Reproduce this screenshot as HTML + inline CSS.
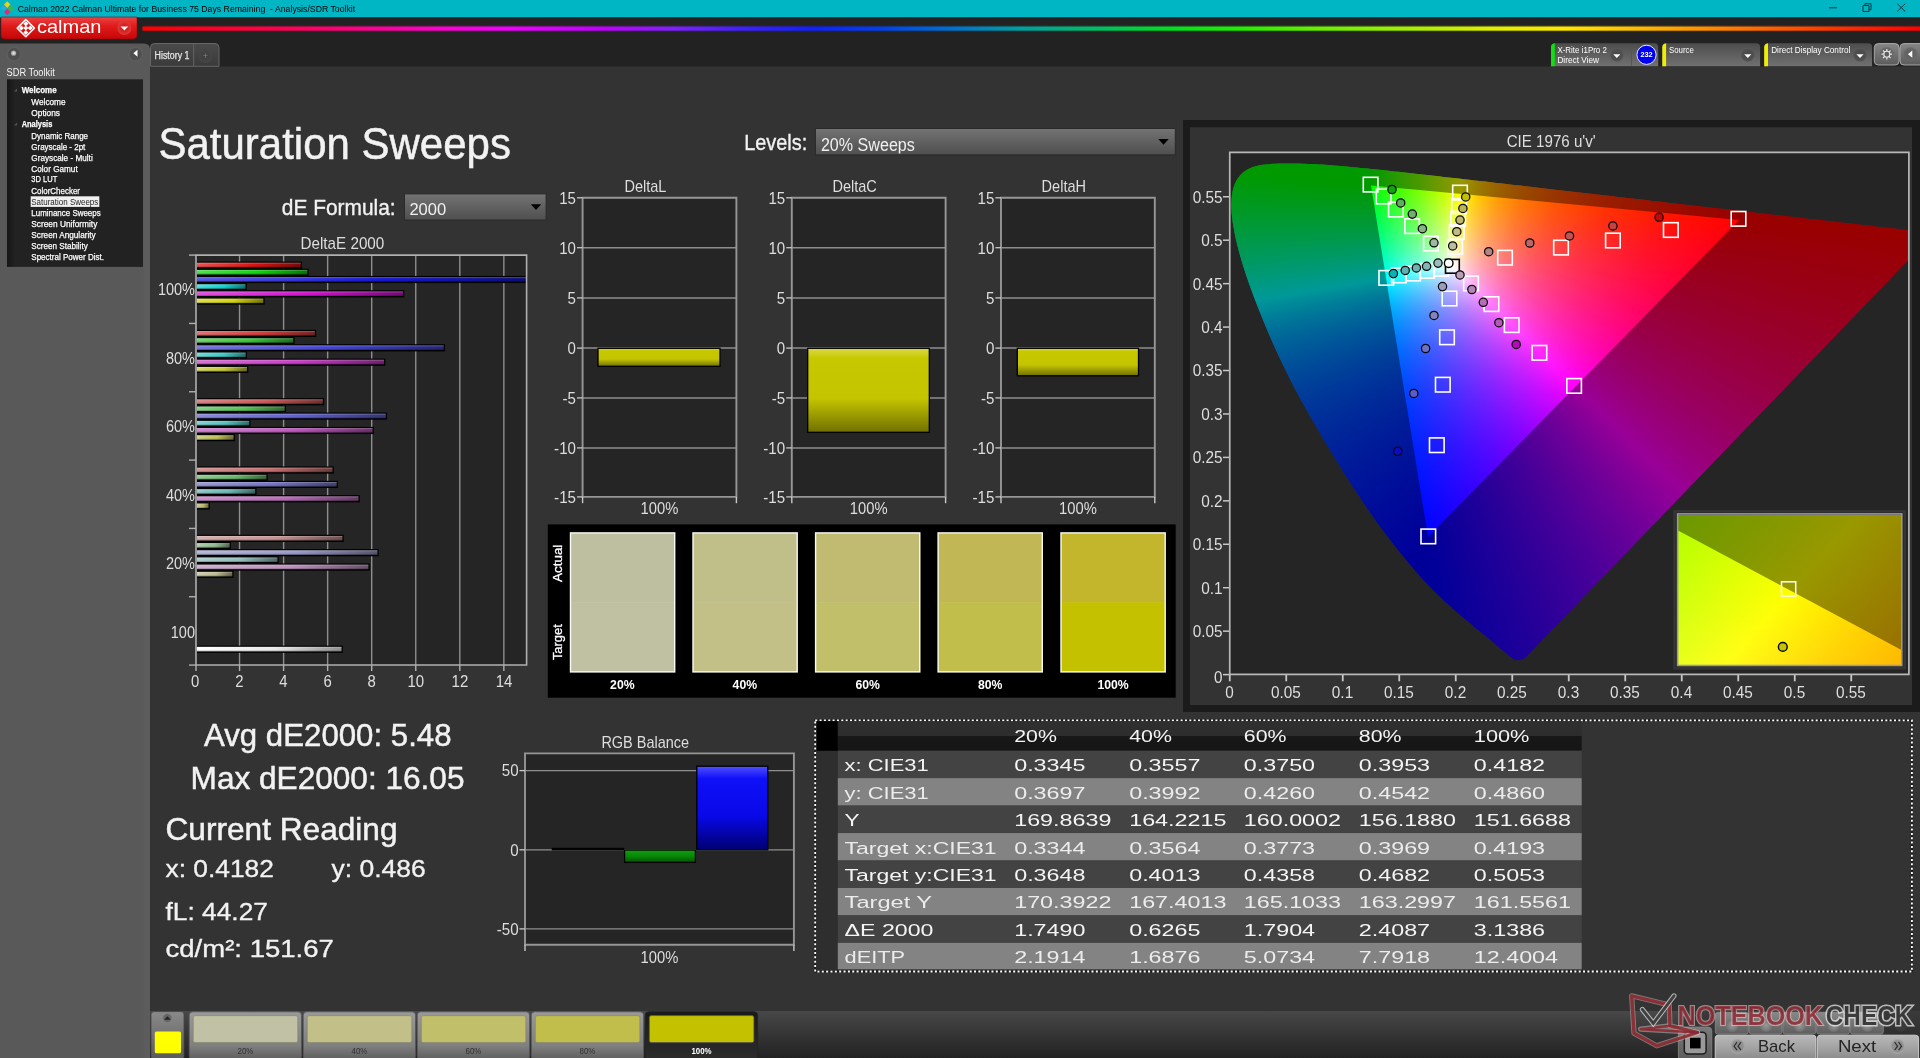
<!DOCTYPE html>
<html><head><meta charset="utf-8"><title>Calman - Saturation Sweeps</title>
<style>
html,body{margin:0;padding:0;background:#333;overflow:hidden}
body{width:1920px;height:1058px;position:relative;font-family:"Liberation Sans",sans-serif}
svg{position:absolute;left:0;top:0;will-change:transform}
svg text{font-family:"Liberation Sans",sans-serif;white-space:pre}
.cie{position:absolute;overflow:hidden}
.cie i{display:block;height:1px}
</style></head><body>
<svg width="1920" height="1058" viewBox="0 0 1920 1058"><defs><linearGradient id="g1" x1="0" y1="0" x2="0" y2="1"><stop offset="0" stop-color="#ea4444"/><stop offset="0.4" stop-color="#e01c1c"/><stop offset="1" stop-color="#c60606"/></linearGradient><radialGradient id="g2" cx="0.5" cy="0.5" r="0.5"><stop offset="0" stop-color="#c41010"/><stop offset="1" stop-color="#e23838"/></radialGradient><linearGradient id="g3" x1="0" y1="0" x2="1" y2="0"><stop offset="0" stop-color="#ff0000"/><stop offset="0.064" stop-color="#ff0040"/><stop offset="0.116" stop-color="#ff0080"/><stop offset="0.168" stop-color="#ff00d0"/><stop offset="0.207" stop-color="#f000ff"/><stop offset="0.259" stop-color="#c000ff"/><stop offset="0.298" stop-color="#8020ff"/><stop offset="0.337" stop-color="#4020ff"/><stop offset="0.376" stop-color="#1020ff"/><stop offset="0.415" stop-color="#0040f0"/><stop offset="0.454" stop-color="#0070d0"/><stop offset="0.494" stop-color="#00a0a0"/><stop offset="0.538" stop-color="#00c060"/><stop offset="0.577" stop-color="#00e020"/><stop offset="0.616" stop-color="#20f000"/><stop offset="0.655" stop-color="#60f000"/><stop offset="0.707" stop-color="#a0f000"/><stop offset="0.759" stop-color="#e0f000"/><stop offset="0.798" stop-color="#ffe800"/><stop offset="0.837" stop-color="#ffc000"/><stop offset="0.876" stop-color="#ff9000"/><stop offset="0.915" stop-color="#ff6000"/><stop offset="0.954" stop-color="#ff3000"/><stop offset="0.999" stop-color="#ff0000"/></linearGradient><radialGradient id="g4" cx="0.5" cy="0.5" r="0.5"><stop offset="0" stop-color="#4a4a4a"/><stop offset="0.8" stop-color="#505050"/><stop offset="1" stop-color="#646464"/></radialGradient><radialGradient id="g5" cx="0.5" cy="0.5" r="0.5"><stop offset="0" stop-color="#eee"/><stop offset="1" stop-color="#999"/></radialGradient><radialGradient id="g6" cx="0.5" cy="0.5" r="0.5"><stop offset="0" stop-color="#4a4a4a"/><stop offset="0.8" stop-color="#505050"/><stop offset="1" stop-color="#646464"/></radialGradient><linearGradient id="g7" x1="0" y1="0" x2="1" y2="0"><stop offset="0" stop-color="#161616"/><stop offset="0.06" stop-color="#222"/><stop offset="1" stop-color="#222"/></linearGradient><linearGradient id="g8" x1="0" y1="0" x2="0" y2="1"><stop offset="0" stop-color="#4a4a4a"/><stop offset="1" stop-color="#3a3a3a"/></linearGradient><radialGradient id="g9" cx="0.5" cy="0.5" r="0.5"><stop offset="0" stop-color="#3c3c3c"/><stop offset="1" stop-color="#464646"/></radialGradient><linearGradient id="g10" x1="0" y1="0" x2="0" y2="1"><stop offset="0" stop-color="#4d4d4d"/><stop offset="1" stop-color="#707070"/></linearGradient><radialGradient id="g11" cx="0.5" cy="0.5" r="0.5"><stop offset="0" stop-color="#484848"/><stop offset="0.8" stop-color="#505050"/><stop offset="1" stop-color="#5c5c5c"/></radialGradient><linearGradient id="g12" x1="0" y1="0" x2="0" y2="1"><stop offset="0" stop-color="#4d4d4d"/><stop offset="1" stop-color="#707070"/></linearGradient><radialGradient id="g13" cx="0.5" cy="0.5" r="0.5"><stop offset="0" stop-color="#484848"/><stop offset="0.8" stop-color="#505050"/><stop offset="1" stop-color="#5c5c5c"/></radialGradient><linearGradient id="g14" x1="0" y1="0" x2="0" y2="1"><stop offset="0" stop-color="#4d4d4d"/><stop offset="1" stop-color="#707070"/></linearGradient><radialGradient id="g15" cx="0.5" cy="0.5" r="0.5"><stop offset="0" stop-color="#484848"/><stop offset="0.8" stop-color="#505050"/><stop offset="1" stop-color="#5c5c5c"/></radialGradient><linearGradient id="g16" x1="0" y1="0" x2="0" y2="1"><stop offset="0" stop-color="#858585"/><stop offset="1" stop-color="#5c5c5c"/></linearGradient><radialGradient id="g17" cx="0.5" cy="0.5" r="0.5"><stop offset="0" stop-color="#5a5a5a"/><stop offset="1" stop-color="#6a6a6a"/></radialGradient><radialGradient id="g18" cx="0.5" cy="0.5" r="0.5"><stop offset="0" stop-color="#5a5a5a"/><stop offset="1" stop-color="#6a6a6a"/></radialGradient><linearGradient id="g19" x1="0" y1="0" x2="0" y2="1"><stop offset="0" stop-color="#737373"/><stop offset="1" stop-color="#4f4f4f"/></linearGradient><linearGradient id="g20" x1="0" y1="0" x2="0" y2="1"><stop offset="0" stop-color="#737373"/><stop offset="1" stop-color="#4f4f4f"/></linearGradient><linearGradient id="g21" x1="0" y1="0" x2="1" y2="0"><stop offset="0" stop-color="#e95353"/><stop offset="0.55" stop-color="#e01010"/><stop offset="1" stop-color="#7b0909"/></linearGradient><linearGradient id="g22" x1="0" y1="0" x2="0" y2="1"><stop offset="0" stop-color="#fff" stop-opacity="0.3"/><stop offset="0.35" stop-color="#fff" stop-opacity="0"/><stop offset="0.65" stop-color="#000" stop-opacity="0"/><stop offset="1" stop-color="#000" stop-opacity="0.3"/></linearGradient><linearGradient id="g23" x1="0" y1="0" x2="1" y2="0"><stop offset="0" stop-color="#53e053"/><stop offset="0.55" stop-color="#10d410"/><stop offset="1" stop-color="#097509"/></linearGradient><linearGradient id="g24" x1="0" y1="0" x2="0" y2="1"><stop offset="0" stop-color="#fff" stop-opacity="0.3"/><stop offset="0.35" stop-color="#fff" stop-opacity="0"/><stop offset="0.65" stop-color="#000" stop-opacity="0"/><stop offset="1" stop-color="#000" stop-opacity="0.3"/></linearGradient><linearGradient id="g25" x1="0" y1="0" x2="1" y2="0"><stop offset="0" stop-color="#5959e9"/><stop offset="0.55" stop-color="#1818e0"/><stop offset="1" stop-color="#0d0d7b"/></linearGradient><linearGradient id="g26" x1="0" y1="0" x2="0" y2="1"><stop offset="0" stop-color="#fff" stop-opacity="0.3"/><stop offset="0.35" stop-color="#fff" stop-opacity="0"/><stop offset="0.65" stop-color="#000" stop-opacity="0"/><stop offset="1" stop-color="#000" stop-opacity="0.3"/></linearGradient><linearGradient id="g27" x1="0" y1="0" x2="1" y2="0"><stop offset="0" stop-color="#53e0e0"/><stop offset="0.55" stop-color="#10d4d4"/><stop offset="1" stop-color="#097575"/></linearGradient><linearGradient id="g28" x1="0" y1="0" x2="0" y2="1"><stop offset="0" stop-color="#fff" stop-opacity="0.3"/><stop offset="0.35" stop-color="#fff" stop-opacity="0"/><stop offset="0.65" stop-color="#000" stop-opacity="0"/><stop offset="1" stop-color="#000" stop-opacity="0.3"/></linearGradient><linearGradient id="g29" x1="0" y1="0" x2="1" y2="0"><stop offset="0" stop-color="#e053e0"/><stop offset="0.55" stop-color="#d410d4"/><stop offset="1" stop-color="#750975"/></linearGradient><linearGradient id="g30" x1="0" y1="0" x2="0" y2="1"><stop offset="0" stop-color="#fff" stop-opacity="0.3"/><stop offset="0.35" stop-color="#fff" stop-opacity="0"/><stop offset="0.65" stop-color="#000" stop-opacity="0"/><stop offset="1" stop-color="#000" stop-opacity="0.3"/></linearGradient><linearGradient id="g31" x1="0" y1="0" x2="1" y2="0"><stop offset="0" stop-color="#e0e053"/><stop offset="0.55" stop-color="#d4d410"/><stop offset="1" stop-color="#757509"/></linearGradient><linearGradient id="g32" x1="0" y1="0" x2="0" y2="1"><stop offset="0" stop-color="#fff" stop-opacity="0.3"/><stop offset="0.35" stop-color="#fff" stop-opacity="0"/><stop offset="0.65" stop-color="#000" stop-opacity="0"/><stop offset="1" stop-color="#000" stop-opacity="0.3"/></linearGradient><linearGradient id="g33" x1="0" y1="0" x2="1" y2="0"><stop offset="0" stop-color="#e07373"/><stop offset="0.55" stop-color="#d43c3c"/><stop offset="1" stop-color="#752121"/></linearGradient><linearGradient id="g34" x1="0" y1="0" x2="0" y2="1"><stop offset="0" stop-color="#fff" stop-opacity="0.3"/><stop offset="0.35" stop-color="#fff" stop-opacity="0"/><stop offset="0.65" stop-color="#000" stop-opacity="0"/><stop offset="1" stop-color="#000" stop-opacity="0.3"/></linearGradient><linearGradient id="g35" x1="0" y1="0" x2="1" y2="0"><stop offset="0" stop-color="#73d773"/><stop offset="0.55" stop-color="#3cc83c"/><stop offset="1" stop-color="#216e21"/></linearGradient><linearGradient id="g36" x1="0" y1="0" x2="0" y2="1"><stop offset="0" stop-color="#fff" stop-opacity="0.3"/><stop offset="0.35" stop-color="#fff" stop-opacity="0"/><stop offset="0.65" stop-color="#000" stop-opacity="0"/><stop offset="1" stop-color="#000" stop-opacity="0.3"/></linearGradient><linearGradient id="g37" x1="0" y1="0" x2="1" y2="0"><stop offset="0" stop-color="#7878e0"/><stop offset="0.55" stop-color="#4444d4"/><stop offset="1" stop-color="#252575"/></linearGradient><linearGradient id="g38" x1="0" y1="0" x2="0" y2="1"><stop offset="0" stop-color="#fff" stop-opacity="0.3"/><stop offset="0.35" stop-color="#fff" stop-opacity="0"/><stop offset="0.65" stop-color="#000" stop-opacity="0"/><stop offset="1" stop-color="#000" stop-opacity="0.3"/></linearGradient><linearGradient id="g39" x1="0" y1="0" x2="1" y2="0"><stop offset="0" stop-color="#73d7d7"/><stop offset="0.55" stop-color="#3cc8c8"/><stop offset="1" stop-color="#216e6e"/></linearGradient><linearGradient id="g40" x1="0" y1="0" x2="0" y2="1"><stop offset="0" stop-color="#fff" stop-opacity="0.3"/><stop offset="0.35" stop-color="#fff" stop-opacity="0"/><stop offset="0.65" stop-color="#000" stop-opacity="0"/><stop offset="1" stop-color="#000" stop-opacity="0.3"/></linearGradient><linearGradient id="g41" x1="0" y1="0" x2="1" y2="0"><stop offset="0" stop-color="#d773d7"/><stop offset="0.55" stop-color="#c83cc8"/><stop offset="1" stop-color="#6e216e"/></linearGradient><linearGradient id="g42" x1="0" y1="0" x2="0" y2="1"><stop offset="0" stop-color="#fff" stop-opacity="0.3"/><stop offset="0.35" stop-color="#fff" stop-opacity="0"/><stop offset="0.65" stop-color="#000" stop-opacity="0"/><stop offset="1" stop-color="#000" stop-opacity="0.3"/></linearGradient><linearGradient id="g43" x1="0" y1="0" x2="1" y2="0"><stop offset="0" stop-color="#d7d773"/><stop offset="0.55" stop-color="#c8c83c"/><stop offset="1" stop-color="#6e6e21"/></linearGradient><linearGradient id="g44" x1="0" y1="0" x2="0" y2="1"><stop offset="0" stop-color="#fff" stop-opacity="0.3"/><stop offset="0.35" stop-color="#fff" stop-opacity="0"/><stop offset="0.65" stop-color="#000" stop-opacity="0"/><stop offset="1" stop-color="#000" stop-opacity="0.3"/></linearGradient><linearGradient id="g45" x1="0" y1="0" x2="1" y2="0"><stop offset="0" stop-color="#da8787"/><stop offset="0.55" stop-color="#cc5858"/><stop offset="1" stop-color="#703030"/></linearGradient><linearGradient id="g46" x1="0" y1="0" x2="0" y2="1"><stop offset="0" stop-color="#fff" stop-opacity="0.3"/><stop offset="0.35" stop-color="#fff" stop-opacity="0"/><stop offset="0.65" stop-color="#000" stop-opacity="0"/><stop offset="1" stop-color="#000" stop-opacity="0.3"/></linearGradient><linearGradient id="g47" x1="0" y1="0" x2="1" y2="0"><stop offset="0" stop-color="#87d287"/><stop offset="0.55" stop-color="#58c058"/><stop offset="1" stop-color="#306a30"/></linearGradient><linearGradient id="g48" x1="0" y1="0" x2="0" y2="1"><stop offset="0" stop-color="#fff" stop-opacity="0.3"/><stop offset="0.35" stop-color="#fff" stop-opacity="0"/><stop offset="0.65" stop-color="#000" stop-opacity="0"/><stop offset="1" stop-color="#000" stop-opacity="0.3"/></linearGradient><linearGradient id="g49" x1="0" y1="0" x2="1" y2="0"><stop offset="0" stop-color="#8d8dda"/><stop offset="0.55" stop-color="#6060cc"/><stop offset="1" stop-color="#353570"/></linearGradient><linearGradient id="g50" x1="0" y1="0" x2="0" y2="1"><stop offset="0" stop-color="#fff" stop-opacity="0.3"/><stop offset="0.35" stop-color="#fff" stop-opacity="0"/><stop offset="0.65" stop-color="#000" stop-opacity="0"/><stop offset="1" stop-color="#000" stop-opacity="0.3"/></linearGradient><linearGradient id="g51" x1="0" y1="0" x2="1" y2="0"><stop offset="0" stop-color="#87d2d2"/><stop offset="0.55" stop-color="#58c0c0"/><stop offset="1" stop-color="#306a6a"/></linearGradient><linearGradient id="g52" x1="0" y1="0" x2="0" y2="1"><stop offset="0" stop-color="#fff" stop-opacity="0.3"/><stop offset="0.35" stop-color="#fff" stop-opacity="0"/><stop offset="0.65" stop-color="#000" stop-opacity="0"/><stop offset="1" stop-color="#000" stop-opacity="0.3"/></linearGradient><linearGradient id="g53" x1="0" y1="0" x2="1" y2="0"><stop offset="0" stop-color="#d287d2"/><stop offset="0.55" stop-color="#c058c0"/><stop offset="1" stop-color="#6a306a"/></linearGradient><linearGradient id="g54" x1="0" y1="0" x2="0" y2="1"><stop offset="0" stop-color="#fff" stop-opacity="0.3"/><stop offset="0.35" stop-color="#fff" stop-opacity="0"/><stop offset="0.65" stop-color="#000" stop-opacity="0"/><stop offset="1" stop-color="#000" stop-opacity="0.3"/></linearGradient><linearGradient id="g55" x1="0" y1="0" x2="1" y2="0"><stop offset="0" stop-color="#d2d287"/><stop offset="0.55" stop-color="#c0c058"/><stop offset="1" stop-color="#6a6a30"/></linearGradient><linearGradient id="g56" x1="0" y1="0" x2="0" y2="1"><stop offset="0" stop-color="#fff" stop-opacity="0.3"/><stop offset="0.35" stop-color="#fff" stop-opacity="0"/><stop offset="0.65" stop-color="#000" stop-opacity="0"/><stop offset="1" stop-color="#000" stop-opacity="0.3"/></linearGradient><linearGradient id="g57" x1="0" y1="0" x2="1" y2="0"><stop offset="0" stop-color="#d59595"/><stop offset="0.55" stop-color="#c46c6c"/><stop offset="1" stop-color="#6c3b3b"/></linearGradient><linearGradient id="g58" x1="0" y1="0" x2="0" y2="1"><stop offset="0" stop-color="#fff" stop-opacity="0.3"/><stop offset="0.35" stop-color="#fff" stop-opacity="0"/><stop offset="0.65" stop-color="#000" stop-opacity="0"/><stop offset="1" stop-color="#000" stop-opacity="0.3"/></linearGradient><linearGradient id="g59" x1="0" y1="0" x2="1" y2="0"><stop offset="0" stop-color="#95cc95"/><stop offset="0.55" stop-color="#6cb86c"/><stop offset="1" stop-color="#3b653b"/></linearGradient><linearGradient id="g60" x1="0" y1="0" x2="0" y2="1"><stop offset="0" stop-color="#fff" stop-opacity="0.3"/><stop offset="0.35" stop-color="#fff" stop-opacity="0"/><stop offset="0.65" stop-color="#000" stop-opacity="0"/><stop offset="1" stop-color="#000" stop-opacity="0.3"/></linearGradient><linearGradient id="g61" x1="0" y1="0" x2="1" y2="0"><stop offset="0" stop-color="#9b9bd5"/><stop offset="0.55" stop-color="#7474c4"/><stop offset="1" stop-color="#40406c"/></linearGradient><linearGradient id="g62" x1="0" y1="0" x2="0" y2="1"><stop offset="0" stop-color="#fff" stop-opacity="0.3"/><stop offset="0.35" stop-color="#fff" stop-opacity="0"/><stop offset="0.65" stop-color="#000" stop-opacity="0"/><stop offset="1" stop-color="#000" stop-opacity="0.3"/></linearGradient><linearGradient id="g63" x1="0" y1="0" x2="1" y2="0"><stop offset="0" stop-color="#95cccc"/><stop offset="0.55" stop-color="#6cb8b8"/><stop offset="1" stop-color="#3b6565"/></linearGradient><linearGradient id="g64" x1="0" y1="0" x2="0" y2="1"><stop offset="0" stop-color="#fff" stop-opacity="0.3"/><stop offset="0.35" stop-color="#fff" stop-opacity="0"/><stop offset="0.65" stop-color="#000" stop-opacity="0"/><stop offset="1" stop-color="#000" stop-opacity="0.3"/></linearGradient><linearGradient id="g65" x1="0" y1="0" x2="1" y2="0"><stop offset="0" stop-color="#cc95cc"/><stop offset="0.55" stop-color="#b86cb8"/><stop offset="1" stop-color="#653b65"/></linearGradient><linearGradient id="g66" x1="0" y1="0" x2="0" y2="1"><stop offset="0" stop-color="#fff" stop-opacity="0.3"/><stop offset="0.35" stop-color="#fff" stop-opacity="0"/><stop offset="0.65" stop-color="#000" stop-opacity="0"/><stop offset="1" stop-color="#000" stop-opacity="0.3"/></linearGradient><linearGradient id="g67" x1="0" y1="0" x2="1" y2="0"><stop offset="0" stop-color="#cccc95"/><stop offset="0.55" stop-color="#b8b86c"/><stop offset="1" stop-color="#65653b"/></linearGradient><linearGradient id="g68" x1="0" y1="0" x2="0" y2="1"><stop offset="0" stop-color="#fff" stop-opacity="0.3"/><stop offset="0.35" stop-color="#fff" stop-opacity="0"/><stop offset="0.65" stop-color="#000" stop-opacity="0"/><stop offset="1" stop-color="#000" stop-opacity="0.3"/></linearGradient><linearGradient id="g69" x1="0" y1="0" x2="1" y2="0"><stop offset="0" stop-color="#d7b1b1"/><stop offset="0.55" stop-color="#c89292"/><stop offset="1" stop-color="#6e5050"/></linearGradient><linearGradient id="g70" x1="0" y1="0" x2="0" y2="1"><stop offset="0" stop-color="#fff" stop-opacity="0.3"/><stop offset="0.35" stop-color="#fff" stop-opacity="0"/><stop offset="0.65" stop-color="#000" stop-opacity="0"/><stop offset="1" stop-color="#000" stop-opacity="0.3"/></linearGradient><linearGradient id="g71" x1="0" y1="0" x2="1" y2="0"><stop offset="0" stop-color="#b1cfb1"/><stop offset="0.55" stop-color="#92bc92"/><stop offset="1" stop-color="#506750"/></linearGradient><linearGradient id="g72" x1="0" y1="0" x2="0" y2="1"><stop offset="0" stop-color="#fff" stop-opacity="0.3"/><stop offset="0.35" stop-color="#fff" stop-opacity="0"/><stop offset="0.65" stop-color="#000" stop-opacity="0"/><stop offset="1" stop-color="#000" stop-opacity="0.3"/></linearGradient><linearGradient id="g73" x1="0" y1="0" x2="1" y2="0"><stop offset="0" stop-color="#b6b6d7"/><stop offset="0.55" stop-color="#9a9ac8"/><stop offset="1" stop-color="#55556e"/></linearGradient><linearGradient id="g74" x1="0" y1="0" x2="0" y2="1"><stop offset="0" stop-color="#fff" stop-opacity="0.3"/><stop offset="0.35" stop-color="#fff" stop-opacity="0"/><stop offset="0.65" stop-color="#000" stop-opacity="0"/><stop offset="1" stop-color="#000" stop-opacity="0.3"/></linearGradient><linearGradient id="g75" x1="0" y1="0" x2="1" y2="0"><stop offset="0" stop-color="#b1cfcf"/><stop offset="0.55" stop-color="#92bcbc"/><stop offset="1" stop-color="#506767"/></linearGradient><linearGradient id="g76" x1="0" y1="0" x2="0" y2="1"><stop offset="0" stop-color="#fff" stop-opacity="0.3"/><stop offset="0.35" stop-color="#fff" stop-opacity="0"/><stop offset="0.65" stop-color="#000" stop-opacity="0"/><stop offset="1" stop-color="#000" stop-opacity="0.3"/></linearGradient><linearGradient id="g77" x1="0" y1="0" x2="1" y2="0"><stop offset="0" stop-color="#cfb1cf"/><stop offset="0.55" stop-color="#bc92bc"/><stop offset="1" stop-color="#675067"/></linearGradient><linearGradient id="g78" x1="0" y1="0" x2="0" y2="1"><stop offset="0" stop-color="#fff" stop-opacity="0.3"/><stop offset="0.35" stop-color="#fff" stop-opacity="0"/><stop offset="0.65" stop-color="#000" stop-opacity="0"/><stop offset="1" stop-color="#000" stop-opacity="0.3"/></linearGradient><linearGradient id="g79" x1="0" y1="0" x2="1" y2="0"><stop offset="0" stop-color="#cfcfb1"/><stop offset="0.55" stop-color="#bcbc92"/><stop offset="1" stop-color="#676750"/></linearGradient><linearGradient id="g80" x1="0" y1="0" x2="0" y2="1"><stop offset="0" stop-color="#fff" stop-opacity="0.3"/><stop offset="0.35" stop-color="#fff" stop-opacity="0"/><stop offset="0.65" stop-color="#000" stop-opacity="0"/><stop offset="1" stop-color="#000" stop-opacity="0.3"/></linearGradient><linearGradient id="g81" x1="0" y1="0" x2="1" y2="0"><stop offset="0" stop-color="#ffffff"/><stop offset="0.55" stop-color="#e8e8e8"/><stop offset="1" stop-color="#909090"/></linearGradient><linearGradient id="g82" x1="0" y1="0" x2="0" y2="1"><stop offset="0" stop-color="#fff" stop-opacity="0.3"/><stop offset="0.35" stop-color="#fff" stop-opacity="0"/><stop offset="0.65" stop-color="#000" stop-opacity="0"/><stop offset="1" stop-color="#000" stop-opacity="0.3"/></linearGradient><linearGradient id="g83" x1="0" y1="0" x2="0" y2="1"><stop offset="0" stop-color="#d8d84a"/><stop offset="0.12" stop-color="#c8c800"/><stop offset="0.6" stop-color="#c4c400"/><stop offset="1" stop-color="#707000"/></linearGradient><linearGradient id="g84" x1="0" y1="0" x2="0" y2="1"><stop offset="0" stop-color="#d8d84a"/><stop offset="0.12" stop-color="#c8c800"/><stop offset="0.6" stop-color="#c4c400"/><stop offset="1" stop-color="#707000"/></linearGradient><linearGradient id="g85" x1="0" y1="0" x2="0" y2="1"><stop offset="0" stop-color="#d8d84a"/><stop offset="0.12" stop-color="#c8c800"/><stop offset="0.6" stop-color="#c4c400"/><stop offset="1" stop-color="#707000"/></linearGradient><linearGradient id="g86" x1="0" y1="0" x2="0" y2="1"><stop offset="0" stop-color="#10a010"/><stop offset="0.5" stop-color="#088808"/><stop offset="1" stop-color="#045004"/></linearGradient><linearGradient id="g87" x1="0" y1="0" x2="0" y2="1"><stop offset="0" stop-color="#5050ff"/><stop offset="0.15" stop-color="#1010f8"/><stop offset="0.6" stop-color="#0808e8"/><stop offset="1" stop-color="#000070"/></linearGradient><linearGradient id="g88" x1="0" y1="0" x2="0" y2="1"><stop offset="0" stop-color="#2f2f2f"/><stop offset="0.5" stop-color="#2d2d2d"/><stop offset="0.5" stop-color="#181818"/><stop offset="1" stop-color="#151515"/></linearGradient><linearGradient id="g89" x1="0" y1="0" x2="0" y2="1"><stop offset="0" stop-color="#484848"/><stop offset="0.3" stop-color="#3c3c3c"/><stop offset="1" stop-color="#222"/></linearGradient><linearGradient id="g90" x1="0" y1="0" x2="0" y2="1"><stop offset="0" stop-color="#8a8a8a"/><stop offset="1" stop-color="#5a5a5a"/></linearGradient><linearGradient id="g91" x1="0" y1="0" x2="0" y2="1"><stop offset="0" stop-color="#9a9a9a"/><stop offset="0.7" stop-color="#808080"/><stop offset="1" stop-color="#5c5c5c"/></linearGradient><linearGradient id="g92" x1="0" y1="0" x2="0" y2="1"><stop offset="0" stop-color="#9a9a9a"/><stop offset="0.7" stop-color="#808080"/><stop offset="1" stop-color="#5c5c5c"/></linearGradient><linearGradient id="g93" x1="0" y1="0" x2="0" y2="1"><stop offset="0" stop-color="#9a9a9a"/><stop offset="0.7" stop-color="#808080"/><stop offset="1" stop-color="#5c5c5c"/></linearGradient><linearGradient id="g94" x1="0" y1="0" x2="0" y2="1"><stop offset="0" stop-color="#9a9a9a"/><stop offset="0.7" stop-color="#808080"/><stop offset="1" stop-color="#5c5c5c"/></linearGradient><linearGradient id="g95" x1="0" y1="0" x2="0" y2="1"><stop offset="0" stop-color="#1a1a1a"/><stop offset="1" stop-color="#2c2c2c"/></linearGradient><linearGradient id="g96" x1="0" y1="0" x2="0" y2="1"><stop offset="0" stop-color="#b8b8b8"/><stop offset="0.5" stop-color="#a2a2a2"/><stop offset="1" stop-color="#858585"/></linearGradient><linearGradient id="g97" x1="0" y1="0" x2="0" y2="1"><stop offset="0" stop-color="#3a3a3a"/><stop offset="1" stop-color="#262626"/></linearGradient><linearGradient id="g98" x1="0" y1="0" x2="0" y2="1"><stop offset="0" stop-color="#888"/><stop offset="0.5" stop-color="#747474"/><stop offset="1" stop-color="#5e5e5e"/></linearGradient><radialGradient id="g99" cx="0.5" cy="0.5" r="0.5"><stop offset="0" stop-color="#9a9a9a"/><stop offset="1" stop-color="#707070"/></radialGradient><radialGradient id="g100" cx="0.5" cy="0.5" r="0.5"><stop offset="0" stop-color="#9a9a9a"/><stop offset="1" stop-color="#707070"/></radialGradient><radialGradient id="g101" cx="0.5" cy="0.5" r="0.5"><stop offset="0" stop-color="#9a9a9a"/><stop offset="1" stop-color="#707070"/></radialGradient><radialGradient id="g102" cx="0.5" cy="0.5" r="0.5"><stop offset="0" stop-color="#9a9a9a"/><stop offset="1" stop-color="#707070"/></radialGradient><radialGradient id="g103" cx="0.5" cy="0.5" r="0.5"><stop offset="0" stop-color="#9a9a9a"/><stop offset="1" stop-color="#707070"/></radialGradient><linearGradient id="g104" x1="0" y1="0" x2="0" y2="1"><stop offset="0" stop-color="#7a7a7a"/><stop offset="1" stop-color="#5a5a5a"/></linearGradient><radialGradient id="g105" cx="0.5" cy="0.5" r="0.5"><stop offset="0" stop-color="#8a8a8a"/><stop offset="0.7" stop-color="#909090"/><stop offset="1" stop-color="#a8a8a8"/></radialGradient></defs>
<rect x="0" y="0" width="1920" height="1058" fill="#333"/>
<rect x="0" y="17" width="1920" height="49.5" fill="#222"/>
<rect x="0" y="0" width="1920" height="17.2" fill="#00b5c4"/>
<path d="M7.2 1.3l3.2 3.3l-3.2 3.3l-3.2-3.3z" fill="#e8d21d"/>
<path d="M3.6 5l3.2 3.3l-3.2 3.3l-3.2-3.3z" fill="#2aa9e0"/>
<path d="M10.9 5l3.2 3.3l-3.2 3.3l-3.2-3.3z" fill="#3db54a"/>
<path d="M7.2 8.7l3.2 3.3l-3.2 3.3l-3.2-3.3z" fill="#e5267d"/>
<text x="17.7" y="12.1" font-size="9.9" fill="#000" textLength="337.5" lengthAdjust="spacingAndGlyphs">Calman 2022 Calman Ultimate for Business 75 Days Remaining  - Analysis/SDR Toolkit</text>
<line x1="1829" y1="7.8" x2="1837" y2="7.8" stroke="#10363a" stroke-width="1"/>
<path d="M1863 5.5h6v6h-6zM1865 5.5v-1.8h6v6h-2" fill="none" stroke="#10363a" stroke-width="1"/>
<path d="M1897.2 3.7l8 7.8M1905.2 3.7l-8 7.8" fill="none" stroke="#10363a" stroke-width="1"/>
<path d="M1 17H137V35q0 4-4 4H5q-4 0-4-4z" fill="url(#g1)" stroke="#8c0a14" stroke-width="0.6"/>
<path d="M25.8 19.5l8.6 8.6l-8.6 8.6l-8.6-8.6z" fill="none" stroke="#fff" stroke-width="1.5" stroke-linejoin="round"/>
<path d="M25.8 21.2l2.5 2.5l-2.5 2.5l-2.5-2.5z" fill="#fff"/>
<path d="M21.4 25.6l2.5 2.5l-2.5 2.5l-2.5-2.5z" fill="#fff"/>
<path d="M30.2 25.6l2.5 2.5l-2.5 2.5l-2.5-2.5z" fill="#fff"/>
<path d="M25.8 30l2.5 2.5l-2.5 2.5l-2.5-2.5z" fill="#fff"/>
<path d="M25.8 25.6l2.5 2.5l-2.5 2.5l-2.5-2.5z" fill="#fff"/>
<text x="37.0" y="32.5" font-size="18.5" fill="#fff" textLength="64.4" lengthAdjust="spacingAndGlyphs">calman</text>
<circle cx="124.4" cy="28" r="7" fill="url(#g2)"/>
<path d="M120.6 26.4h7.6l-3.8 4.2z" fill="#fff"/>
<rect x="142.3" y="25.8" width="1780" height="5.4" fill="url(#g3)" rx="1.5" opacity="0.4"/>
<rect x="142.5" y="26.7" width="1780" height="3.7" fill="url(#g3)" rx="1"/>
<path d="M0 43.5H144q6 0 6 6V1058H0z" fill="#595959"/>
<rect x="143.5" y="80" width="6.5" height="978" fill="#5c5c5c"/>
<circle cx="14" cy="54.2" r="7.2" fill="url(#g4)"/>
<circle cx="13.6" cy="53.2" r="2.6" fill="url(#g5)"/>
<circle cx="135.6" cy="54.2" r="7.2" fill="url(#g6)"/>
<path d="M137.5 49.8v7l-4.2-3.5z" fill="#fff"/>
<text x="6.6" y="75.9" font-size="10.3" fill="#f4f4f4" textLength="48.2" lengthAdjust="spacingAndGlyphs">SDR Toolkit</text>
<rect x="7" y="79.3" width="136" height="187.6" fill="url(#g7)"/>
<text x="21.7" y="92.8" font-size="9.0" fill="#fff" textLength="35.0" lengthAdjust="spacingAndGlyphs" font-weight="bold" stroke="#fff" stroke-width="0.25">Welcome</text>
<path d="M14 91.5l3-3v3z" fill="#555"/>
<text x="31.3" y="104.5" font-size="9.0" fill="#fff" textLength="34.3" lengthAdjust="spacingAndGlyphs" stroke="#fff" stroke-width="0.25">Welcome</text>
<text x="31.3" y="115.5" font-size="9.0" fill="#fff" textLength="28.7" lengthAdjust="spacingAndGlyphs" stroke="#fff" stroke-width="0.25">Options</text>
<text x="21.7" y="126.8" font-size="9.0" fill="#fff" textLength="30.6" lengthAdjust="spacingAndGlyphs" font-weight="bold" stroke="#fff" stroke-width="0.25">Analysis</text>
<path d="M14 125.5l3-3v3z" fill="#555"/>
<text x="31.3" y="138.8" font-size="9.0" fill="#fff" textLength="56.7" lengthAdjust="spacingAndGlyphs" stroke="#fff" stroke-width="0.25">Dynamic Range</text>
<text x="31.3" y="149.5" font-size="9.0" fill="#fff" textLength="54.0" lengthAdjust="spacingAndGlyphs" stroke="#fff" stroke-width="0.25">Grayscale - 2pt</text>
<text x="31.3" y="160.5" font-size="9.0" fill="#fff" textLength="61.4" lengthAdjust="spacingAndGlyphs" stroke="#fff" stroke-width="0.25">Grayscale - Multi</text>
<text x="31.3" y="171.8" font-size="9.0" fill="#fff" textLength="46.4" lengthAdjust="spacingAndGlyphs" stroke="#fff" stroke-width="0.25">Color Gamut</text>
<text x="31.3" y="182.1" font-size="9.0" fill="#fff" textLength="26.0" lengthAdjust="spacingAndGlyphs" stroke="#fff" stroke-width="0.25">3D LUT</text>
<text x="31.3" y="193.5" font-size="9.0" fill="#fff" textLength="48.7" lengthAdjust="spacingAndGlyphs" stroke="#fff" stroke-width="0.25">ColorChecker</text>
<rect x="30.7" y="196.3" width="68.6" height="10.6" fill="#f0f0f0"/>
<text x="31.3" y="204.5" font-size="9.0" fill="#222" textLength="67.0" lengthAdjust="spacingAndGlyphs">Saturation Sweeps</text>
<text x="31.3" y="215.5" font-size="9.0" fill="#fff" textLength="69.4" lengthAdjust="spacingAndGlyphs" stroke="#fff" stroke-width="0.25">Luminance Sweeps</text>
<text x="31.3" y="226.5" font-size="9.0" fill="#fff" textLength="66.0" lengthAdjust="spacingAndGlyphs" stroke="#fff" stroke-width="0.25">Screen Uniformity</text>
<text x="31.3" y="237.8" font-size="9.0" fill="#fff" textLength="64.4" lengthAdjust="spacingAndGlyphs" stroke="#fff" stroke-width="0.25">Screen Angularity</text>
<text x="31.3" y="248.5" font-size="9.0" fill="#fff" textLength="56.4" lengthAdjust="spacingAndGlyphs" stroke="#fff" stroke-width="0.25">Screen Stability</text>
<text x="31.3" y="259.8" font-size="9.0" fill="#fff" textLength="72.7" lengthAdjust="spacingAndGlyphs" stroke="#fff" stroke-width="0.25">Spectral Power Dist.</text>
<path d="M150.5 66.3V47.5q0-4 4-4H215q4 0 4 4V66.3z" fill="url(#g8)" stroke="#666" stroke-width="1"/>
<line x1="193.6" y1="44" x2="193.6" y2="66" stroke="#5e5e5e" stroke-width="1.2"/>
<text x="154.6" y="58.9" font-size="10.0" fill="#e6e6e6" textLength="34.8" lengthAdjust="spacingAndGlyphs" stroke="#e6e6e6" stroke-width="0.25">History 1</text>
<circle cx="205.4" cy="56.1" r="7" fill="url(#g9)"/>
<text x="205.4" y="59.0" font-size="9.0" fill="#888" text-anchor="middle">+</text>
<path d="M1551 66.2V47.3q0-4 4-4H1654.2q4 0 4 4V66.2z" fill="url(#g10)"/>
<path d="M1551 66.2V47.3q0-3.5 3.8-4V66.2z" fill="#10e010"/>
<text x="1557.4" y="53.2" font-size="9.6" fill="#fff" textLength="49.5" lengthAdjust="spacingAndGlyphs">X-Rite i1Pro 2</text>
<text x="1557.4" y="63.4" font-size="9.6" fill="#fff" textLength="41.6" lengthAdjust="spacingAndGlyphs">Direct View</text>
<circle cx="1616.8" cy="54.8" r="7" fill="url(#g11)"/>
<path d="M1613.2 54.2h7.2l-3.6 3.8z" fill="#fff"/>
<line x1="1631.4" y1="46" x2="1631.4" y2="66" stroke="#555" stroke-width="1"/>
<circle cx="1646.5" cy="54.8" r="9.6" fill="#0000f0" stroke="#e8e8ff" stroke-width="1"/>
<text x="1640.4" y="57.4" font-size="7.3" fill="#fff" textLength="12.2" lengthAdjust="spacingAndGlyphs" font-weight="bold">232</text>
<path d="M1662.3 66.2V47.3q0-4 4-4H1756.1q4 0 4 4V66.2z" fill="url(#g12)"/>
<path d="M1662.3 66.2V47.3q0-3.5 3.8-4V66.2z" fill="#f0ee00"/>
<text x="1669.0" y="53.2" font-size="9.6" fill="#fff" textLength="24.9" lengthAdjust="spacingAndGlyphs">Source</text>
<circle cx="1747.8" cy="54.8" r="7" fill="url(#g13)"/>
<path d="M1744.2 54.2h7.2l-3.6 3.8z" fill="#fff"/>
<path d="M1764.2 66.2V47.3q0-4 4-4H1868.1q4 0 4 4V66.2z" fill="url(#g14)"/>
<path d="M1764.2 66.2V47.3q0-3.5 3.8-4V66.2z" fill="#f0ee00"/>
<text x="1771.2" y="53.2" font-size="9.6" fill="#fff" textLength="79.1" lengthAdjust="spacingAndGlyphs">Direct Display Control</text>
<circle cx="1860" cy="54.8" r="7" fill="url(#g15)"/>
<path d="M1856.4 54.2h7.2l-3.6 3.8z" fill="#fff"/>
<rect x="1874.3" y="43.6" width="24.8" height="21.4" fill="url(#g16)" rx="4" stroke="#b0b0b0" stroke-width="0.9"/>
<rect x="1900" y="43.6" width="26" height="21.4" fill="url(#g16)" rx="4" stroke="#b0b0b0" stroke-width="0.9"/>
<circle cx="1886.7" cy="54.3" r="7" fill="url(#g17)"/>
<circle cx="1910.5" cy="54.3" r="7" fill="url(#g18)"/>
<path d="M1889.80 54.20L1892.10 54.20M1888.92 56.32L1890.55 57.95M1886.80 57.20L1886.80 59.50M1884.68 56.32L1883.05 57.95M1883.80 54.20L1881.50 54.20M1884.68 52.08L1883.05 50.45M1886.80 51.20L1886.80 48.90M1888.92 52.08L1890.55 50.45" fill="none" stroke="#e4e4e4" stroke-width="1.25"/>
<circle cx="1886.8" cy="54.2" r="3" fill="none" stroke="#e4e4e4" stroke-width="1.15"/>
<path d="M1912.3 50.6v7.2l-4.4-3.6z" fill="#fff"/>
<text x="158.5" y="158.7" font-size="43.6" fill="#f2f2f2" textLength="352.4" lengthAdjust="spacingAndGlyphs" stroke="#f2f2f2" stroke-width="0.50">Saturation Sweeps</text>
<text x="281.8" y="215.3" font-size="22.7" fill="#f2f2f2" textLength="113.8" lengthAdjust="spacingAndGlyphs" stroke="#f2f2f2" stroke-width="0.35">dE Formula:</text>
<rect x="404.5" y="193.9" width="141.6" height="26.1" fill="url(#g19)" stroke="#2a2a2a" stroke-width="1"/>
<clipPath id="cp404"><rect x="404.5" y="193.9" width="141.6" height="24.6"/></clipPath>
<text x="409.4" y="215.0" font-size="16.6" fill="#f0f0f0" textLength="36.9" lengthAdjust="spacingAndGlyphs" clip-path="url(#cp404)">2000</text>
<path d="M530.8 204.35h10.4l-5.2 5.6z" fill="#000"/>
<text x="300.5" y="248.8" font-size="16.1" fill="#dedede" textLength="83.8" lengthAdjust="spacingAndGlyphs">DeltaE 2000</text>
<text x="744.2" y="150.2" font-size="22.5" fill="#f2f2f2" textLength="63.1" lengthAdjust="spacingAndGlyphs" stroke="#f2f2f2" stroke-width="0.35">Levels:</text>
<rect x="815.4" y="128.5" width="359.9" height="26.4" fill="url(#g20)" stroke="#2a2a2a" stroke-width="1"/>
<clipPath id="cp815"><rect x="815.4" y="128.5" width="359.9" height="24.9"/></clipPath>
<text x="820.9" y="151.0" font-size="17.5" fill="#f0f0f0" textLength="94.0" lengthAdjust="spacingAndGlyphs" clip-path="url(#cp815)">20% Sweeps</text>
<path d="M1158.3 139.1h10.4l-5.2 5.6z" fill="#000"/>
<rect x="196" y="255.1" width="330.6" height="409.9" fill="#252525"/>
<line x1="239.55" y1="255.1" x2="239.55" y2="665" stroke="#8e8e8e" stroke-width="1.4"/>
<line x1="283.6" y1="255.1" x2="283.6" y2="665" stroke="#8e8e8e" stroke-width="1.4"/>
<line x1="327.65" y1="255.1" x2="327.65" y2="665" stroke="#8e8e8e" stroke-width="1.4"/>
<line x1="371.7" y1="255.1" x2="371.7" y2="665" stroke="#8e8e8e" stroke-width="1.4"/>
<line x1="415.75" y1="255.1" x2="415.75" y2="665" stroke="#8e8e8e" stroke-width="1.4"/>
<line x1="459.8" y1="255.1" x2="459.8" y2="665" stroke="#8e8e8e" stroke-width="1.4"/>
<line x1="503.85" y1="255.1" x2="503.85" y2="665" stroke="#8e8e8e" stroke-width="1.4"/>
<rect x="196.8" y="261.55" width="105.279" height="7.2" fill="#000"/>
<rect x="196.8" y="262.75" width="103.979" height="4.5" fill="url(#g21)"/>
<rect x="196.8" y="262.75" width="103.979" height="4.5" fill="url(#g22)"/>
<rect x="196.8" y="268.73" width="111.887" height="7.2" fill="#000"/>
<rect x="196.8" y="269.93" width="110.587" height="4.5" fill="url(#g23)"/>
<rect x="196.8" y="269.93" width="110.587" height="4.5" fill="url(#g24)"/>
<rect x="196.8" y="275.91" width="330.5" height="7.2" fill="#000"/>
<rect x="196.8" y="277.11" width="329.2" height="4.5" fill="url(#g25)"/>
<rect x="196.8" y="277.11" width="329.2" height="4.5" fill="url(#g26)"/>
<rect x="196.8" y="283.09" width="49.9967" height="7.2" fill="#000"/>
<rect x="196.8" y="284.29" width="48.6967" height="4.5" fill="url(#g27)"/>
<rect x="196.8" y="284.29" width="48.6967" height="4.5" fill="url(#g28)"/>
<rect x="196.8" y="290.27" width="207.476" height="7.2" fill="#000"/>
<rect x="196.8" y="291.47" width="206.175" height="4.5" fill="url(#g29)"/>
<rect x="196.8" y="291.47" width="206.175" height="4.5" fill="url(#g30)"/>
<rect x="196.8" y="297.45" width="67.837" height="7.2" fill="#000"/>
<rect x="196.8" y="298.65" width="66.537" height="4.5" fill="url(#g31)"/>
<rect x="196.8" y="298.65" width="66.537" height="4.5" fill="url(#g32)"/>
<rect x="196.8" y="329.85" width="119.375" height="7.2" fill="#000"/>
<rect x="196.8" y="331.05" width="118.075" height="4.5" fill="url(#g33)"/>
<rect x="196.8" y="331.05" width="118.075" height="4.5" fill="url(#g34)"/>
<rect x="196.8" y="337.03" width="97.791" height="7.2" fill="#000"/>
<rect x="196.8" y="338.23" width="96.491" height="4.5" fill="url(#g35)"/>
<rect x="196.8" y="338.23" width="96.491" height="4.5" fill="url(#g36)"/>
<rect x="196.8" y="344.21" width="248.222" height="7.2" fill="#000"/>
<rect x="196.8" y="345.41" width="246.922" height="4.5" fill="url(#g37)"/>
<rect x="196.8" y="345.41" width="246.922" height="4.5" fill="url(#g38)"/>
<rect x="196.8" y="351.39" width="50.217" height="7.2" fill="#000"/>
<rect x="196.8" y="352.59" width="48.917" height="4.5" fill="url(#g39)"/>
<rect x="196.8" y="352.59" width="48.917" height="4.5" fill="url(#g40)"/>
<rect x="196.8" y="358.57" width="188.534" height="7.2" fill="#000"/>
<rect x="196.8" y="359.77" width="187.234" height="4.5" fill="url(#g41)"/>
<rect x="196.8" y="359.77" width="187.234" height="4.5" fill="url(#g42)"/>
<rect x="196.8" y="365.75" width="51.5385" height="7.2" fill="#000"/>
<rect x="196.8" y="366.95" width="50.2385" height="4.5" fill="url(#g43)"/>
<rect x="196.8" y="366.95" width="50.2385" height="4.5" fill="url(#g44)"/>
<rect x="196.8" y="398.15" width="127.304" height="7.2" fill="#000"/>
<rect x="196.8" y="399.35" width="126.004" height="4.5" fill="url(#g45)"/>
<rect x="196.8" y="399.35" width="126.004" height="4.5" fill="url(#g46)"/>
<rect x="196.8" y="405.33" width="89.2012" height="7.2" fill="#000"/>
<rect x="196.8" y="406.53" width="87.9012" height="4.5" fill="url(#g47)"/>
<rect x="196.8" y="406.53" width="87.9012" height="4.5" fill="url(#g48)"/>
<rect x="196.8" y="412.51" width="190.296" height="7.2" fill="#000"/>
<rect x="196.8" y="413.71" width="188.996" height="4.5" fill="url(#g49)"/>
<rect x="196.8" y="413.71" width="188.996" height="4.5" fill="url(#g50)"/>
<rect x="196.8" y="419.69" width="53.741" height="7.2" fill="#000"/>
<rect x="196.8" y="420.89" width="52.441" height="4.5" fill="url(#g51)"/>
<rect x="196.8" y="420.89" width="52.441" height="4.5" fill="url(#g52)"/>
<rect x="196.8" y="426.87" width="177.081" height="7.2" fill="#000"/>
<rect x="196.8" y="428.07" width="175.781" height="4.5" fill="url(#g53)"/>
<rect x="196.8" y="428.07" width="175.781" height="4.5" fill="url(#g54)"/>
<rect x="196.8" y="434.05" width="38.1032" height="7.2" fill="#000"/>
<rect x="196.8" y="435.25" width="36.8032" height="4.5" fill="url(#g55)"/>
<rect x="196.8" y="435.25" width="36.8032" height="4.5" fill="url(#g56)"/>
<rect x="196.8" y="466.45" width="136.995" height="7.2" fill="#000"/>
<rect x="196.8" y="467.65" width="135.695" height="4.5" fill="url(#g57)"/>
<rect x="196.8" y="467.65" width="135.695" height="4.5" fill="url(#g58)"/>
<rect x="196.8" y="473.63" width="70.9205" height="7.2" fill="#000"/>
<rect x="196.8" y="474.83" width="69.6205" height="4.5" fill="url(#g59)"/>
<rect x="196.8" y="474.83" width="69.6205" height="4.5" fill="url(#g60)"/>
<rect x="196.8" y="480.81" width="141.18" height="7.2" fill="#000"/>
<rect x="196.8" y="482.01" width="139.88" height="4.5" fill="url(#g61)"/>
<rect x="196.8" y="482.01" width="139.88" height="4.5" fill="url(#g62)"/>
<rect x="196.8" y="487.99" width="59.6877" height="7.2" fill="#000"/>
<rect x="196.8" y="489.19" width="58.3877" height="4.5" fill="url(#g63)"/>
<rect x="196.8" y="489.19" width="58.3877" height="4.5" fill="url(#g64)"/>
<rect x="196.8" y="495.17" width="162.985" height="7.2" fill="#000"/>
<rect x="196.8" y="496.37" width="161.685" height="4.5" fill="url(#g65)"/>
<rect x="196.8" y="496.37" width="161.685" height="4.5" fill="url(#g66)"/>
<rect x="196.8" y="502.35" width="12.9947" height="7.2" fill="#000"/>
<rect x="196.8" y="503.55" width="11.6947" height="4.5" fill="url(#g67)"/>
<rect x="196.8" y="503.55" width="11.6947" height="4.5" fill="url(#g68)"/>
<rect x="196.8" y="534.75" width="146.907" height="7.2" fill="#000"/>
<rect x="196.8" y="535.95" width="145.607" height="4.5" fill="url(#g69)"/>
<rect x="196.8" y="535.95" width="145.607" height="4.5" fill="url(#g70)"/>
<rect x="196.8" y="541.93" width="34.1388" height="7.2" fill="#000"/>
<rect x="196.8" y="543.13" width="32.8388" height="4.5" fill="url(#g71)"/>
<rect x="196.8" y="543.13" width="32.8388" height="4.5" fill="url(#g72)"/>
<rect x="196.8" y="549.11" width="181.926" height="7.2" fill="#000"/>
<rect x="196.8" y="550.31" width="180.626" height="4.5" fill="url(#g73)"/>
<rect x="196.8" y="550.31" width="180.626" height="4.5" fill="url(#g74)"/>
<rect x="196.8" y="556.29" width="81.933" height="7.2" fill="#000"/>
<rect x="196.8" y="557.49" width="80.633" height="4.5" fill="url(#g75)"/>
<rect x="196.8" y="557.49" width="80.633" height="4.5" fill="url(#g76)"/>
<rect x="196.8" y="563.47" width="172.896" height="7.2" fill="#000"/>
<rect x="196.8" y="564.67" width="171.596" height="4.5" fill="url(#g77)"/>
<rect x="196.8" y="564.67" width="171.596" height="4.5" fill="url(#g78)"/>
<rect x="196.8" y="570.65" width="36.7817" height="7.2" fill="#000"/>
<rect x="196.8" y="571.85" width="35.4817" height="4.5" fill="url(#g79)"/>
<rect x="196.8" y="571.85" width="35.4817" height="4.5" fill="url(#g80)"/>
<rect x="196.8" y="645.65" width="146.026" height="7.2" fill="#000"/>
<rect x="196.8" y="646.85" width="144.726" height="4.5" fill="url(#g81)"/>
<rect x="196.8" y="646.85" width="144.726" height="4.5" fill="url(#g82)"/>
<path d="M196 255.1H526.6V665H196Z" fill="none" stroke="#b0b0b0" stroke-width="1.6"/>
<line x1="189" y1="255.1" x2="196" y2="255.1" stroke="#b0b0b0" stroke-width="1.4"/>
<line x1="189" y1="323.43" x2="196" y2="323.43" stroke="#b0b0b0" stroke-width="1.4"/>
<line x1="189" y1="391.76" x2="196" y2="391.76" stroke="#b0b0b0" stroke-width="1.4"/>
<line x1="189" y1="460.09" x2="196" y2="460.09" stroke="#b0b0b0" stroke-width="1.4"/>
<line x1="189" y1="528.42" x2="196" y2="528.42" stroke="#b0b0b0" stroke-width="1.4"/>
<line x1="189" y1="596.75" x2="196" y2="596.75" stroke="#b0b0b0" stroke-width="1.4"/>
<line x1="189" y1="665.08" x2="196" y2="665.08" stroke="#b0b0b0" stroke-width="1.4"/>
<line x1="196" y1="665" x2="196" y2="671" stroke="#b0b0b0" stroke-width="1.4"/>
<text x="191.1" y="687.2" font-size="15.6" fill="#dedede" textLength="8.3" lengthAdjust="spacingAndGlyphs">0</text>
<line x1="239.55" y1="665" x2="239.55" y2="671" stroke="#b0b0b0" stroke-width="1.4"/>
<text x="235.2" y="687.2" font-size="15.6" fill="#dedede" textLength="8.3" lengthAdjust="spacingAndGlyphs">2</text>
<line x1="283.6" y1="665" x2="283.6" y2="671" stroke="#b0b0b0" stroke-width="1.4"/>
<text x="279.3" y="687.2" font-size="15.6" fill="#dedede" textLength="8.3" lengthAdjust="spacingAndGlyphs">4</text>
<line x1="327.65" y1="665" x2="327.65" y2="671" stroke="#b0b0b0" stroke-width="1.4"/>
<text x="323.4" y="687.2" font-size="15.6" fill="#dedede" textLength="8.3" lengthAdjust="spacingAndGlyphs">6</text>
<line x1="371.7" y1="665" x2="371.7" y2="671" stroke="#b0b0b0" stroke-width="1.4"/>
<text x="367.5" y="687.2" font-size="15.6" fill="#dedede" textLength="8.3" lengthAdjust="spacingAndGlyphs">8</text>
<line x1="415.75" y1="665" x2="415.75" y2="671" stroke="#b0b0b0" stroke-width="1.4"/>
<text x="407.5" y="687.2" font-size="15.6" fill="#dedede" textLength="16.7" lengthAdjust="spacingAndGlyphs">10</text>
<line x1="459.8" y1="665" x2="459.8" y2="671" stroke="#b0b0b0" stroke-width="1.4"/>
<text x="451.6" y="687.2" font-size="15.6" fill="#dedede" textLength="16.7" lengthAdjust="spacingAndGlyphs">12</text>
<line x1="503.85" y1="665" x2="503.85" y2="671" stroke="#b0b0b0" stroke-width="1.4"/>
<text x="495.7" y="687.2" font-size="15.6" fill="#dedede" textLength="16.7" lengthAdjust="spacingAndGlyphs">14</text>
<text x="157.9" y="295.0" font-size="15.6" fill="#dedede" textLength="37.1" lengthAdjust="spacingAndGlyphs">100%</text>
<text x="166.0" y="363.6" font-size="15.6" fill="#dedede" textLength="29.0" lengthAdjust="spacingAndGlyphs">80%</text>
<text x="166.0" y="432.2" font-size="15.6" fill="#dedede" textLength="29.0" lengthAdjust="spacingAndGlyphs">60%</text>
<text x="166.0" y="500.8" font-size="15.6" fill="#dedede" textLength="29.0" lengthAdjust="spacingAndGlyphs">40%</text>
<text x="166.0" y="569.4" font-size="15.6" fill="#dedede" textLength="29.0" lengthAdjust="spacingAndGlyphs">20%</text>
<text x="170.8" y="638.0" font-size="15.6" fill="#dedede" textLength="24.2" lengthAdjust="spacingAndGlyphs">100</text>
<rect x="582.6" y="197.8" width="153.8" height="299.1" fill="#252525"/>
<line x1="582.6" y1="247.7" x2="736.4" y2="247.7" stroke="#8e8e8e" stroke-width="1.5"/>
<line x1="582.6" y1="297.9" x2="736.4" y2="297.9" stroke="#8e8e8e" stroke-width="1.5"/>
<line x1="582.6" y1="348.1" x2="736.4" y2="348.1" stroke="#8e8e8e" stroke-width="1.5"/>
<line x1="582.6" y1="397.9" x2="736.4" y2="397.9" stroke="#8e8e8e" stroke-width="1.5"/>
<line x1="582.6" y1="447.9" x2="736.4" y2="447.9" stroke="#8e8e8e" stroke-width="1.5"/>
<path d="M582.6 197.8H736.4V496.9H582.6Z" fill="none" stroke="#969696" stroke-width="1.9"/>
<line x1="577" y1="197.8" x2="582.6" y2="197.8" stroke="#c8c8c8" stroke-width="1.3"/>
<text x="559.2" y="203.7" font-size="16.8" fill="#dedede" textLength="16.8" lengthAdjust="spacingAndGlyphs">15</text>
<line x1="577" y1="247.7" x2="582.6" y2="247.7" stroke="#c8c8c8" stroke-width="1.3"/>
<text x="559.2" y="253.6" font-size="16.8" fill="#dedede" textLength="16.8" lengthAdjust="spacingAndGlyphs">10</text>
<line x1="577" y1="297.9" x2="582.6" y2="297.9" stroke="#c8c8c8" stroke-width="1.3"/>
<text x="567.6" y="303.8" font-size="16.8" fill="#dedede" textLength="8.4" lengthAdjust="spacingAndGlyphs">5</text>
<line x1="577" y1="348.1" x2="582.6" y2="348.1" stroke="#c8c8c8" stroke-width="1.3"/>
<text x="567.6" y="354.0" font-size="16.8" fill="#dedede" textLength="8.4" lengthAdjust="spacingAndGlyphs">0</text>
<line x1="577" y1="397.9" x2="582.6" y2="397.9" stroke="#c8c8c8" stroke-width="1.3"/>
<text x="562.6" y="403.8" font-size="16.8" fill="#dedede" textLength="13.4" lengthAdjust="spacingAndGlyphs">-5</text>
<line x1="577" y1="447.9" x2="582.6" y2="447.9" stroke="#c8c8c8" stroke-width="1.3"/>
<text x="554.1" y="453.8" font-size="16.8" fill="#dedede" textLength="21.9" lengthAdjust="spacingAndGlyphs">-10</text>
<line x1="577" y1="496.9" x2="582.6" y2="496.9" stroke="#c8c8c8" stroke-width="1.3"/>
<text x="554.1" y="502.8" font-size="16.8" fill="#dedede" textLength="21.9" lengthAdjust="spacingAndGlyphs">-15</text>
<line x1="582.6" y1="496.9" x2="582.6" y2="503.2" stroke="#c8c8c8" stroke-width="1.4"/>
<line x1="736.4" y1="496.9" x2="736.4" y2="503.2" stroke="#c8c8c8" stroke-width="1.4"/>
<text x="624.4" y="191.7" font-size="16.1" fill="#dedede" textLength="42.0" lengthAdjust="spacingAndGlyphs">DeltaL</text>
<text x="640.6" y="514.4" font-size="16.8" fill="#dedede" textLength="37.8" lengthAdjust="spacingAndGlyphs">100%</text>
<rect x="598" y="348.3" width="122" height="18" fill="url(#g83)" stroke="#000" stroke-width="1.3"/>
<rect x="791.8" y="197.8" width="153.8" height="299.1" fill="#252525"/>
<line x1="791.8" y1="247.7" x2="945.6" y2="247.7" stroke="#8e8e8e" stroke-width="1.5"/>
<line x1="791.8" y1="297.9" x2="945.6" y2="297.9" stroke="#8e8e8e" stroke-width="1.5"/>
<line x1="791.8" y1="348.1" x2="945.6" y2="348.1" stroke="#8e8e8e" stroke-width="1.5"/>
<line x1="791.8" y1="397.9" x2="945.6" y2="397.9" stroke="#8e8e8e" stroke-width="1.5"/>
<line x1="791.8" y1="447.9" x2="945.6" y2="447.9" stroke="#8e8e8e" stroke-width="1.5"/>
<path d="M791.8 197.8H945.6V496.9H791.8Z" fill="none" stroke="#969696" stroke-width="1.9"/>
<line x1="786.2" y1="197.8" x2="791.8" y2="197.8" stroke="#c8c8c8" stroke-width="1.3"/>
<text x="768.4" y="203.7" font-size="16.8" fill="#dedede" textLength="16.8" lengthAdjust="spacingAndGlyphs">15</text>
<line x1="786.2" y1="247.7" x2="791.8" y2="247.7" stroke="#c8c8c8" stroke-width="1.3"/>
<text x="768.4" y="253.6" font-size="16.8" fill="#dedede" textLength="16.8" lengthAdjust="spacingAndGlyphs">10</text>
<line x1="786.2" y1="297.9" x2="791.8" y2="297.9" stroke="#c8c8c8" stroke-width="1.3"/>
<text x="776.8" y="303.8" font-size="16.8" fill="#dedede" textLength="8.4" lengthAdjust="spacingAndGlyphs">5</text>
<line x1="786.2" y1="348.1" x2="791.8" y2="348.1" stroke="#c8c8c8" stroke-width="1.3"/>
<text x="776.8" y="354.0" font-size="16.8" fill="#dedede" textLength="8.4" lengthAdjust="spacingAndGlyphs">0</text>
<line x1="786.2" y1="397.9" x2="791.8" y2="397.9" stroke="#c8c8c8" stroke-width="1.3"/>
<text x="771.8" y="403.8" font-size="16.8" fill="#dedede" textLength="13.4" lengthAdjust="spacingAndGlyphs">-5</text>
<line x1="786.2" y1="447.9" x2="791.8" y2="447.9" stroke="#c8c8c8" stroke-width="1.3"/>
<text x="763.3" y="453.8" font-size="16.8" fill="#dedede" textLength="21.9" lengthAdjust="spacingAndGlyphs">-10</text>
<line x1="786.2" y1="496.9" x2="791.8" y2="496.9" stroke="#c8c8c8" stroke-width="1.3"/>
<text x="763.3" y="502.8" font-size="16.8" fill="#dedede" textLength="21.9" lengthAdjust="spacingAndGlyphs">-15</text>
<line x1="791.8" y1="496.9" x2="791.8" y2="503.2" stroke="#c8c8c8" stroke-width="1.4"/>
<line x1="945.6" y1="496.9" x2="945.6" y2="503.2" stroke="#c8c8c8" stroke-width="1.4"/>
<text x="832.4" y="191.7" font-size="16.1" fill="#dedede" textLength="44.4" lengthAdjust="spacingAndGlyphs">DeltaC</text>
<text x="849.8" y="514.4" font-size="16.8" fill="#dedede" textLength="37.8" lengthAdjust="spacingAndGlyphs">100%</text>
<rect x="807.7" y="348.3" width="121.6" height="84" fill="url(#g84)" stroke="#000" stroke-width="1.3"/>
<rect x="1001" y="197.8" width="153.8" height="299.1" fill="#252525"/>
<line x1="1001" y1="247.7" x2="1154.8" y2="247.7" stroke="#8e8e8e" stroke-width="1.5"/>
<line x1="1001" y1="297.9" x2="1154.8" y2="297.9" stroke="#8e8e8e" stroke-width="1.5"/>
<line x1="1001" y1="348.1" x2="1154.8" y2="348.1" stroke="#8e8e8e" stroke-width="1.5"/>
<line x1="1001" y1="397.9" x2="1154.8" y2="397.9" stroke="#8e8e8e" stroke-width="1.5"/>
<line x1="1001" y1="447.9" x2="1154.8" y2="447.9" stroke="#8e8e8e" stroke-width="1.5"/>
<path d="M1001 197.8H1154.8V496.9H1001Z" fill="none" stroke="#969696" stroke-width="1.9"/>
<line x1="995.4" y1="197.8" x2="1001" y2="197.8" stroke="#c8c8c8" stroke-width="1.3"/>
<text x="977.6" y="203.7" font-size="16.8" fill="#dedede" textLength="16.8" lengthAdjust="spacingAndGlyphs">15</text>
<line x1="995.4" y1="247.7" x2="1001" y2="247.7" stroke="#c8c8c8" stroke-width="1.3"/>
<text x="977.6" y="253.6" font-size="16.8" fill="#dedede" textLength="16.8" lengthAdjust="spacingAndGlyphs">10</text>
<line x1="995.4" y1="297.9" x2="1001" y2="297.9" stroke="#c8c8c8" stroke-width="1.3"/>
<text x="986.0" y="303.8" font-size="16.8" fill="#dedede" textLength="8.4" lengthAdjust="spacingAndGlyphs">5</text>
<line x1="995.4" y1="348.1" x2="1001" y2="348.1" stroke="#c8c8c8" stroke-width="1.3"/>
<text x="986.0" y="354.0" font-size="16.8" fill="#dedede" textLength="8.4" lengthAdjust="spacingAndGlyphs">0</text>
<line x1="995.4" y1="397.9" x2="1001" y2="397.9" stroke="#c8c8c8" stroke-width="1.3"/>
<text x="981.0" y="403.8" font-size="16.8" fill="#dedede" textLength="13.4" lengthAdjust="spacingAndGlyphs">-5</text>
<line x1="995.4" y1="447.9" x2="1001" y2="447.9" stroke="#c8c8c8" stroke-width="1.3"/>
<text x="972.5" y="453.8" font-size="16.8" fill="#dedede" textLength="21.9" lengthAdjust="spacingAndGlyphs">-10</text>
<line x1="995.4" y1="496.9" x2="1001" y2="496.9" stroke="#c8c8c8" stroke-width="1.3"/>
<text x="972.5" y="502.8" font-size="16.8" fill="#dedede" textLength="21.9" lengthAdjust="spacingAndGlyphs">-15</text>
<line x1="1001" y1="496.9" x2="1001" y2="503.2" stroke="#c8c8c8" stroke-width="1.4"/>
<line x1="1154.8" y1="496.9" x2="1154.8" y2="503.2" stroke="#c8c8c8" stroke-width="1.4"/>
<text x="1041.6" y="191.7" font-size="16.1" fill="#dedede" textLength="44.4" lengthAdjust="spacingAndGlyphs">DeltaH</text>
<text x="1059.0" y="514.4" font-size="16.8" fill="#dedede" textLength="37.8" lengthAdjust="spacingAndGlyphs">100%</text>
<rect x="1017.3" y="348.3" width="121.2" height="27.5" fill="url(#g85)" stroke="#000" stroke-width="1.3"/>
<rect x="547.8" y="524.4" width="627.9" height="173.3" fill="#000"/>
<rect x="569.8" y="532.2" width="105.6" height="140.4" fill="#fbfbf4"/>
<rect x="571.2" y="533.6" width="102.8" height="69.2" fill="#bdbfa0"/>
<rect x="571.2" y="602.3" width="102.8" height="68.9" fill="#bfc1a2"/>
<rect x="692.3" y="532.2" width="105.6" height="140.4" fill="#fbfbf4"/>
<rect x="693.7" y="533.6" width="102.8" height="69.2" fill="#c0be89"/>
<rect x="693.7" y="602.3" width="102.8" height="68.9" fill="#c2c087"/>
<rect x="814.9" y="532.2" width="105.6" height="140.4" fill="#fbfbf4"/>
<rect x="816.3" y="533.6" width="102.8" height="69.2" fill="#c1bb72"/>
<rect x="816.3" y="602.3" width="102.8" height="68.9" fill="#c2bf6a"/>
<rect x="937.4" y="532.2" width="105.6" height="140.4" fill="#fbfbf4"/>
<rect x="938.8" y="533.6" width="102.8" height="69.2" fill="#c1b855"/>
<rect x="938.8" y="602.3" width="102.8" height="68.9" fill="#c1be4b"/>
<rect x="1060.3" y="532.2" width="105.6" height="140.4" fill="#fbfbf4"/>
<rect x="1061.7" y="533.6" width="102.8" height="69.2" fill="#c3b62c"/>
<rect x="1061.7" y="602.3" width="102.8" height="68.9" fill="#c4c200"/>
<text x="610.1" y="689.3" font-size="13.6" fill="#fff" textLength="24.5" lengthAdjust="spacingAndGlyphs" font-weight="bold">20%</text>
<text x="732.6" y="689.3" font-size="13.6" fill="#fff" textLength="24.5" lengthAdjust="spacingAndGlyphs" font-weight="bold">40%</text>
<text x="855.5" y="689.3" font-size="13.6" fill="#fff" textLength="24.5" lengthAdjust="spacingAndGlyphs" font-weight="bold">60%</text>
<text x="978.0" y="689.3" font-size="13.6" fill="#fff" textLength="24.5" lengthAdjust="spacingAndGlyphs" font-weight="bold">80%</text>
<text x="1097.4" y="689.3" font-size="13.6" fill="#fff" textLength="31.3" lengthAdjust="spacingAndGlyphs" font-weight="bold">100%</text>
<g transform="translate(561.6,563.3) rotate(-90)">
<text x="-18.6" y="0.0" font-size="13.6" fill="#fff" textLength="37.2" lengthAdjust="spacingAndGlyphs" stroke="#fff" stroke-width="0.3">Actual</text>
</g>
<g transform="translate(561.6,642.2) rotate(-90)">
<text x="-17.9" y="0.0" font-size="13.6" fill="#fff" textLength="35.9" lengthAdjust="spacingAndGlyphs" stroke="#fff" stroke-width="0.3">Target</text>
</g>
<text x="204.0" y="746.4" font-size="32.0" fill="#f2f2f2" textLength="247.5" lengthAdjust="spacingAndGlyphs" stroke="#f2f2f2" stroke-width="0.50">Avg dE2000: 5.48</text>
<text x="190.6" y="788.7" font-size="32.0" fill="#f2f2f2" textLength="273.9" lengthAdjust="spacingAndGlyphs" stroke="#f2f2f2" stroke-width="0.50">Max dE2000: 16.05</text>
<text x="165.5" y="840.3" font-size="31.5" fill="#f2f2f2" textLength="232.0" lengthAdjust="spacingAndGlyphs" stroke="#f2f2f2" stroke-width="0.50">Current Reading</text>
<text x="165.5" y="877.0" font-size="24.7" fill="#f2f2f2" textLength="108.3" lengthAdjust="spacingAndGlyphs" stroke="#f2f2f2" stroke-width="0.35">x: 0.4182</text>
<text x="331.5" y="877.0" font-size="24.7" fill="#f2f2f2" textLength="94.2" lengthAdjust="spacingAndGlyphs" stroke="#f2f2f2" stroke-width="0.35">y: 0.486</text>
<text x="165.5" y="920.0" font-size="24.7" fill="#f2f2f2" textLength="102.4" lengthAdjust="spacingAndGlyphs" stroke="#f2f2f2" stroke-width="0.35">fL: 44.27</text>
<text x="165.5" y="956.8" font-size="24.7" fill="#f2f2f2" textLength="168.4" lengthAdjust="spacingAndGlyphs" stroke="#f2f2f2" stroke-width="0.35">cd/m²: 151.67</text>
<rect x="525" y="753.4" width="268.9" height="191.3" fill="#252525"/>
<line x1="525" y1="770.6" x2="793.9" y2="770.6" stroke="#8e8e8e" stroke-width="1.3"/>
<line x1="525" y1="849.8" x2="793.9" y2="849.8" stroke="#8e8e8e" stroke-width="1.3"/>
<line x1="525" y1="928.9" x2="793.9" y2="928.9" stroke="#8e8e8e" stroke-width="1.3"/>
<path d="M525 753.4H793.9V944.7H525Z" fill="none" stroke="#969696" stroke-width="1.9"/>
<line x1="519.4" y1="770.6" x2="525" y2="770.6" stroke="#c8c8c8" stroke-width="1.3"/>
<text x="501.8" y="776.3" font-size="16.8" fill="#dedede" textLength="16.8" lengthAdjust="spacingAndGlyphs">50</text>
<line x1="519.4" y1="849.8" x2="525" y2="849.8" stroke="#c8c8c8" stroke-width="1.3"/>
<text x="510.2" y="855.5" font-size="16.8" fill="#dedede" textLength="8.4" lengthAdjust="spacingAndGlyphs">0</text>
<line x1="519.4" y1="928.9" x2="525" y2="928.9" stroke="#c8c8c8" stroke-width="1.3"/>
<text x="496.7" y="934.6" font-size="16.8" fill="#dedede" textLength="21.9" lengthAdjust="spacingAndGlyphs">-50</text>
<line x1="525" y1="944.7" x2="525" y2="951" stroke="#c8c8c8" stroke-width="1.4"/>
<line x1="793.9" y1="944.7" x2="793.9" y2="951" stroke="#c8c8c8" stroke-width="1.4"/>
<text x="601.4" y="748.1" font-size="16.1" fill="#dedede" textLength="87.6" lengthAdjust="spacingAndGlyphs">RGB Balance</text>
<text x="640.6" y="962.6" font-size="16.8" fill="#dedede" textLength="37.8" lengthAdjust="spacingAndGlyphs">100%</text>
<rect x="552.2" y="848.3" width="71.5" height="1.6" fill="#000" stroke="#000" stroke-width="1"/>
<rect x="624.6" y="850" width="70.8" height="12.4" fill="url(#g86)" stroke="#000" stroke-width="1.3"/>
<rect x="696.8" y="766.2" width="71" height="83.6" fill="url(#g87)" stroke="#000" stroke-width="1.3"/>
<rect x="815.2" y="720.3" width="1096.7" height="251.2" fill="none" stroke="#1c1c1c" stroke-width="2"/>
<rect x="815.2" y="720.3" width="1096.7" height="251.2" fill="none" stroke="#fff" stroke-width="1.8" stroke-dasharray="2 2.35"/>
<rect x="816.7" y="721.2" width="21.2" height="249.2" fill="#2e2e2e"/>
<rect x="816.7" y="721.2" width="21.2" height="29.6" fill="#000"/>
<rect x="837.8" y="721.2" width="743.9" height="29.6" fill="url(#g88)"/>
<text x="1014.2" y="742.3" font-size="16.7" fill="#f4f4f4" textLength="42.7" lengthAdjust="spacingAndGlyphs">20%</text>
<text x="1129.2" y="742.3" font-size="16.7" fill="#f4f4f4" textLength="42.7" lengthAdjust="spacingAndGlyphs">40%</text>
<text x="1243.8" y="742.3" font-size="16.7" fill="#f4f4f4" textLength="42.7" lengthAdjust="spacingAndGlyphs">60%</text>
<text x="1358.8" y="742.3" font-size="16.7" fill="#f4f4f4" textLength="42.7" lengthAdjust="spacingAndGlyphs">80%</text>
<text x="1473.8" y="742.3" font-size="16.7" fill="#f4f4f4" textLength="55.6" lengthAdjust="spacingAndGlyphs">100%</text>
<rect x="837.8" y="750.7" width="743.9" height="27.45" fill="#434343"/>
<text x="844.6" y="771.1" font-size="16.7" fill="#f4f4f4" textLength="84.2" lengthAdjust="spacingAndGlyphs">x: CIE31</text>
<text x="1014.2" y="771.1" font-size="16.7" fill="#f4f4f4" textLength="71.3" lengthAdjust="spacingAndGlyphs">0.3345</text>
<text x="1129.2" y="771.1" font-size="16.7" fill="#f4f4f4" textLength="71.3" lengthAdjust="spacingAndGlyphs">0.3557</text>
<text x="1243.8" y="771.1" font-size="16.7" fill="#f4f4f4" textLength="71.3" lengthAdjust="spacingAndGlyphs">0.3750</text>
<text x="1358.8" y="771.1" font-size="16.7" fill="#f4f4f4" textLength="71.3" lengthAdjust="spacingAndGlyphs">0.3953</text>
<text x="1473.8" y="771.1" font-size="16.7" fill="#f4f4f4" textLength="71.3" lengthAdjust="spacingAndGlyphs">0.4182</text>
<rect x="837.8" y="778.15" width="743.9" height="27.45" fill="#838383"/>
<text x="844.6" y="798.6" font-size="16.7" fill="#ececec" textLength="84.2" lengthAdjust="spacingAndGlyphs">y: CIE31</text>
<text x="1014.2" y="798.6" font-size="16.7" fill="#ececec" textLength="71.3" lengthAdjust="spacingAndGlyphs">0.3697</text>
<text x="1129.2" y="798.6" font-size="16.7" fill="#ececec" textLength="71.3" lengthAdjust="spacingAndGlyphs">0.3992</text>
<text x="1243.8" y="798.6" font-size="16.7" fill="#ececec" textLength="71.3" lengthAdjust="spacingAndGlyphs">0.4260</text>
<text x="1358.8" y="798.6" font-size="16.7" fill="#ececec" textLength="71.3" lengthAdjust="spacingAndGlyphs">0.4542</text>
<text x="1473.8" y="798.6" font-size="16.7" fill="#ececec" textLength="71.3" lengthAdjust="spacingAndGlyphs">0.4860</text>
<rect x="837.8" y="805.6" width="743.9" height="27.45" fill="#434343"/>
<text x="844.6" y="826.0" font-size="16.7" fill="#f4f4f4" textLength="15.1" lengthAdjust="spacingAndGlyphs">Y</text>
<text x="1014.2" y="826.0" font-size="16.7" fill="#f4f4f4" textLength="97.2" lengthAdjust="spacingAndGlyphs">169.8639</text>
<text x="1129.2" y="826.0" font-size="16.7" fill="#f4f4f4" textLength="97.2" lengthAdjust="spacingAndGlyphs">164.2215</text>
<text x="1243.8" y="826.0" font-size="16.7" fill="#f4f4f4" textLength="97.2" lengthAdjust="spacingAndGlyphs">160.0002</text>
<text x="1358.8" y="826.0" font-size="16.7" fill="#f4f4f4" textLength="97.2" lengthAdjust="spacingAndGlyphs">156.1880</text>
<text x="1473.8" y="826.0" font-size="16.7" fill="#f4f4f4" textLength="97.2" lengthAdjust="spacingAndGlyphs">151.6688</text>
<rect x="837.8" y="833.05" width="743.9" height="27.45" fill="#838383"/>
<text x="844.6" y="853.5" font-size="16.7" fill="#ececec" textLength="152.0" lengthAdjust="spacingAndGlyphs">Target x:CIE31</text>
<text x="1014.2" y="853.5" font-size="16.7" fill="#ececec" textLength="71.3" lengthAdjust="spacingAndGlyphs">0.3344</text>
<text x="1129.2" y="853.5" font-size="16.7" fill="#ececec" textLength="71.3" lengthAdjust="spacingAndGlyphs">0.3564</text>
<text x="1243.8" y="853.5" font-size="16.7" fill="#ececec" textLength="71.3" lengthAdjust="spacingAndGlyphs">0.3773</text>
<text x="1358.8" y="853.5" font-size="16.7" fill="#ececec" textLength="71.3" lengthAdjust="spacingAndGlyphs">0.3969</text>
<text x="1473.8" y="853.5" font-size="16.7" fill="#ececec" textLength="71.3" lengthAdjust="spacingAndGlyphs">0.4193</text>
<rect x="837.8" y="860.5" width="743.9" height="27.45" fill="#434343"/>
<text x="844.6" y="880.9" font-size="16.7" fill="#f4f4f4" textLength="152.0" lengthAdjust="spacingAndGlyphs">Target y:CIE31</text>
<text x="1014.2" y="880.9" font-size="16.7" fill="#f4f4f4" textLength="71.3" lengthAdjust="spacingAndGlyphs">0.3648</text>
<text x="1129.2" y="880.9" font-size="16.7" fill="#f4f4f4" textLength="71.3" lengthAdjust="spacingAndGlyphs">0.4013</text>
<text x="1243.8" y="880.9" font-size="16.7" fill="#f4f4f4" textLength="71.3" lengthAdjust="spacingAndGlyphs">0.4358</text>
<text x="1358.8" y="880.9" font-size="16.7" fill="#f4f4f4" textLength="71.3" lengthAdjust="spacingAndGlyphs">0.4682</text>
<text x="1473.8" y="880.9" font-size="16.7" fill="#f4f4f4" textLength="71.3" lengthAdjust="spacingAndGlyphs">0.5053</text>
<rect x="837.8" y="887.95" width="743.9" height="27.45" fill="#838383"/>
<text x="844.6" y="908.4" font-size="16.7" fill="#ececec" textLength="87.5" lengthAdjust="spacingAndGlyphs">Target Y</text>
<text x="1014.2" y="908.4" font-size="16.7" fill="#ececec" textLength="97.2" lengthAdjust="spacingAndGlyphs">170.3922</text>
<text x="1129.2" y="908.4" font-size="16.7" fill="#ececec" textLength="97.2" lengthAdjust="spacingAndGlyphs">167.4013</text>
<text x="1243.8" y="908.4" font-size="16.7" fill="#ececec" textLength="97.2" lengthAdjust="spacingAndGlyphs">165.1033</text>
<text x="1358.8" y="908.4" font-size="16.7" fill="#ececec" textLength="97.2" lengthAdjust="spacingAndGlyphs">163.2997</text>
<text x="1473.8" y="908.4" font-size="16.7" fill="#ececec" textLength="97.2" lengthAdjust="spacingAndGlyphs">161.5561</text>
<rect x="837.8" y="915.4" width="743.9" height="27.45" fill="#434343"/>
<text x="844.6" y="935.8" font-size="16.7" fill="#f4f4f4" textLength="88.8" lengthAdjust="spacingAndGlyphs">ΔE 2000</text>
<text x="1014.2" y="935.8" font-size="16.7" fill="#f4f4f4" textLength="71.3" lengthAdjust="spacingAndGlyphs">1.7490</text>
<text x="1129.2" y="935.8" font-size="16.7" fill="#f4f4f4" textLength="71.3" lengthAdjust="spacingAndGlyphs">0.6265</text>
<text x="1243.8" y="935.8" font-size="16.7" fill="#f4f4f4" textLength="71.3" lengthAdjust="spacingAndGlyphs">1.7904</text>
<text x="1358.8" y="935.8" font-size="16.7" fill="#f4f4f4" textLength="71.3" lengthAdjust="spacingAndGlyphs">2.4087</text>
<text x="1473.8" y="935.8" font-size="16.7" fill="#f4f4f4" textLength="71.3" lengthAdjust="spacingAndGlyphs">3.1386</text>
<rect x="837.8" y="942.85" width="743.9" height="26.4" fill="#838383"/>
<text x="844.6" y="963.2" font-size="16.7" fill="#ececec" textLength="60.4" lengthAdjust="spacingAndGlyphs">dEITP</text>
<text x="1014.2" y="963.2" font-size="16.7" fill="#ececec" textLength="71.3" lengthAdjust="spacingAndGlyphs">2.1914</text>
<text x="1129.2" y="963.2" font-size="16.7" fill="#ececec" textLength="71.3" lengthAdjust="spacingAndGlyphs">1.6876</text>
<text x="1243.8" y="963.2" font-size="16.7" fill="#ececec" textLength="71.3" lengthAdjust="spacingAndGlyphs">5.0734</text>
<text x="1358.8" y="963.2" font-size="16.7" fill="#ececec" textLength="71.3" lengthAdjust="spacingAndGlyphs">7.7918</text>
<text x="1473.8" y="963.2" font-size="16.7" fill="#ececec" textLength="84.2" lengthAdjust="spacingAndGlyphs">12.4004</text>
<rect x="1183" y="120" width="737" height="592" fill="#1b1b1b"/>
<rect x="1190" y="127.3" width="722" height="577.7" fill="#333"/>
<rect x="1229.75" y="152.5" width="678.5" height="522" fill="#252525"/>
<text x="1506.7" y="147.3" font-size="16.7" fill="#dedede" textLength="89.0" lengthAdjust="spacingAndGlyphs">CIE 1976 u'v'</text>
<line x1="1229.75" y1="674.4" x2="1229.75" y2="681.3" stroke="#c8c8c8" stroke-width="1.8"/>
<text x="1225.2" y="697.9" font-size="16.8" fill="#dedede" textLength="8.5" lengthAdjust="spacingAndGlyphs">0</text>
<line x1="1286.25" y1="674.4" x2="1286.25" y2="681.3" stroke="#c8c8c8" stroke-width="1.8"/>
<text x="1271.0" y="697.9" font-size="16.8" fill="#dedede" textLength="29.9" lengthAdjust="spacingAndGlyphs">0.05</text>
<line x1="1342.75" y1="674.4" x2="1342.75" y2="681.3" stroke="#c8c8c8" stroke-width="1.8"/>
<text x="1331.8" y="697.9" font-size="16.8" fill="#dedede" textLength="21.4" lengthAdjust="spacingAndGlyphs">0.1</text>
<line x1="1399.25" y1="674.4" x2="1399.25" y2="681.3" stroke="#c8c8c8" stroke-width="1.8"/>
<text x="1384.0" y="697.9" font-size="16.8" fill="#dedede" textLength="29.9" lengthAdjust="spacingAndGlyphs">0.15</text>
<line x1="1455.75" y1="674.4" x2="1455.75" y2="681.3" stroke="#c8c8c8" stroke-width="1.8"/>
<text x="1444.8" y="697.9" font-size="16.8" fill="#dedede" textLength="21.4" lengthAdjust="spacingAndGlyphs">0.2</text>
<line x1="1512.25" y1="674.4" x2="1512.25" y2="681.3" stroke="#c8c8c8" stroke-width="1.8"/>
<text x="1497.0" y="697.9" font-size="16.8" fill="#dedede" textLength="29.9" lengthAdjust="spacingAndGlyphs">0.25</text>
<line x1="1568.75" y1="674.4" x2="1568.75" y2="681.3" stroke="#c8c8c8" stroke-width="1.8"/>
<text x="1557.8" y="697.9" font-size="16.8" fill="#dedede" textLength="21.4" lengthAdjust="spacingAndGlyphs">0.3</text>
<line x1="1625.25" y1="674.4" x2="1625.25" y2="681.3" stroke="#c8c8c8" stroke-width="1.8"/>
<text x="1610.0" y="697.9" font-size="16.8" fill="#dedede" textLength="29.9" lengthAdjust="spacingAndGlyphs">0.35</text>
<line x1="1681.75" y1="674.4" x2="1681.75" y2="681.3" stroke="#c8c8c8" stroke-width="1.8"/>
<text x="1670.8" y="697.9" font-size="16.8" fill="#dedede" textLength="21.4" lengthAdjust="spacingAndGlyphs">0.4</text>
<line x1="1738.25" y1="674.4" x2="1738.25" y2="681.3" stroke="#c8c8c8" stroke-width="1.8"/>
<text x="1723.0" y="697.9" font-size="16.8" fill="#dedede" textLength="29.9" lengthAdjust="spacingAndGlyphs">0.45</text>
<line x1="1794.75" y1="674.4" x2="1794.75" y2="681.3" stroke="#c8c8c8" stroke-width="1.8"/>
<text x="1783.8" y="697.9" font-size="16.8" fill="#dedede" textLength="21.4" lengthAdjust="spacingAndGlyphs">0.5</text>
<line x1="1851.25" y1="674.4" x2="1851.25" y2="681.3" stroke="#c8c8c8" stroke-width="1.8"/>
<text x="1836.0" y="697.9" font-size="16.8" fill="#dedede" textLength="29.9" lengthAdjust="spacingAndGlyphs">0.55</text>
<line x1="1223" y1="674.6" x2="1229.75" y2="674.6" stroke="#c8c8c8" stroke-width="1.5"/>
<text x="1214.1" y="682.8" font-size="16.8" fill="#dedede" textLength="8.5" lengthAdjust="spacingAndGlyphs">0</text>
<line x1="1223" y1="631.16" x2="1229.75" y2="631.16" stroke="#c8c8c8" stroke-width="1.5"/>
<text x="1192.7" y="637.1" font-size="16.8" fill="#dedede" textLength="29.9" lengthAdjust="spacingAndGlyphs">0.05</text>
<line x1="1223" y1="587.72" x2="1229.75" y2="587.72" stroke="#c8c8c8" stroke-width="1.5"/>
<text x="1201.2" y="593.6" font-size="16.8" fill="#dedede" textLength="21.4" lengthAdjust="spacingAndGlyphs">0.1</text>
<line x1="1223" y1="544.28" x2="1229.75" y2="544.28" stroke="#c8c8c8" stroke-width="1.5"/>
<text x="1192.7" y="550.2" font-size="16.8" fill="#dedede" textLength="29.9" lengthAdjust="spacingAndGlyphs">0.15</text>
<line x1="1223" y1="500.84" x2="1229.75" y2="500.84" stroke="#c8c8c8" stroke-width="1.5"/>
<text x="1201.2" y="506.7" font-size="16.8" fill="#dedede" textLength="21.4" lengthAdjust="spacingAndGlyphs">0.2</text>
<line x1="1223" y1="457.4" x2="1229.75" y2="457.4" stroke="#c8c8c8" stroke-width="1.5"/>
<text x="1192.7" y="463.3" font-size="16.8" fill="#dedede" textLength="29.9" lengthAdjust="spacingAndGlyphs">0.25</text>
<line x1="1223" y1="413.96" x2="1229.75" y2="413.96" stroke="#c8c8c8" stroke-width="1.5"/>
<text x="1201.2" y="419.9" font-size="16.8" fill="#dedede" textLength="21.4" lengthAdjust="spacingAndGlyphs">0.3</text>
<line x1="1223" y1="370.52" x2="1229.75" y2="370.52" stroke="#c8c8c8" stroke-width="1.5"/>
<text x="1192.7" y="376.4" font-size="16.8" fill="#dedede" textLength="29.9" lengthAdjust="spacingAndGlyphs">0.35</text>
<line x1="1223" y1="327.08" x2="1229.75" y2="327.08" stroke="#c8c8c8" stroke-width="1.5"/>
<text x="1201.2" y="333.0" font-size="16.8" fill="#dedede" textLength="21.4" lengthAdjust="spacingAndGlyphs">0.4</text>
<line x1="1223" y1="283.64" x2="1229.75" y2="283.64" stroke="#c8c8c8" stroke-width="1.5"/>
<text x="1192.7" y="289.5" font-size="16.8" fill="#dedede" textLength="29.9" lengthAdjust="spacingAndGlyphs">0.45</text>
<line x1="1223" y1="240.2" x2="1229.75" y2="240.2" stroke="#c8c8c8" stroke-width="1.5"/>
<text x="1201.2" y="246.1" font-size="16.8" fill="#dedede" textLength="21.4" lengthAdjust="spacingAndGlyphs">0.5</text>
<line x1="1223" y1="196.76" x2="1229.75" y2="196.76" stroke="#c8c8c8" stroke-width="1.5"/>
<text x="1192.7" y="202.7" font-size="16.8" fill="#dedede" textLength="29.9" lengthAdjust="spacingAndGlyphs">0.55</text>
<rect x="150" y="1011" width="1770" height="47" fill="url(#g89)"/>
<rect x="151" y="1011.6" width="33" height="48" fill="url(#g90)" rx="3" stroke="#444" stroke-width="0.8"/>
<circle cx="167.4" cy="1018" r="4.2" fill="#666"/>
<path d="M164 1019.8l3.4-3.6l3.4 3.6z" fill="#222"/>
<rect x="154.8" y="1031.6" width="26.2" height="21.6" fill="#ffff00" rx="1.5"/>
<rect x="189.2" y="1011.8" width="112.3" height="48" fill="url(#g91)" rx="3.5" stroke="#555" stroke-width="0.8"/>
<rect x="193.2" y="1015.6" width="104.6" height="27" fill="#c1c2a5" rx="2" stroke="#8a8a70" stroke-width="0.8"/>
<text x="237.5" y="1053.6" font-size="8.3" fill="#303030" textLength="15.8" lengthAdjust="spacingAndGlyphs">20%</text>
<rect x="303.23" y="1011.8" width="112.3" height="48" fill="url(#g92)" rx="3.5" stroke="#555" stroke-width="0.8"/>
<rect x="307.23" y="1015.6" width="104.6" height="27" fill="#c2c088" rx="2" stroke="#8a8a70" stroke-width="0.8"/>
<text x="351.5" y="1053.6" font-size="8.3" fill="#303030" textLength="15.8" lengthAdjust="spacingAndGlyphs">40%</text>
<rect x="417.26" y="1011.8" width="112.3" height="48" fill="url(#g93)" rx="3.5" stroke="#555" stroke-width="0.8"/>
<rect x="421.26" y="1015.6" width="104.6" height="27" fill="#c2bf6b" rx="2" stroke="#8a8a70" stroke-width="0.8"/>
<text x="465.6" y="1053.6" font-size="8.3" fill="#303030" textLength="15.8" lengthAdjust="spacingAndGlyphs">60%</text>
<rect x="531.29" y="1011.8" width="112.3" height="48" fill="url(#g94)" rx="3.5" stroke="#555" stroke-width="0.8"/>
<rect x="535.29" y="1015.6" width="104.6" height="27" fill="#c1be4c" rx="2" stroke="#8a8a70" stroke-width="0.8"/>
<text x="579.6" y="1053.6" font-size="8.3" fill="#303030" textLength="15.8" lengthAdjust="spacingAndGlyphs">80%</text>
<rect x="645.32" y="1011.8" width="112.3" height="48" fill="url(#g95)" rx="3.5" stroke="#222" stroke-width="0.8"/>
<rect x="649.32" y="1015.6" width="104.6" height="27" fill="#c4c200" rx="2" stroke="#555" stroke-width="0.8"/>
<text x="691.4" y="1053.6" font-size="8.3" fill="#fff" textLength="20.2" lengthAdjust="spacingAndGlyphs" font-weight="bold">100%</text>
<rect x="1678" y="1011" width="242" height="47" fill="url(#g97)"/>
<rect x="1715.3" y="1012.3" width="33.1" height="21.8" fill="url(#g98)" rx="2.5" stroke="#9a9a9a" stroke-width="0.6"/>
<circle cx="1732.25" cy="1025.5" r="6.3" fill="url(#g99)"/>
<rect x="1749.2" y="1012.3" width="32.9" height="21.8" fill="url(#g98)" rx="2.5" stroke="#9a9a9a" stroke-width="0.6"/>
<circle cx="1766.05" cy="1025.5" r="6.3" fill="url(#g100)"/>
<rect x="1782.9" y="1012.3" width="33" height="21.8" fill="url(#g98)" rx="2.5" stroke="#9a9a9a" stroke-width="0.6"/>
<circle cx="1799.8" cy="1025.5" r="6.3" fill="url(#g101)"/>
<rect x="1816.7" y="1012.3" width="32.9" height="21.8" fill="url(#g98)" rx="2.5" stroke="#9a9a9a" stroke-width="0.6"/>
<circle cx="1833.55" cy="1025.5" r="6.3" fill="url(#g102)"/>
<rect x="1850.4" y="1012.3" width="33" height="21.8" fill="url(#g98)" rx="2.5" stroke="#9a9a9a" stroke-width="0.6"/>
<circle cx="1867.3" cy="1025.5" r="6.3" fill="url(#g103)"/>
<circle cx="1901" cy="1025.5" r="6" fill="#3a3a3a"/>
<rect x="1678.4" y="1027" width="33.4" height="34" fill="url(#g104)" rx="4" stroke="#888" stroke-width="0.8"/>
<rect x="1684.3" y="1032.3" width="21.8" height="21.8" fill="#999" rx="3.5" stroke="#1c1c1c" stroke-width="1.5"/>
<rect x="1690" y="1037.8" width="10.6" height="10.6" fill="#000"/>
<rect x="1715.2" y="1035.2" width="100.8" height="26" fill="url(#g96)" rx="3" stroke="#d4d4d4" stroke-width="0.9"/>
<rect x="1817.4" y="1035.2" width="101.2" height="26" fill="url(#g96)" rx="3" stroke="#d4d4d4" stroke-width="0.9"/>
<circle cx="1737.6" cy="1046.3" r="7.4" fill="url(#g105)"/>
<circle cx="1897.5" cy="1046.3" r="7.4" fill="url(#g105)"/>
<path d="M1737 1042.2l-3 4l3 4M1741 1042.2l-3 4l3 4" fill="none" stroke="#2a2a2a" stroke-width="1.1"/>
<path d="M1894.6 1042.2l3 4l-3 4M1898.6 1042.2l3 4l-3 4" fill="none" stroke="#2a2a2a" stroke-width="1.1"/>
<text x="1758.0" y="1051.7" font-size="17.0" fill="#242424" textLength="37.0" lengthAdjust="spacingAndGlyphs">Back</text>
<text x="1837.9" y="1051.7" font-size="17.0" fill="#242424" textLength="38.3" lengthAdjust="spacingAndGlyphs">Next</text>
<path d="M1631.7 995.8L1669.2 1005L1670 1025.8L1697.5 1032.5L1656.7 1045.8L1634 1033.3Z" fill="none" stroke="#e0d0d0" stroke-width="5.2" stroke-linejoin="round" stroke-linecap="round" stroke-opacity="0.45"/>
<path d="M1670 1025.8L1640.6 1029.2L1697.5 1032.5" fill="none" stroke="#e0d0d0" stroke-width="5.2" stroke-linejoin="round" stroke-linecap="round" stroke-opacity="0.45"/>
<path d="M1631.7 995.8L1669.2 1005L1670 1025.8L1697.5 1032.5L1656.7 1045.8L1634 1033.3Z" fill="none" stroke="#8a272e" stroke-width="3.4" stroke-linejoin="round" stroke-linecap="round" stroke-opacity="0.88"/>
<path d="M1670 1025.8L1640.6 1029.2L1697.5 1032.5" fill="none" stroke="#8a272e" stroke-width="2.6" stroke-linejoin="round" stroke-linecap="round" stroke-opacity="0.88"/>
<path d="M1642.3 1009.4L1653.3 1023.4L1674 995.8" fill="none" stroke="#e4e4e4" stroke-width="5" stroke-linejoin="miter" stroke-linecap="round" stroke-opacity="0.75"/>
<path d="M1642.3 1009.4L1653.3 1023.4L1674 995.8" fill="none" stroke="#3a3a3a" stroke-width="3" stroke-linejoin="miter" stroke-linecap="round" stroke-opacity="0.95"/>
<text x="1677.5" y="1025.0" font-size="27.9" fill="#8e2b35" textLength="145.5" lengthAdjust="spacingAndGlyphs" font-weight="bold" stroke="#ecd8d8" stroke-width="2.2" stroke-opacity="0.55" fill-opacity="0.86" paint-order="stroke">NOTEBOOK</text>
<text x="1825.8" y="1025.0" font-size="27.9" fill="#2c2c2c" textLength="86.5" lengthAdjust="spacingAndGlyphs" stroke="#f4f4f4" stroke-width="3.2" stroke-opacity="0.7" fill-opacity="0.9" paint-order="stroke" font-weight="bold">CHECK</text>
</svg>
<div class="cie" style="left:1231px;top:154px;width:677px;height:520px;clip-path:polygon(295.7px 502.3px,294.5px 503.5px,293.1px 504.4px,291.7px 505.2px,290.3px 505.7px,288.7px 506.0px,287.1px 506.2px,285.4px 506.1px,283.7px 505.8px,283.1px 505.4px,282.5px 505.0px,281.9px 504.5px,281.2px 504.0px,280.6px 503.5px,279.9px 502.9px,279.1px 502.4px,278.3px 501.7px,277.4px 501.0px,276.5px 500.3px,275.5px 499.5px,274.5px 498.7px,273.5px 497.8px,272.4px 496.9px,271.2px 495.9px,270.0px 494.9px,268.8px 493.9px,267.6px 492.8px,266.3px 491.7px,264.9px 490.6px,263.5px 489.4px,262.1px 488.2px,260.6px 486.9px,259.0px 485.6px,257.3px 484.3px,255.6px 482.8px,253.7px 481.3px,251.8px 479.8px,249.8px 478.1px,247.7px 476.4px,245.6px 474.7px,243.4px 472.9px,241.1px 471.0px,238.8px 469.1px,236.4px 467.1px,234.0px 465.1px,231.4px 462.9px,228.8px 460.6px,226.0px 458.2px,223.1px 455.7px,220.2px 453.1px,217.1px 450.3px,214.0px 447.5px,210.9px 444.5px,207.7px 441.5px,204.4px 438.3px,200.9px 434.9px,197.4px 431.2px,193.6px 427.3px,189.7px 422.9px,185.5px 418.2px,181.1px 413.1px,176.5px 407.6px,171.6px 401.8px,166.7px 395.6px,161.6px 389.0px,156.3px 382.1px,150.9px 374.9px,145.4px 367.4px,139.8px 359.5px,134.1px 351.2px,128.4px 342.6px,122.5px 333.7px,116.5px 324.4px,110.5px 314.9px,104.5px 305.1px,98.4px 295.1px,92.3px 284.9px,86.3px 274.6px,80.3px 264.3px,74.4px 253.8px,68.6px 243.4px,63.0px 232.9px,57.7px 222.5px,52.5px 212.1px,47.7px 201.9px,43.0px 191.7px,38.6px 181.8px,34.5px 172.0px,30.6px 162.5px,26.9px 153.3px,23.5px 144.4px,20.3px 135.8px,17.3px 127.5px,14.6px 119.6px,12.2px 112.0px,10.0px 104.8px,8.1px 98.0px,6.4px 91.5px,4.9px 85.4px,3.7px 79.6px,2.7px 74.1px,1.8px 69.0px,1.2px 64.2px,0.7px 59.7px,0.4px 55.4px,0.3px 51.4px,0.4px 47.7px,0.6px 44.1px,1.0px 40.8px,1.5px 37.6px,2.2px 34.7px,3.0px 31.9px,4.0px 29.4px,5.1px 27.0px,6.4px 24.9px,7.8px 22.9px,9.3px 21.1px,10.9px 19.4px,12.6px 18.0px,14.5px 16.7px,16.4px 15.5px,18.4px 14.5px,20.5px 13.6px,22.6px 12.8px,24.9px 12.2px,27.2px 11.6px,29.5px 11.1px,31.9px 10.8px,34.4px 10.5px,36.9px 10.2px,39.4px 10.0px,42.0px 9.8px,44.7px 9.7px,47.3px 9.6px,50.0px 9.5px,52.6px 9.5px,55.3px 9.5px,58.0px 9.5px,60.7px 9.5px,63.3px 9.5px,66.0px 9.5px,68.7px 9.6px,71.4px 9.7px,74.2px 9.8px,76.9px 9.9px,79.7px 10.0px,82.5px 10.1px,85.4px 10.3px,88.3px 10.5px,91.2px 10.6px,94.2px 10.8px,97.2px 11.1px,100.2px 11.3px,103.3px 11.5px,106.4px 11.8px,109.6px 12.0px,112.8px 12.3px,116.0px 12.6px,119.3px 12.9px,122.7px 13.2px,126.1px 13.5px,129.6px 13.9px,133.1px 14.2px,136.7px 14.6px,140.3px 15.0px,144.0px 15.3px,147.7px 15.7px,151.6px 16.1px,155.5px 16.5px,159.4px 17.0px,163.5px 17.4px,167.6px 17.8px,171.8px 18.3px,176.0px 18.8px,180.3px 19.2px,184.7px 19.7px,189.1px 20.2px,193.7px 20.7px,198.3px 21.3px,203.0px 21.8px,207.8px 22.3px,212.6px 22.9px,217.6px 23.4px,222.6px 24.0px,227.7px 24.6px,232.9px 25.2px,238.1px 25.8px,243.5px 26.4px,248.9px 27.0px,254.4px 27.6px,260.0px 28.3px,265.6px 28.9px,271.4px 29.6px,277.2px 30.3px,283.1px 30.9px,289.1px 31.6px,295.2px 32.3px,301.3px 33.0px,307.6px 33.8px,313.9px 34.5px,320.2px 35.2px,326.7px 36.0px,333.2px 36.7px,339.7px 37.5px,346.4px 38.2px,353.0px 39.0px,359.8px 39.7px,366.5px 40.5px,373.4px 41.3px,380.2px 42.1px,387.1px 42.9px,394.1px 43.7px,401.0px 44.5px,407.8px 45.3px,414.7px 46.1px,421.4px 46.9px,428.1px 47.6px,434.8px 48.4px,441.4px 49.2px,448.1px 49.9px,454.7px 50.7px,461.3px 51.4px,467.9px 52.2px,474.4px 52.9px,480.9px 53.7px,487.3px 54.4px,493.6px 55.1px,499.8px 55.8px,505.9px 56.5px,511.8px 57.2px,517.6px 57.9px,523.3px 58.5px,528.9px 59.2px,534.4px 59.8px,539.8px 60.4px,545.0px 61.0px,550.2px 61.6px,555.2px 62.2px,560.1px 62.8px,564.8px 63.3px,569.5px 63.8px,573.9px 64.4px,578.3px 64.9px,582.5px 65.4px,586.6px 65.8px,590.6px 66.3px,594.5px 66.7px,598.2px 67.1px,601.9px 67.6px,605.4px 68.0px,608.9px 68.4px,612.2px 68.7px,615.4px 69.1px,618.6px 69.5px,621.7px 69.8px,624.7px 70.2px,627.6px 70.5px,630.5px 70.8px,633.3px 71.2px,636.0px 71.5px,638.7px 71.8px,641.3px 72.1px,643.8px 72.4px,646.3px 72.7px,648.7px 73.0px,651.0px 73.2px,653.3px 73.5px,655.5px 73.7px,657.6px 74.0px,659.6px 74.2px,661.6px 74.4px,663.5px 74.6px,665.3px 74.8px,667.0px 75.0px,668.7px 75.2px,670.3px 75.4px,671.8px 75.6px,673.3px 75.8px,674.7px 75.9px,676.0px 76.1px,677.3px 76.2px,678.5px 76.4px,679.7px 76.5px,680.9px 76.6px,682.0px 76.8px,683.0px 76.9px,684.0px 77.0px,685.0px 77.1px,685.9px 77.2px,686.8px 77.3px,687.6px 77.4px,688.3px 77.5px,689.0px 77.6px,689.7px 77.6px,690.3px 77.7px,690.8px 77.8px,691.3px 77.8px,691.8px 77.9px,692.3px 78.0px,692.8px 78.0px,693.3px 78.1px,693.7px 78.1px,694.2px 78.2px,694.6px 78.2px,695.0px 78.3px,695.4px 78.3px,695.8px 78.3px,696.1px 78.4px,696.4px 78.4px,696.8px 78.5px,697.1px 78.5px,697.5px 78.5px,697.8px 78.6px,698.2px 78.6px,698.5px 78.7px,698.9px 78.7px,699.2px 78.7px,699.6px 78.8px,699.9px 78.8px,700.2px 78.9px,700.5px 78.9px,700.8px 78.9px,701.1px 79.0px,701.3px 79.0px,701.5px 79.0px,701.7px 79.0px,701.9px 79.1px,702.1px 79.1px,702.3px 79.1px,702.4px 79.1px,702.5px 79.1px,702.6px 79.1px,702.7px 79.2px,702.8px 79.2px,702.9px 79.2px,702.9px 79.2px,703.0px 79.2px,703.0px 79.2px,703.1px 79.2px,703.1px 79.2px,703.2px 79.2px)"><div style="height:9px"></div><i style="background:linear-gradient(90deg,#0f0 41.5px,#0f0 80.5px)"></i><i style="background:linear-gradient(90deg,#0f0 30.5px,#0f0 95.5px)"></i><i style="background:linear-gradient(90deg,#0f0 26.5px,#0f0 107.5px)"></i><i style="background:linear-gradient(90deg,#0f0 21.5px,#0f0 120.5px)"></i><i style="background:linear-gradient(90deg,#0f0 19.5px,#0f0 130.5px)"></i><i style="background:linear-gradient(90deg,#0f0 17.5px,#01ff00 137.5px,#0aff00 141.5px)"></i><i style="background:linear-gradient(90deg,#0f0 15.5px,#0f0 137.5px,#1aff00 148.5px)"></i><i style="background:linear-gradient(90deg,#0f0 13.5px,#0f0 137.5px,#37ff00 160.5px)"></i><i style="background:linear-gradient(90deg,#0f0 11.5px,#02ff00 138.5px,#4aff00 168.5px)"></i><i style="background:linear-gradient(90deg,#0f0 10.5px,#02ff00 138.5px,#5eff00 176.5px)"></i><i style="background:linear-gradient(90deg,#0f0 9.5px,#01ff00 138.5px,#76ff00 185.5px)"></i><i style="background:linear-gradient(90deg,#00ff02 9.5px,#01ff00 138.5px,#76ff00 185.5px,#8eff00 194.5px)"></i><i style="background:linear-gradient(90deg,#00ff04 8.5px,#0f0 56.5px,#0f0 138.5px,#75ff00 185.5px,#a8ff00 203.5px)"></i><i style="background:linear-gradient(90deg,#00ff06 6.5px,#0f0 61.5px,#0f0 138.5px,#75ff00 185.5px,#c7ff00 213.5px)"></i><i style="background:linear-gradient(90deg,#00ff08 6.5px,#0f0 70.5px,#0f0 138.5px,#70ff00 183.5px,#d0ff00 216.5px,#d6ff00 218.5px)"></i><i style="background:linear-gradient(90deg,#00ff0a 5.5px,#0f0 80.5px,#02ff00 139.5px,#75ff00 185.5px,#d3ff00 217.5px,#f8ff00 228.5px)"></i><i style="background:linear-gradient(90deg,#00ff0b 5.5px,#0f0 90.5px,#01ff00 139.5px,#75ff00 185.5px,#d4ff00 217.5px,#ff0 230.5px,#ffe300 239.5px)"></i><i style="background:linear-gradient(90deg,#00ff0d 4.5px,#0f0 100.5px,#01ff00 139.5px,#75ff00 185.5px,#d4ff00 217.5px,#ff0 230.5px,#ffd500 244.5px)"></i><i style="background:linear-gradient(90deg,#00ff0f 4.5px,#0f0 111.5px,#0f0 139.5px,#75ff00 185.5px,#d4ff00 217.5px,#ff0 230.5px,#ffcf00 246.5px,#ffba00 255.5px)"></i><i style="background:linear-gradient(90deg,#0f1 3.5px,#0f0 122.5px,#0f0 139.5px,#75ff00 185.5px,#d4ff00 217.5px,#fffe00 230.5px,#ffcf00 246.5px,#ffa400 266.5px)"></i><i style="background:linear-gradient(90deg,#00ff12 2.5px,#0f0 132.5px,#02ff00 140.5px,#75ff00 185.5px,#d4ff00 217.5px,#fffe00 230.5px,#ffcf00 246.5px,#ffa200 267.5px,#ff9a00 272.5px)"></i><i style="background:linear-gradient(90deg,#00ff14 2.5px,#02ff00 140.5px,#75ff00 185.5px,#d5ff00 217.5px,#fffe00 230.5px,#ffce00 246.5px,#ffa200 267.5px,#ff8700 284.5px)"></i><i style="background:linear-gradient(90deg,#00ff16 2.5px,#01ff00 140.5px,#75ff00 185.5px,#d5ff00 217.5px,#fffd00 230.5px,#ffce00 246.5px,#ffa100 267.5px,#ff7f00 290.5px)"></i><i style="background:linear-gradient(90deg,#00ff17 2.5px,#01ff02 140.5px,#74ff00 185.5px,#d5ff00 217.5px,#fffd00 230.5px,#ffce00 246.5px,#ffa100 267.5px,#ff7800 295.5px,#f70 296.5px)"></i><i style="background:linear-gradient(90deg,#00ff19 1.5px,#01ff05 140.5px,#5cff00 176.5px,#bf0 209.5px,#feff00 229.5px,#ffcb00 247.5px,#ff9f00 268.5px,#ff7600 296.5px,#ff6900 308.5px)"></i><i style="background:linear-gradient(90deg,#00ff1b 1.5px,#00ff07 140.5px,#72ff00 184.5px,#d2ff00 216.5px,#feff00 229.5px,#ffcd00 246.5px,#ffa000 267.5px,#f70 295.5px,#ff6300 314.5px)"></i><i style="background:linear-gradient(90deg,#00ff1d 1.5px,#00ff09 140.5px,#71ff00 184.5px,#d2ff00 216.5px,#ff0 229.5px,#fc0 246.5px,#ffa000 267.5px,#f70 295.5px,#ff5700 327.5px)"></i><i style="background:linear-gradient(90deg,#00ff1e 0.5px,#02ff0c 141.5px,#74ff02 185.5px,#d2ff00 216.5px,#ff0 229.5px,#ffcf00 245.5px,#ffa300 265.5px,#ff7a00 292.5px,#f50 329.5px,#ff5100 334.5px)"></i><i style="background:linear-gradient(90deg,#00ff20 0.5px,#01ff0e 141.5px,#74ff05 185.5px,#d3ff00 216.5px,#ff0 229.5px,#ffce00 245.5px,#ffa300 265.5px,#ff7a00 292.5px,#ff5400 329.5px,#ff4c00 340.5px)"></i><i style="background:linear-gradient(90deg,#0f2 0.5px,#01ff10 141.5px,#74ff07 185.5px,#d3ff00 216.5px,#fffe00 229.5px,#ffce00 245.5px,#ffa200 265.5px,#ff7a00 292.5px,#ff5400 329.5px,#ff4200 354.5px)"></i><i style="background:linear-gradient(90deg,#00ff23 0.5px,#01ff12 141.5px,#74ff0a 185.5px,#d3ff03 216.5px,#fffe00 229.5px,#ffce00 245.5px,#ffa200 265.5px,#ff7900 292.5px,#ff5400 329.5px,#ff3e00 360.5px)"></i><i style="background:linear-gradient(90deg,#00ff25 0.5px,#00ff15 141.5px,#77ff0d 186.5px,#d7ff05 217.5px,#fffe02 229.5px,#ffcd00 245.5px,#ffa200 265.5px,#ff7900 292.5px,#ff5300 329.5px,#ff3900 367.5px)"></i><i style="background:linear-gradient(90deg,#00ff27 0.5px,#00ff17 141.5px,#74ff0f 185.5px,#d3ff09 216.5px,#fffd05 229.5px,#ffcd00 245.5px,#ffa100 265.5px,#ff7900 292.5px,#ff5300 329.5px,#ff3500 374.5px)"></i><i style="background:linear-gradient(90deg,#00ff28 0.5px,#02ff19 142.5px,#74ff12 185.5px,#d4ff0b 216.5px,#fffd08 229.5px,#ffcc03 245.5px,#ffa100 265.5px,#ff7800 292.5px,#ff5300 329.5px,#ff3100 381.5px,#ff2e00 388.5px)"></i><i style="background:linear-gradient(90deg,#00ff2a 0.5px,#02ff1b 142.5px,#73ff15 185.5px,#d4ff0e 216.5px,#feff0c 228.5px,#ffca05 246.5px,#ff9d00 267.5px,#ff7400 295.5px,#ff4f00 333.5px,#ff2e00 387.5px,#ff2a00 395.5px)"></i><i style="background:linear-gradient(90deg,#00ff2c 0.5px,#01ff1e 142.5px,#76ff17 186.5px,#d4ff11 216.5px,#feff0f 228.5px,#ffcc08 245.5px,#ffa003 265.5px,#f70 292.5px,#ff5200 329.5px,#ff3100 381.5px,#ff2700 401.5px)"></i><i style="background:linear-gradient(90deg,#00ff2d 0.5px,#01ff20 142.5px,#76ff1a 186.5px,#d4ff14 216.5px,#feff12 228.5px,#ffcb0b 245.5px,#ffa005 265.5px,#f70 292.5px,#ff5200 329.5px,#ff3000 381.5px,#ff2400 408.5px)"></i><i style="background:linear-gradient(90deg,#00ff2f 0.5px,#0f2 142.5px,#76ff1c 186.5px,#d4ff17 216.5px,#ffff15 228.5px,#ffce0e 244.5px,#ffa108 264.5px,#ff7802 291.5px,#ff5300 327.5px,#ff3200 378.5px,#ff1e00 422.5px)"></i><i style="background:linear-gradient(90deg,#00ff31 0.5px,#00ff25 142.5px,#73ff1f 185.5px,#d1ff1a 215.5px,#ffff18 228.5px,#ffd011 243.5px,#ffa30a 263.5px,#ff7a04 289.5px,#f50 325.5px,#f30 375.5px,#ff1b00 429.5px)"></i><i style="background:linear-gradient(90deg,#00ff32 0.5px,#00ff27 142.5px,#70ff22 184.5px,#ceff1d 214.5px,#ffff1b 228.5px,#ffcf13 243.5px,#ffa20c 263.5px,#ff7a06 289.5px,#ff5400 325.5px,#f30 375.5px,#ff1900 435.5px)"></i><i style="background:linear-gradient(90deg,#00ff34 0.5px,#02ff29 143.5px,#76ff24 186.5px,#d5ff20 216.5px,#fffe1e 228.5px,#ffcf16 243.5px,#ffa20e 263.5px,#ff7908 289.5px,#ff5401 325.5px,#ff3200 375.5px,#ff1400 449.5px)"></i><i style="background:linear-gradient(90deg,#00ff36 0.5px,#01ff2c 143.5px,#76ff27 186.5px,#d5ff23 216.5px,#fffe20 228.5px,#ffcf18 243.5px,#ffa210 263.5px,#ff7909 289.5px,#ff5403 325.5px,#ff3200 375.5px,#ff1300 450.5px,#ff1200 455.5px)"></i><i style="background:linear-gradient(90deg,#00ff38 0.5px,#01ff2e 143.5px,#76ff29 186.5px,#d5ff25 216.5px,#fffe23 228.5px,#ffce1b 243.5px,#ffa113 263.5px,#ff790b 289.5px,#ff5304 325.5px,#ff3200 375.5px,#ff1300 450.5px,#ff0f00 462.5px)"></i><i style="background:linear-gradient(90deg,#00ff39 0.5px,#00ff30 143.5px,#76ff2c 186.5px,#d6ff28 216.5px,#fffd26 228.5px,#ffce1d 243.5px,#ffa115 263.5px,#ff780d 289.5px,#ff5306 325.5px,#ff3100 375.5px,#ff1300 450.5px,#ff0c00 475.5px)"></i><i style="background:linear-gradient(90deg,#00ff3b 0.5px,#0f3 143.5px,#72ff2f 185.5px,#d2ff2b 215.5px,#fffd29 228.5px,#ffce20 243.5px,#ffa117 263.5px,#ff780f 289.5px,#ff5307 325.5px,#ff3100 376.5px,#ff1200 451.5px,#ff0a00 481.5px)"></i><i style="background:linear-gradient(90deg,#00ff3d 0.5px,#00ff35 143.5px,#6fff32 184.5px,#cfff2e 214.5px,#feff2d 227.5px,#ffcb22 244.5px,#ff9e19 264.5px,#ff7610 290.5px,#ff5108 326.5px,#ff3001 377.5px,#f10 453.5px,#ff0800 488.5px)"></i><i style="background:linear-gradient(90deg,#00ff3e 0.5px,#02ff37 144.5px,#75ff34 186.5px,#d6ff31 216.5px,#feff30 227.5px,#ffca24 244.5px,#ff9e1b 264.5px,#ff7612 290.5px,#ff510a 326.5px,#ff3002 377.5px,#f10 453.5px,#ff0400 500.5px)"></i><i style="background:linear-gradient(90deg,#00ff40 0.5px,#01ff3a 144.5px,#75ff37 186.5px,#d3ff34 215.5px,#feff33 227.5px,#ffcc28 243.5px,#ff9f1d 263.5px,#ff7714 289.5px,#ff520b 325.5px,#ff3004 376.5px,#ff1300 447.5px,#ff0300 506.5px)"></i><i style="background:linear-gradient(90deg,#00ff42 0.5px,#01ff3c 144.5px,#75ff3a 186.5px,#d3ff37 215.5px,#ffff36 227.5px,#ffcf2b 242.5px,#ffa320 261.5px,#ff7b17 286.5px,#ff560e 320.5px,#ff3406 368.5px,#ff1500 439.5px,#f00 518.5px)"></i><i style="background:linear-gradient(90deg,#0f4 0.5px,#00ff3f 144.5px,#75ff3c 186.5px,#d3ff3a 215.5px,#ffff39 227.5px,#ffce2d 242.5px,#ffa322 261.5px,#ff7a19 286.5px,#ff550f 320.5px,#ff3407 368.5px,#ff1500 439.5px,#f00 522.5px,#f00 524.5px)"></i><i style="background:linear-gradient(90deg,#00ff45 0.5px,#00ff41 144.5px,#75ff3f 186.5px,#d3ff3d 215.5px,#fffe3c 227.5px,#ffce30 242.5px,#ffa225 261.5px,#ff7a1a 286.5px,#f51 320.5px,#ff3308 368.5px,#ff1500 439.5px,#f00 521.5px,#f00 535.5px)"></i><i style="background:linear-gradient(90deg,#00ff47 0.5px,#00ff43 144.5px,#6fff42 184.5px,#cdff40 213.5px,#fffe3f 227.5px,#ffce32 242.5px,#ffa227 261.5px,#ff791c 286.5px,#ff5512 320.5px,#ff3309 368.5px,#ff1401 440.5px,#f00 520.5px,#f00 540.5px)"></i><i style="background:linear-gradient(90deg,#00ff49 0.5px,#02ff46 145.5px,#75ff44 186.5px,#d4ff43 215.5px,#fffe42 227.5px,#ffcd35 242.5px,#ffa129 261.5px,#ff791e 286.5px,#ff5414 320.5px,#ff330a 368.5px,#ff1402 440.5px,#f00 519.5px,#f00 551.5px)"></i><i style="background:linear-gradient(90deg,#00ff4b 0.5px,#01ff48 145.5px,#75ff47 186.5px,#d4ff46 215.5px,#fffd45 227.5px,#ffcd38 242.5px,#ffa12b 261.5px,#ff7920 286.5px,#ff5415 320.5px,#ff320c 368.5px,#ff1403 440.5px,#f00 518.5px,#f00 561.5px)"></i><i style="background:linear-gradient(90deg,#00ff4c 0.5px,#01ff4b 145.5px,#74ff4a 186.5px,#d4ff49 215.5px,#fffd48 227.5px,#ffcc3a 242.5px,#ffa12d 261.5px,#ff7821 286.5px,#ff5417 320.5px,#ff320d 368.5px,#ff1304 440.5px,#f00 518.5px,#f00 570.5px)"></i><i style="background:linear-gradient(90deg,#00ff4e 0.5px,#00ff4d 145.5px,#74ff4d 186.5px,#d4ff4c 215.5px,#fdff4c 226.5px,#ffc93c 243.5px,#ff9e2f 262.5px,#ff7522 288.5px,#ff5117 323.5px,#ff2f0d 373.5px,#ff1104 447.5px,#f00 517.5px,#f00 579.5px)"></i><i style="background:linear-gradient(90deg,#00ff50 0.5px,#00ff50 145.5px,#74ff50 186.5px,#d5ff4f 215.5px,#feff4f 226.5px,#ffc93f 243.5px,#ff9e31 262.5px,#ff7524 288.5px,#ff5019 323.5px,#ff2f0e 373.5px,#ff1005 448.5px,#f00 516.5px,#f00 587.5px)"></i><i style="background:linear-gradient(90deg,#00ff52 0.5px,#00ff52 145.5px,#71ff52 185.5px,#d1ff53 214.5px,#feff53 226.5px,#ffcb42 242.5px,#ff9f34 261.5px,#ff7727 286.5px,#ff521b 320.5px,#ff3110 369.5px,#ff1206 441.5px,#f00 515.5px,#f00 595.5px)"></i><i style="background:linear-gradient(90deg,#00ff54 0.5px,#02ff55 146.5px,#74ff55 186.5px,#d1ff56 214.5px,#ffff56 226.5px,#ffce45 241.5px,#ffa137 260.5px,#ff7829 285.5px,#ff531d 319.5px,#ff3112 367.5px,#ff1308 438.5px,#ff0001 513.5px,#f00 606.5px)"></i><i style="background:linear-gradient(90deg,#0f5 0.5px,#02ff57 146.5px,#74ff58 186.5px,#d2ff59 214.5px,#ffff59 226.5px,#ffd049 240.5px,#ffa53a 258.5px,#ff7c2c 282.5px,#ff561f 315.5px,#ff3514 361.5px,#ff160a 429.5px,#ff0002 511.5px,#f00 613.5px)"></i><i style="background:linear-gradient(90deg,#00ff57 0.5px,#01ff5a 146.5px,#74ff5b 186.5px,#d2ff5c 214.5px,#ffff5c 226.5px,#ffd04c 240.5px,#ffa43c 258.5px,#ff7c2e 282.5px,#ff5621 315.5px,#ff3415 361.5px,#ff160a 429.5px,#ff0003 511.5px,#f00 622.5px)"></i><i style="background:linear-gradient(90deg,#00ff59 0.5px,#01ff5c 146.5px,#74ff5e 186.5px,#d2ff5f 214.5px,#fffe5f 226.5px,#ffcf4e 240.5px,#ffa43f 258.5px,#ff7b30 282.5px,#ff5622 315.5px,#ff3416 361.5px,#ff150b 429.5px,#ff0003 510.5px,#f00 624.5px,#f00 631.5px)"></i><i style="background:linear-gradient(90deg,#00ff5b 0.5px,#00ff5f 146.5px,#77ff61 187.5px,#d6ff62 215.5px,#fffe63 226.5px,#ffcf51 240.5px,#ffa341 258.5px,#ff7b32 282.5px,#ff5524 315.5px,#ff3418 361.5px,#ff150c 429.5px,#ff0004 509.5px,#f00 620.5px,#f00 639.5px)"></i><i style="background:linear-gradient(90deg,#00ff5d 1.5px,#00ff61 146.5px,#70ff64 185.5px,#cfff65 213.5px,#fffe66 226.5px,#ffcf54 240.5px,#ffa343 258.5px,#ff7a34 282.5px,#ff5525 315.5px,#ff3319 361.5px,#ff140d 430.5px,#ff0005 508.5px,#f00 623.5px,#f00 649.5px)"></i><i style="background:linear-gradient(90deg,#00ff5e 1.5px,#00ff64 146.5px,#6dff66 184.5px,#cbff68 212.5px,#fffd69 226.5px,#ffce56 240.5px,#ffa345 258.5px,#ff7a36 282.5px,#ff5527 315.5px,#ff331a 361.5px,#ff140e 430.5px,#ff0006 507.5px,#f00 631.5px,#f00 658.5px)"></i><i style="background:linear-gradient(90deg,#00ff60 1.5px,#02ff67 147.5px,#73ff69 186.5px,#d3ff6c 214.5px,#fffd6c 226.5px,#ffce59 240.5px,#ffa248 258.5px,#ff7a37 282.5px,#ff5428 315.5px,#ff331b 361.5px,#ff140f 430.5px,#ff0007 506.5px,#f00 639.5px,#f00 666.5px)"></i><i style="background:linear-gradient(90deg,#00ff62 1.5px,#01ff69 147.5px,#73ff6c 186.5px,#d3ff6f 214.5px,#feff70 225.5px,#ffca5b 241.5px,#ff9e48 260.5px,#ff7538 285.5px,#ff5028 319.5px,#ff2f1b 367.5px,#ff110f 439.5px,#ff0007 506.5px,#f00 648.5px,#f00 675.5px)"></i><i style="background:linear-gradient(90deg,#00ff64 1.5px,#01ff6c 147.5px,#76ff6f 187.5px,#d7ff72 215.5px,#feff74 225.5px,#ffca5d 241.5px,#ff9d4b 260.5px,#ff7539 285.5px,#ff502a 319.5px,#ff2f1c 367.5px,#ff1010 439.5px,#ff0008 505.5px,#f00 657.5px,#f00 676.5px)"></i><i style="background:linear-gradient(90deg,#0f6 2.5px,#00ff6f 147.5px,#76ff72 187.5px,#d4ff76 214.5px,#feff77 225.5px,#ffcc61 240.5px,#ffa14e 258.5px,#ff783d 282.5px,#ff532d 315.5px,#ff311e 362.5px,#ff1312 431.5px,#ff0009 503.5px,#f00 667.5px,#f00 676.5px)"></i><i style="background:linear-gradient(90deg,#00ff68 2.5px,#00ff71 147.5px,#73ff75 186.5px,#d4ff79 214.5px,#ffff7b 225.5px,#ffcf65 239.5px,#ffa352 257.5px,#ff793f 281.5px,#ff552f 313.5px,#ff3320 359.5px,#ff1413 427.5px,#ff000a 502.5px,#f00 676.5px)"></i><i style="background:linear-gradient(90deg,#00ff6a 2.5px,#00ff74 147.5px,#6cff78 184.5px,#ccff7c 212.5px,#ffff7e 225.5px,#ffcf68 239.5px,#ffa254 257.5px,#ff7941 281.5px,#ff5431 313.5px,#ff3222 359.5px,#ff1414 427.5px,#ff000b 501.5px,#f00 676.5px)"></i><i style="background:linear-gradient(90deg,#00ff6b 2.5px,#02ff77 148.5px,#76ff7b 187.5px,#d4ff80 214.5px,#ffff81 225.5px,#ffce6b 239.5px,#ffa256 257.5px,#ff7943 281.5px,#ff5432 313.5px,#ff3223 359.5px,#ff1315 427.5px,#ff000c 500.5px,#f00 676.5px)"></i><i style="background:linear-gradient(90deg,#00ff6d 2.5px,#01ff79 148.5px,#76ff7e 187.5px,#d4ff83 214.5px,#fffe85 225.5px,#ffce6e 239.5px,#ffa159 257.5px,#ff7845 281.5px,#ff5434 313.5px,#ff3224 359.5px,#ff1316 427.5px,#ff000d 499.5px,#f00 676.5px)"></i><i style="background:linear-gradient(90deg,#00ff6f 3.5px,#01ff7c 148.5px,#76ff82 187.5px,#d5ff86 214.5px,#fffe88 225.5px,#ffcd70 239.5px,#ffa15b 257.5px,#ff7847 281.5px,#ff5335 313.5px,#ff3125 359.5px,#ff1317 427.5px,#ff000d 498.5px,#f00 676.5px)"></i><i style="background:linear-gradient(90deg,#00ff71 3.5px,#00ff7f 148.5px,#76ff85 187.5px,#d5ff8a 214.5px,#fffd8b 225.5px,#ffcd73 239.5px,#ffa05d 257.5px,#ff7749 281.5px,#ff5337 313.5px,#ff3126 359.5px,#ff1318 427.5px,#ff000e 497.5px,#ff0001 676.5px)"></i><i style="background:linear-gradient(90deg,#00ff73 3.5px,#00ff82 148.5px,#72ff88 186.5px,#d1ff8d 213.5px,#fffd8e 225.5px,#ffcd76 239.5px,#ffa05f 257.5px,#ff774b 281.5px,#ff5238 313.5px,#ff3128 359.5px,#ff1219 427.5px,#ff000f 496.5px,#ff0002 676.5px)"></i><i style="background:linear-gradient(90deg,#00ff75 3.5px,#00ff84 148.5px,#6fff8a 185.5px,#ceff90 212.5px,#fdff93 224.5px,#ffc977 240.5px,#ff9e61 258.5px,#ff754c 282.5px,#ff5039 315.5px,#ff2f28 362.5px,#ff1019 432.5px,#ff0010 496.5px,#ff0002 676.5px)"></i><i style="background:linear-gradient(90deg,#0f7 3.5px,#02ff87 149.5px,#75ff8e 187.5px,#d6ff94 214.5px,#feff96 224.5px,#ffc97a 240.5px,#ff9d63 258.5px,#ff754e 282.5px,#ff503b 315.5px,#ff2e29 362.5px,#ff1019 432.5px,#f01 495.5px,#ff0003 676.5px)"></i><i style="background:linear-gradient(90deg,#00ff79 4.5px,#01ff8a 149.5px,#75ff91 187.5px,#d6ff97 214.5px,#feff9a 224.5px,#ffcb7e 239.5px,#ff9f66 257.5px,#ff7651 281.5px,#ff513d 313.5px,#ff302b 359.5px,#ff121b 427.5px,#ff0012 494.5px,#ff0003 676.5px)"></i><i style="background:linear-gradient(90deg,#00ff7b 4.5px,#01ff8d 149.5px,#75ff94 187.5px,#d6ff9b 214.5px,#feff9e 224.5px,#ffce83 238.5px,#ffa36b 255.5px,#ff7a55 278.5px,#ff5541 309.5px,#ff332e 353.5px,#ff141e 418.5px,#ff0013 492.5px,#ff0004 676.5px)"></i><i style="background:linear-gradient(90deg,#00ff7d 4.5px,#00ff90 149.5px,#75ff97 187.5px,#d2ff9e 213.5px,#ffffa1 224.5px,#ffcd86 238.5px,#ffa26d 255.5px,#ff7957 278.5px,#ff5442 309.5px,#ff332f 353.5px,#ff141f 418.5px,#ff0013 491.5px,#ff0004 676.5px)"></i><i style="background:linear-gradient(90deg,#00ff7f 5.5px,#00ff92 149.5px,#75ff9b 187.5px,#d3ffa2 213.5px,#ffffa5 224.5px,#ffd08a 237.5px,#ffa471 254.5px,#ff7a5a 277.5px,#f54 308.5px,#ff3331 352.5px,#ff1420 417.5px,#ff0014 490.5px,#ff0005 676.5px)"></i><i style="background:linear-gradient(90deg,#00ff81 5.5px,#00ff95 149.5px,#6eff9d 185.5px,#cfffa5 212.5px,#fffea8 224.5px,#ffd08d 237.5px,#ffa374 254.5px,#ff7a5b 277.5px,#ff5546 308.5px,#ff3332 352.5px,#ff1421 417.5px,#ff0015 489.5px,#ff0005 676.5px)"></i><i style="background:linear-gradient(90deg,#00ff83 5.5px,#02ff98 150.5px,#75ffa1 187.5px,#d3ffa9 213.5px,#fffeac 224.5px,#ffcf90 237.5px,#ffa376 254.5px,#ff7a5d 277.5px,#ff5447 308.5px,#ff3234 352.5px,#ff1422 417.5px,#ff0016 488.5px,#ff0006 676.5px)"></i><i style="background:linear-gradient(90deg,#00ff85 6.5px,#00ff9b 149.5px,#64ffa3 182.5px,#c4ffab 209.5px,#fffeaf 224.5px,#ffcf93 237.5px,#ffa378 254.5px,#ff795f 277.5px,#ff5449 308.5px,#ff3235 352.5px,#ff1323 417.5px,#ff0017 487.5px,#ff0006 676.5px)"></i><i style="background:linear-gradient(90deg,#00ff87 6.5px,#00ff9d 147.5px,#01ff9e 150.5px,#74ffa8 187.5px,#d3ffb0 213.5px,#fffdb3 224.5px,#ffce96 237.5px,#ffa27b 254.5px,#ff7961 277.5px,#ff544b 308.5px,#ff3236 352.5px,#ff1324 417.5px,#ff0018 486.5px,#ff0007 676.5px)"></i><i style="background:linear-gradient(90deg,#00ff89 6.5px,#00ffa0 145.5px,#00ffa1 150.5px,#74ffab 187.5px,#d4ffb4 213.5px,#fdffb8 223.5px,#ffc895 239.5px,#ff9b79 257.5px,#ff7360 281.5px,#ff4e49 313.5px,#ff2d35 359.5px,#ff0f22 428.5px,#ff0019 486.5px,#ff0007 676.5px)"></i><i style="background:linear-gradient(90deg,#00ff8b 7.5px,#00ffa2 143.5px,#00ffa4 150.5px,#74ffae 187.5px,#d4ffb7 213.5px,#fdffbb 223.5px,#ffc798 239.5px,#ff9b7c 257.5px,#ff7262 281.5px,#ff4e4b 313.5px,#ff2d36 359.5px,#ff0f23 428.5px,#ff001a 485.5px,#ff0008 676.5px)"></i><i style="background:linear-gradient(90deg,#00ff8d 7.5px,#00ffa5 141.5px,#00ffa7 150.5px,#71ffb1 186.5px,#d0ffbb 212.5px,#feffbf 223.5px,#ffca9d 238.5px,#ff9f81 255.5px,#ff7666 278.5px,#ff514f 309.5px,#ff3039 353.5px,#ff1226 419.5px,#ff001a 484.5px,#ff0008 676.5px)"></i><i style="background:linear-gradient(90deg,#00ff8f 7.5px,#00ffa7 139.5px,#02ffaa 151.5px,#74ffb5 187.5px,#d4ffbf 213.5px,#feffc3 223.5px,#ffcda2 237.5px,#ffa085 254.5px,#ff796a 276.5px,#ff5352 307.5px,#ff323c 350.5px,#ff1328 414.5px,#ff001b 482.5px,#ff0009 673.5px,#ff0009 676.5px)"></i><i style="background:linear-gradient(90deg,#00ff91 8.5px,#0fa 138.5px,#02ffad 151.5px,#74ffb8 187.5px,#d5ffc3 213.5px,#ffffc7 223.5px,#ffcca5 237.5px,#ffa087 254.5px,#ff786c 276.5px,#ff5353 307.5px,#ff313d 350.5px,#ff1329 414.5px,#ff001c 481.5px,#ff000a 669.5px,#ff0009 676.5px)"></i><i style="background:linear-gradient(90deg,#00ff93 8.5px,#00ffac 136.5px,#01ffb0 151.5px,#74ffbc 187.5px,#d1ffc6 212.5px,#ffffcb 223.5px,#ffcfaa 236.5px,#ffa28b 253.5px,#ff796f 275.5px,#ff5456 305.5px,#ff3340 347.5px,#ff142b 410.5px,#ff001d 480.5px,#ff000a 665.5px,#ff000a 676.5px)"></i><i style="background:linear-gradient(90deg,#00ff95 8.5px,#00ffae 135.5px,#01ffb3 151.5px,#74ffbf 187.5px,#d1ffca 212.5px,#ffffcf 223.5px,#ffcead 236.5px,#ffa18e 253.5px,#ff7971 275.5px,#ff5458 305.5px,#ff3240 348.5px,#ff132c 411.5px,#ff001e 479.5px,#ff000b 661.5px,#ff000a 676.5px)"></i><i style="background:linear-gradient(90deg,#00ff97 8.5px,#00ffb1 133.5px,#00ffb6 151.5px,#73ffc3 187.5px,#d1ffcd 212.5px,#fffed2 223.5px,#ffceb0 236.5px,#ffa190 253.5px,#ff7874 275.5px,#ff5359 305.5px,#ff3142 348.5px,#ff132d 411.5px,#ff001f 478.5px,#ff000c 657.5px,#ff000b 676.5px)"></i><i style="background:linear-gradient(90deg,#0f9 9.5px,#00ffb3 132.5px,#00ffb9 151.5px,#70ffc6 186.5px,#cdffd1 211.5px,#fffed6 223.5px,#ffcdb3 236.5px,#ffa093 253.5px,#ff7876 275.5px,#ff535b 305.5px,#ff3143 348.5px,#ff132e 411.5px,#ff0020 477.5px,#ff000d 653.5px,#ff000b 676.5px)"></i><i style="background:linear-gradient(90deg,#00ff9b 9.5px,#00ffb6 130.5px,#00ffbc 151.5px,#69ffc8 184.5px,#caffd4 210.5px,#fffdda 223.5px,#ffcdb6 236.5px,#ffa297 252.5px,#ff7979 274.5px,#ff545d 304.5px,#ff3245 346.5px,#ff1430 408.5px,#ff0021 476.5px,#ff000e 650.5px,#ff000c 676.5px)"></i><i style="background:linear-gradient(90deg,#00ff9d 9.5px,#00ffb8 129.5px,#02ffc0 152.5px,#73ffcd 187.5px,#d2ffd9 212.5px,#fffddd 223.5px,#ffcdb9 236.5px,#ffa299 252.5px,#ff797b 274.5px,#ff535f 304.5px,#ff3246 346.5px,#ff1331 408.5px,#f02 475.5px,#ff000e 646.5px,#ff000c 676.5px)"></i><i style="background:linear-gradient(90deg,#00ffa0 10.5px,#0fb 128.5px,#01ffc3 152.5px,#73ffd1 187.5px,#d2ffdd 212.5px,#fdffe3 222.5px,#ffc6b8 238.5px,#ff9b97 255.5px,#ff7278 278.5px,#ff4e5d 309.5px,#ff2d45 353.5px,#ff0f2f 419.5px,#ff0023 475.5px,#ff000f 645.5px,#ff000d 676.5px)"></i><i style="background:linear-gradient(90deg,#00ffa2 10.5px,#00ffbd 126.5px,#01ffc6 152.5px,#76ffd5 188.5px,#d7ffe1 213.5px,#fdffe7 222.5px,#ffc8bd 237.5px,#ff9c9b 254.5px,#ff757d 276.5px,#ff5060 307.5px,#ff2e47 351.5px,#ff1030 416.5px,#ff0024 474.5px,#ff0010 641.5px,#ff000d 676.5px)"></i><i style="background:linear-gradient(90deg,#00ffa4 10.5px,#00ffc0 125.5px,#00ffc9 152.5px,#76ffd8 188.5px,#d7ffe5 213.5px,#feffeb 222.5px,#ffcbc2 236.5px,#ffa0a1 252.5px,#ff7781 274.5px,#ff5264 304.5px,#ff314a 346.5px,#ff1233 409.5px,#ff0025 472.5px,#f01 636.5px,#ff000e 676.5px)"></i><i style="background:linear-gradient(90deg,#00ffa6 10.5px,#00ffc2 124.5px,#0fc 152.5px,#6fffdb 186.5px,#cfffe8 211.5px,#feffef 222.5px,#ffcbc6 236.5px,#ffa0a4 252.5px,#ff7783 274.5px,#ff5266 304.5px,#ff304c 346.5px,#ff1234 409.5px,#ff0026 471.5px,#ff0012 632.5px,#ff000e 675.5px)"></i><i style="background:linear-gradient(90deg,#00ffa8 11.5px,#00ffc5 123.5px,#00ffcf 152.5px,#6bffde 185.5px,#cbffec 210.5px,#fffff3 222.5px,#ffcdcb 235.5px,#ffa2a8 251.5px,#ff7a88 272.5px,#ff546a 301.5px,#ff334f 342.5px,#ff1437 403.5px,#ff0027 470.5px,#ff0012 629.5px,#ff000f 674.5px)"></i><i style="background:linear-gradient(90deg,#0fa 11.5px,#00ffc7 122.5px,#02ffd3 153.5px,#76ffe3 188.5px,#d3fff1 212.5px,#fffff7 222.5px,#ffd0d1 234.5px,#ffa4ac 250.5px,#ff7b8b 271.5px,#ff556c 300.5px,#ff3451 340.5px,#ff1539 400.5px,#ff0028 469.5px,#ff0013 626.5px,#ff000f 673.5px)"></i><i style="background:linear-gradient(90deg,#00ffad 11.5px,#00ffc9 120.5px,#01ffd6 153.5px,#76ffe7 188.5px,#d4fff5 212.5px,#fffefb 222.5px,#ffd0d4 234.5px,#ffa3af 250.5px,#ff7a8d 271.5px,#ff556e 300.5px,#ff3352 341.5px,#ff143a 401.5px,#ff0029 468.5px,#ff0014 623.5px,#ff0010 672.5px)"></i><i style="background:linear-gradient(90deg,#00ffaf 11.5px,#0fc 119.5px,#01ffd9 153.5px,#76ffeb 188.5px,#d4fff9 212.5px,#fffeff 222.5px,#ffcfd8 234.5px,#ffa3b2 250.5px,#ff7a8f 271.5px,#ff5470 300.5px,#ff3254 341.5px,#ff143b 401.5px,#ff002a 467.5px,#ff0015 620.5px,#f01 671.5px)"></i><i style="background:linear-gradient(90deg,#00ffb1 12.5px,#00ffce 118.5px,#0fd 153.5px,#76ffee 188.5px,#d4fffd 212.5px,#fff9ff 223.5px,#ffccd8 235.5px,#ffa0b2 251.5px,#ff7890 272.5px,#ff5371 301.5px,#ff3154 342.5px,#ff133b 403.5px,#ff002b 466.5px,#ff0016 617.5px,#f01 670.5px)"></i><i style="background:linear-gradient(90deg,#00ffb3 12.5px,#00ffd1 117.5px,#00ffe0 153.5px,#72fff1 187.5px,#d2fdff 212.5px,#fff4ff 224.5px,#ffc5d6 237.5px,#ff99af 254.5px,#ff718d 276.5px,#ff4c6d 307.5px,#ff2b51 351.5px,#ff0d38 417.5px,#ff002c 466.5px,#ff0016 615.5px,#ff0012 669.5px)"></i><i style="background:linear-gradient(90deg,#00ffb5 12.5px,#00ffd4 116.5px,#00ffe3 153.5px,#6afff4 185.5px,#bafdff 206.5px,#fff0ff 225.5px,#ffc1d6 238.5px,#ff96b0 255.5px,#ff6e8d 278.5px,#ff4a6d 309.5px,#ff2951 354.5px,#ff0b37 422.5px,#ff002d 465.5px,#ff0017 612.5px,#ff0012 668.5px)"></i><i style="background:linear-gradient(90deg,#00ffb8 12.5px,#00ffd6 115.5px,#02ffe7 154.5px,#75fffa 188.5px,#a5fcff 201.5px,#ffebff 226.5px,#ffbed6 239.5px,#ff94b1 256.5px,#ff6c8d 279.5px,#ff486d 311.5px,#ff2750 357.5px,#ff0937 427.5px,#ff002e 465.5px,#ff0018 611.5px,#ff0013 667.5px)"></i><i style="background:linear-gradient(90deg,#00ffba 13.5px,#00ffd9 115.5px,#01ffea 154.5px,#75fffd 188.5px,#ffe6ff 227.5px,#ffb8d4 241.5px,#ff8dae 259.5px,#ff668b 283.5px,#ff436b 316.5px,#ff234e 364.5px,#ff0535 438.5px,#ff002e 466.5px,#ff0018 612.5px,#ff0013 666.5px)"></i><i style="background:linear-gradient(90deg,#00ffbc 13.5px,#00ffdb 113.5px,#01ffee 154.5px,#74fdff 188.5px,#ffe2ff 228.5px,#ffb4d5 242.5px,#ff8bae 260.5px,#ff648b 284.5px,#ff416b 318.5px,#ff214e 367.5px,#ff0334 444.5px,#ff002e 471.5px,#ff0018 619.5px,#ff0014 665.5px)"></i><i style="background:linear-gradient(90deg,#00ffbf 13.5px,#00ffde 112.5px,#00fff1 154.5px,#5efdff 182.5px,#ffdeff 229.5px,#ffb1d5 243.5px,#ff88af 261.5px,#ff618b 286.5px,#ff3e6a 321.5px,#ff1f4d 371.5px,#ff0133 450.5px,#ff001d 581.5px,#ff0015 664.5px)"></i><i style="background:linear-gradient(90deg,#00ffc1 14.5px,#00ffe1 112.5px,#00fff4 154.5px,#49fdff 176.5px,#ffd9ff 230.5px,#ffabd3 245.5px,#ff82ac 264.5px,#ff5c88 290.5px,#ff3a68 326.5px,#ff1b4b 379.5px,#f03 455.5px,#ff001d 589.5px,#ff0015 663.5px)"></i><i style="background:linear-gradient(90deg,#00ffc3 14.5px,#00ffe3 111.5px,#00fff8 154.5px,#37fcff 171.5px,#ffd5ff 231.5px,#ffa8d3 246.5px,#ff80ad 265.5px,#ff5a89 291.5px,#ff3868 328.5px,#ff194b 382.5px,#ff0034 456.5px,#ff001d 590.5px,#ff0016 663.5px)"></i><i style="background:linear-gradient(90deg,#00ffc6 15.5px,#00ffe6 111.5px,#00fffb 154.5px,#2dfaff 168.5px,#ffd1ff 232.5px,#ffa5d4 247.5px,#ff7cac 267.5px,#ff5788 294.5px,#ff3567 332.5px,#ff164a 388.5px,#ff0035 456.5px,#ff001e 589.5px,#ff0016 662.5px)"></i><i style="background:linear-gradient(90deg,#00ffc8 15.5px,#00ffe9 110.5px,#02ffff 155.5px,#ffcdff 233.5px,#ffa0d2 249.5px,#ff78ab 269.5px,#ff5386 297.5px,#ff3266 336.5px,#ff1348 394.5px,#ff0035 456.5px,#ff001f 588.5px,#ff0017 661.5px)"></i><i style="background:linear-gradient(90deg,#00ffca 15.5px,#00ffeb 109.5px,#00fdff 152.5px,#01fbff 155.5px,#ffc9ff 234.5px,#ff9dd2 250.5px,#ff74aa 271.5px,#ff5086 299.5px,#ff2f65 339.5px,#ff1148 398.5px,#ff0036 455.5px,#ff0020 585.5px,#ff0018 660.5px)"></i><i style="background:linear-gradient(90deg,#00ffcd 16.5px,#0fe 109.5px,#00fdff 146.5px,#00f8ff 155.5px,#ffc6ff 235.5px,#ff9ad3 251.5px,#ff72aa 272.5px,#ff4e85 301.5px,#ff2d64 342.5px,#ff0f47 402.5px,#ff0037 455.5px,#ff0020 584.5px,#ff0018 659.5px)"></i><i style="background:linear-gradient(90deg,#00ffcf 16.5px,#00fff1 108.5px,#00fdff 140.5px,#00f4ff 155.5px,#ffc2ff 236.5px,#ff97d3 252.5px,#ff70ab 273.5px,#ff4c86 302.5px,#ff2c65 343.5px,#ff0f48 403.5px,#ff0038 454.5px,#ff0021 581.5px,#ff0019 658.5px)"></i><i style="background:linear-gradient(90deg,#00ffd1 16.5px,#00fff3 107.5px,#00fdff 134.5px,#00f1ff 155.5px,#f8c0ff 235.5px,#ffbbfc 238.5px,#ff93d1 254.5px,#ff6ba9 276.5px,#ff4884 306.5px,#ff2863 348.5px,#ff0c47 410.5px,#ff0039 453.5px,#f02 579.5px,#ff0019 657.5px)"></i><i style="background:linear-gradient(90deg,#00ffd4 17.5px,#00fff6 107.5px,#00fcff 129.5px,#0ef 155.5px,#efbeff 233.5px,#fbf 238.5px,#ff90d2 255.5px,#ff6aa9 277.5px,#ff4785 307.5px,#ff2864 349.5px,#ff0b47 411.5px,#ff003b 452.5px,#ff0023 576.5px,#ff001a 656.5px)"></i><i style="background:linear-gradient(90deg,#00ffd6 17.5px,#00fff9 106.5px,#00fcff 123.5px,#02eaff 156.5px,#ffb7ff 239.5px,#ff8dd2 256.5px,#ff68aa 278.5px,#ff4585 308.5px,#ff2765 350.5px,#ff0a47 413.5px,#ff003c 451.5px,#ff0024 574.5px,#ff001b 655.5px)"></i><i style="background:linear-gradient(90deg,#00ffd9 18.5px,#00fdff 116.5px,#01e7ff 156.5px,#ffb4ff 240.5px,#ff8bd2 257.5px,#f6a 279.5px,#ff4486 309.5px,#ff2565 352.5px,#ff0948 415.5px,#ff003d 451.5px,#ff0025 573.5px,#ff001b 654.5px)"></i><i style="background:linear-gradient(90deg,#00ffdb 18.5px,#00fffe 105.5px,#00e4ff 156.5px,#ffb0ff 241.5px,#ff88d3 258.5px,#ff64ab 280.5px,#ff4387 310.5px,#ff2465 353.5px,#ff0948 416.5px,#ff003e 450.5px,#ff0026 570.5px,#ff001c 653.5px)"></i><i style="background:linear-gradient(90deg,#00ffde 18.5px,#00fdff 104.5px,#00e1ff 156.5px,#ffadff 242.5px,#ff84d1 260.5px,#ff60a9 283.5px,#ff3f84 314.5px,#ff2164 358.5px,#ff0647 423.5px,#ff003f 450.5px,#ff0026 569.5px,#ff001c 652.5px)"></i><i style="background:linear-gradient(90deg,#00ffe0 19.5px,#00fdff 98.5px,#00dfff 156.5px,#f8abff 241.5px,#ffa7fc 244.5px,#ff81d1 261.5px,#ff5ea9 284.5px,#ff3e85 315.5px,#ff2064 359.5px,#ff0547 424.5px,#ff003f 450.5px,#ff0027 569.5px,#ff001d 651.5px)"></i><i style="background:linear-gradient(90deg,#00ffe3 19.5px,#00fdff 92.5px,#00dcff 156.5px,#f3a9ff 240.5px,#ffa7ff 244.5px,#ff7fd2 262.5px,#ff5caa 285.5px,#ff3c86 316.5px,#ff1f65 360.5px,#ff0548 425.5px,#ff0040 450.5px,#ff0028 568.5px,#ff001e 650.5px)"></i><i style="background:linear-gradient(90deg,#00ffe5 19.5px,#00fdff 86.5px,#02d8ff 157.5px,#ffa4ff 245.5px,#ff7dd2 263.5px,#ff5aaa 286.5px,#ff3a85 318.5px,#ff1d65 363.5px,#ff0348 429.5px,#ff003f 458.5px,#ff0027 580.5px,#ff001e 649.5px)"></i><i style="background:linear-gradient(90deg,#00ffe8 20.5px,#00fdff 80.5px,#01d6ff 157.5px,#ffa0ff 246.5px,#ff79d0 265.5px,#ff56a8 289.5px,#ff3783 322.5px,#ff1b63 368.5px,#ff0046 437.5px,#ff002d 545.5px,#ff001f 648.5px)"></i><i style="background:linear-gradient(90deg,#00ffea 20.5px,#00fdff 74.5px,#01d3ff 157.5px,#ff9dff 247.5px,#ff77d1 266.5px,#ff55a9 290.5px,#ff3684 323.5px,#ff1a64 369.5px,#ff0047 438.5px,#ff002d 546.5px,#ff001f 647.5px)"></i><i style="background:linear-gradient(90deg,#00ffed 20.5px,#00fdff 68.5px,#00d0ff 157.5px,#ff9aff 248.5px,#ff74d1 267.5px,#ff53a9 291.5px,#ff3485 324.5px,#ff1864 371.5px,#ff0047 439.5px,#ff002e 547.5px,#ff0020 646.5px)"></i><i style="background:linear-gradient(90deg,#00fff0 21.5px,#00fdff 62.5px,#00ceff 157.5px,#fc98ff 248.5px,#ff93fa 251.5px,#ff6fce 270.5px,#ff4ea6 295.5px,#ff3082 329.5px,#ff1561 378.5px,#ff0048 440.5px,#ff002e 548.5px,#ff0021 645.5px)"></i><i style="background:linear-gradient(90deg,#00fff2 21.5px,#00fdff 57.5px,#00cbff 157.5px,#f397ff 246.5px,#ff93fd 251.5px,#ff70d2 269.5px,#ff50aa 293.5px,#ff3286 326.5px,#ff1765 373.5px,#ff0049 438.5px,#ff0030 544.5px,#ff0021 644.5px)"></i><i style="background:linear-gradient(90deg,#00fff5 21.5px,#00fdff 51.5px,#02c8ff 158.5px,#fe92ff 251.5px,#ff6cd0 271.5px,#ff4ca8 296.5px,#ff2f84 330.5px,#ff1463 378.5px,#ff004a 438.5px,#ff0030 543.5px,#f02 643.5px)"></i><i style="background:linear-gradient(90deg,#00fff8 22.5px,#00fcff 46.5px,#01c6ff 158.5px,#fe8fff 252.5px,#ff6ad1 272.5px,#ff4ba9 297.5px,#ff2e85 331.5px,#ff1364 379.5px,#ff004b 437.5px,#ff0031 541.5px,#ff0023 642.5px)"></i><i style="background:linear-gradient(90deg,#00fffa 22.5px,#00fcff 41.5px,#01c4ff 158.5px,#fe8cff 253.5px,#ff68d1 273.5px,#ff49a9 298.5px,#ff2d85 332.5px,#ff1264 381.5px,#ff004d 436.5px,#ff0032 539.5px,#ff0023 641.5px)"></i><i style="background:linear-gradient(90deg,#00fffd 22.5px,#00f4ff 52.5px,#00c1ff 158.5px,#fe8aff 254.5px,#ff66d1 274.5px,#ff48aa 299.5px,#ff2b85 334.5px,#ff1164 383.5px,#ff004e 435.5px,#ff0034 536.5px,#ff0024 640.5px)"></i><i style="background:linear-gradient(90deg,#00feff 23.5px,#00bfff 158.5px,#fc88ff 254.5px,#ff81f8 258.5px,#ff60cc 278.5px,#ff41a4 305.5px,#ff2680 342.5px,#ff0c60 394.5px,#ff004f 435.5px,#ff0034 536.5px,#ff0025 639.5px)"></i><i style="background:linear-gradient(90deg,#00fcff 23.5px,#00bdff 158.5px,#f686ff 253.5px,#ff83fd 257.5px,#ff63d2 276.5px,#f4a 302.5px,#ff2885 337.5px,#ff0f64 387.5px,#ff0050 434.5px,#ff0035 534.5px,#ff0025 638.5px)"></i><i style="background:linear-gradient(90deg,#00f9ff 23.5px,#02baff 159.5px,#fe82ff 257.5px,#ff5fd1 278.5px,#ff42a9 304.5px,#ff2684 340.5px,#ff0d63 391.5px,#ff0051 433.5px,#ff0037 531.5px,#ff0026 637.5px)"></i><i style="background:linear-gradient(90deg,#00f7ff 24.5px,#01b8ff 159.5px,#fe7fff 258.5px,#ff5dd1 279.5px,#ff40a9 305.5px,#ff2585 341.5px,#ff0c64 392.5px,#ff0053 432.5px,#ff0038 529.5px,#ff0027 636.5px)"></i><i style="background:linear-gradient(90deg,#00f4ff 24.5px,#01b6ff 159.5px,#fe7dff 259.5px,#ff5cd1 280.5px,#ff3ea9 307.5px,#ff2384 343.5px,#ff0b63 395.5px,#ff0054 431.5px,#ff0039 527.5px,#ff0027 636.5px)"></i><i style="background:linear-gradient(90deg,#00f2ff 24.5px,#00b3ff 159.5px,#ff79fd 261.5px,#ff5ad2 281.5px,#ff3da9 308.5px,#ff2284 345.5px,#ff0964 397.5px,#f05 431.5px,#ff003a 526.5px,#ff0028 635.5px)"></i><i style="background:linear-gradient(90deg,#00efff 25.5px,#00b1ff 159.5px,#fc79ff 260.5px,#ff71f6 265.5px,#ff53cb 286.5px,#ff37a4 314.5px,#ff1d7f 353.5px,#ff055f 408.5px,#f05 432.5px,#ff003a 527.5px,#ff0028 634.5px)"></i><i style="background:linear-gradient(90deg,#00edff 25.5px,#02afff 160.5px,#ff74fd 263.5px,#ff56d2 283.5px,#ff3aaa 310.5px,#ff2085 347.5px,#ff0865 399.5px,#ff0057 429.5px,#ff003c 522.5px,#ff0029 633.5px)"></i><i style="background:linear-gradient(90deg,#00ebff 25.5px,#02adff 160.5px,#ff72fd 264.5px,#ff53d1 285.5px,#ff37a8 313.5px,#ff1d84 351.5px,#ff0663 405.5px,#ff0058 430.5px,#ff003c 523.5px,#ff002a 632.5px)"></i><i style="background:linear-gradient(90deg,#00e8ff 26.5px,#01abff 160.5px,#ff70fd 265.5px,#ff52d1 286.5px,#ff36a9 314.5px,#ff1c84 352.5px,#ff0563 406.5px,#ff0059 429.5px,#ff003e 521.5px,#ff002a 631.5px)"></i><i style="background:linear-gradient(90deg,#00e6ff 26.5px,#01a9ff 160.5px,#ff6efd 266.5px,#ff50d1 287.5px,#ff35a9 315.5px,#ff1b85 353.5px,#ff0464 407.5px,#ff005a 430.5px,#ff003e 522.5px,#ff002b 630.5px)"></i><i style="background:linear-gradient(90deg,#00e3ff 27.5px,#00a7ff 160.5px,#ff6bfd 267.5px,#ff4ed2 288.5px,#f3a 316.5px,#ff1b85 354.5px,#ff0364 408.5px,#ff005a 431.5px,#ff003f 523.5px,#ff002c 629.5px)"></i><i style="background:linear-gradient(90deg,#00e1ff 27.5px,#00a5ff 160.5px,#ff69fd 268.5px,#ff4dd2 289.5px,#ff32aa 317.5px,#ff1a86 355.5px,#ff0365 409.5px,#ff0059 438.5px,#ff003d 533.5px,#ff002c 628.5px)"></i><i style="background:linear-gradient(90deg,#00dfff 28.5px,#02a3ff 161.5px,#ff67fd 269.5px,#ff4bd2 290.5px,#ff31aa 318.5px,#ff1886 357.5px,#ff0165 412.5px,#ff0047 493.5px,#ff002e 620.5px,#ff002d 627.5px)"></i><i style="background:linear-gradient(90deg,#00dcff 28.5px,#02a1ff 161.5px,#ff65fd 270.5px,#ff48d1 292.5px,#ff2ea9 321.5px,#ff1684 361.5px,#ff0063 417.5px,#ff0046 500.5px,#ff002e 626.5px)"></i><i style="background:linear-gradient(90deg,#00daff 29.5px,#019fff 161.5px,#ff63fd 271.5px,#ff47d1 293.5px,#ff2da9 322.5px,#ff1584 362.5px,#ff0064 418.5px,#ff0047 501.5px,#ff002e 625.5px)"></i><i style="background:linear-gradient(90deg,#00d8ff 29.5px,#019dff 161.5px,#ff61fd 272.5px,#ff45d1 294.5px,#ff2caa 323.5px,#ff1485 363.5px,#ff0065 418.5px,#ff0048 501.5px,#ff002f 624.5px)"></i><i style="background:linear-gradient(90deg,#00d6ff 29.5px,#009cff 161.5px,#ff5ffd 273.5px,#ff44d2 295.5px,#ff2baa 324.5px,#ff1385 364.5px,#f06 417.5px,#ff0049 499.5px,#ff0030 623.5px)"></i><i style="background:linear-gradient(90deg,#00d4ff 30.5px,#009aff 161.5px,#ff5dfd 274.5px,#ff42d2 296.5px,#ff29a9 326.5px,#ff1284 367.5px,#ff0068 416.5px,#ff004a 497.5px,#ff0031 622.5px)"></i><i style="background:linear-gradient(90deg,#00d2ff 30.5px,#0298ff 162.5px,#ff5bfd 275.5px,#ff41d2 297.5px,#ff28aa 327.5px,#ff1185 368.5px,#ff0069 415.5px,#ff004b 495.5px,#ff0032 619.5px,#ff0031 621.5px)"></i><i style="background:linear-gradient(90deg,#00cfff 31.5px,#0296ff 162.5px,#ff59fd 276.5px,#ff3ed1 299.5px,#ff26a9 329.5px,#ff0f85 370.5px,#ff006b 414.5px,#ff004d 493.5px,#f03 615.5px,#ff0032 620.5px)"></i><i style="background:linear-gradient(90deg,#00ceff 31.5px,#0194ff 162.5px,#ff57fd 277.5px,#ff3dd1 300.5px,#ff25aa 330.5px,#ff0f85 371.5px,#ff006c 413.5px,#ff004e 491.5px,#ff0034 611.5px,#f03 619.5px)"></i><i style="background:linear-gradient(90deg,#0cf 31.5px,#0193ff 162.5px,#ff55fd 278.5px,#ff3bd2 301.5px,#ff23a9 332.5px,#ff0d84 374.5px,#ff006d 413.5px,#ff004f 491.5px,#ff0034 611.5px,#f03 618.5px)"></i><i style="background:linear-gradient(90deg,#00c9ff 32.5px,#0091ff 162.5px,#ff54fe 279.5px,#ff3ad2 302.5px,#ff22a9 333.5px,#ff0c85 375.5px,#ff006f 412.5px,#ff0050 489.5px,#ff0036 607.5px,#ff0034 617.5px)"></i><i style="background:linear-gradient(90deg,#00c8ff 32.5px,#0090ff 162.5px,#ff52fe 280.5px,#ff39d2 303.5px,#ff21aa 334.5px,#ff0b85 376.5px,#ff0070 411.5px,#ff0052 487.5px,#ff0037 603.5px,#ff0035 616.5px)"></i><i style="background:linear-gradient(90deg,#00c6ff 33.5px,#028eff 163.5px,#ff50fe 281.5px,#ff37d2 304.5px,#ff20aa 335.5px,#ff0b86 377.5px,#ff0072 410.5px,#ff0053 485.5px,#ff0038 600.5px,#ff0035 615.5px)"></i><i style="background:linear-gradient(90deg,#00c4ff 33.5px,#028cff 163.5px,#ff4efe 282.5px,#ff35d1 306.5px,#ff1ea8 338.5px,#ff0984 381.5px,#ff0073 409.5px,#ff0054 483.5px,#ff0039 596.5px,#ff0036 614.5px)"></i><i style="background:linear-gradient(90deg,#00c2ff 33.5px,#018bff 163.5px,#ff4cfe 283.5px,#ff34d1 307.5px,#ff1da9 339.5px,#ff0885 382.5px,#ff0075 408.5px,#ff0056 481.5px,#ff003b 592.5px,#ff0037 613.5px)"></i><i style="background:linear-gradient(90deg,#00c0ff 34.5px,#0189ff 163.5px,#ff4bfe 284.5px,#ff32d2 308.5px,#ff1ca9 340.5px,#ff0785 384.5px,#ff0076 408.5px,#ff0057 481.5px,#ff003b 592.5px,#ff0038 612.5px)"></i><i style="background:linear-gradient(90deg,#00beff 34.5px,#08f 163.5px,#ff49fe 285.5px,#ff31d2 309.5px,#ff1baa 341.5px,#ff0685 385.5px,#f07 407.5px,#ff0058 479.5px,#ff003d 588.5px,#ff0038 611.5px)"></i><i style="background:linear-gradient(90deg,#00bcff 35.5px,#0086ff 163.5px,#ff47fe 286.5px,#ff30d2 310.5px,#ff1aaa 342.5px,#ff0585 386.5px,#ff0079 407.5px,#ff0059 479.5px,#ff003d 587.5px,#ff0039 610.5px)"></i><i style="background:linear-gradient(90deg,#0bf 35.5px,#0284ff 164.5px,#ff46fe 287.5px,#ff2fd3 311.5px,#ff19ab 343.5px,#ff0486 387.5px,#ff007a 407.5px,#ff005a 478.5px,#ff003e 585.5px,#ff003a 609.5px)"></i><i style="background:linear-gradient(90deg,#00b9ff 36.5px,#0283ff 164.5px,#ff44fe 288.5px,#ff2cd1 313.5px,#ff17a9 346.5px,#ff0284 391.5px,#ff006e 432.5px,#ff004f 515.5px,#ff003a 609.5px)"></i><i style="background:linear-gradient(90deg,#00b7ff 36.5px,#0181ff 164.5px,#ff42fe 289.5px,#ff2bd2 314.5px,#ff16a9 347.5px,#ff0285 392.5px,#ff0064 456.5px,#ff0047 551.5px,#ff003b 608.5px)"></i><i style="background:linear-gradient(90deg,#00b5ff 37.5px,#0180ff 164.5px,#ff41fe 290.5px,#ff2ad2 315.5px,#ff15aa 348.5px,#ff0185 393.5px,#ff0064 457.5px,#ff0047 552.5px,#ff003c 607.5px)"></i><i style="background:linear-gradient(90deg,#00b3ff 37.5px,#007fff 164.5px,#ff3ffe 291.5px,#ff29d2 316.5px,#ff14aa 349.5px,#ff0086 394.5px,#ff0065 458.5px,#ff0048 553.5px,#ff003d 606.5px)"></i><i style="background:linear-gradient(90deg,#00b1ff 38.5px,#007dff 164.5px,#ff3efe 292.5px,#ff28d2 317.5px,#ff13aa 351.5px,#ff0085 397.5px,#ff0064 462.5px,#ff0047 558.5px,#ff003d 605.5px)"></i><i style="background:linear-gradient(90deg,#00b0ff 38.5px,#027cff 165.5px,#ff3cfe 293.5px,#ff26d3 318.5px,#ff12aa 352.5px,#ff0086 397.5px,#ff0065 462.5px,#ff0048 558.5px,#ff003e 604.5px)"></i><i style="background:linear-gradient(90deg,#00aeff 39.5px,#027aff 165.5px,#ff3bfe 294.5px,#ff25d1 320.5px,#ff10a9 354.5px,#f08 396.5px,#ff0067 460.5px,#ff0049 554.5px,#ff003f 603.5px)"></i><i style="background:linear-gradient(90deg,#00adff 39.5px,#0179ff 165.5px,#ff39fe 295.5px,#ff23d2 321.5px,#ff0faa 355.5px,#ff008a 395.5px,#ff0068 458.5px,#ff004b 551.5px,#ff0040 602.5px)"></i><i style="background:linear-gradient(90deg,#00abff 40.5px,#0178ff 165.5px,#ff38fe 296.5px,#ff22d2 322.5px,#ff0ea9 357.5px,#ff008b 394.5px,#ff006a 457.5px,#ff004c 549.5px,#ff0040 601.5px)"></i><i style="background:linear-gradient(90deg,#00a9ff 40.5px,#07f 165.5px,#ff36fe 297.5px,#ff21d2 323.5px,#ff0daa 358.5px,#ff008d 393.5px,#ff006b 455.5px,#ff004d 546.5px,#ff0041 600.5px)"></i><i style="background:linear-gradient(90deg,#00a7ff 41.5px,#0075ff 165.5px,#ff35fe 298.5px,#ff20d2 324.5px,#ff0caa 359.5px,#ff008f 392.5px,#ff006d 453.5px,#ff004f 542.5px,#ff0042 599.5px)"></i><i style="background:linear-gradient(90deg,#00a6ff 41.5px,#0274ff 166.5px,#ff33fe 299.5px,#ff1fd3 325.5px,#ff0baa 360.5px,#ff0090 392.5px,#ff006e 453.5px,#ff0050 542.5px,#ff0043 598.5px)"></i><i style="background:linear-gradient(90deg,#00a4ff 42.5px,#0272ff 166.5px,#ff32fe 300.5px,#ff1dd2 327.5px,#ff0aa9 363.5px,#ff0092 391.5px,#ff0070 451.5px,#ff0051 538.5px,#f04 597.5px)"></i><i style="background:linear-gradient(90deg,#00a3ff 42.5px,#0171ff 166.5px,#ff30fe 301.5px,#ff1cd2 328.5px,#ff09a9 364.5px,#ff0094 390.5px,#ff0072 449.5px,#ff0053 535.5px,#f04 596.5px)"></i><i style="background:linear-gradient(90deg,#00a2ff 42.5px,#0170ff 166.5px,#ff2ffe 302.5px,#ff1bd2 329.5px,#ff08aa 365.5px,#ff0096 389.5px,#ff0073 448.5px,#ff0054 533.5px,#ff0045 595.5px)"></i><i style="background:linear-gradient(90deg,#00a0ff 43.5px,#016fff 166.5px,#ff2efe 303.5px,#ff1ad2 330.5px,#ff07aa 366.5px,#ff0097 389.5px,#ff0074 447.5px,#f05 531.5px,#ff0046 594.5px)"></i><i style="background:linear-gradient(90deg,#009fff 43.5px,#006eff 166.5px,#ff2cfe 304.5px,#ff19d2 331.5px,#ff06aa 367.5px,#f09 388.5px,#ff0076 446.5px,#ff0057 529.5px,#ff0047 593.5px)"></i><i style="background:linear-gradient(90deg,#009dff 44.5px,#026cff 167.5px,#ff2bfe 305.5px,#ff18d3 332.5px,#ff05ab 368.5px,#ff009a 388.5px,#f07 446.5px,#ff0057 529.5px,#ff0048 592.5px)"></i><i style="background:linear-gradient(90deg,#009cff 44.5px,#026bff 167.5px,#ff2afe 306.5px,#ff16d2 334.5px,#ff04a9 371.5px,#f09 391.5px,#ff0076 449.5px,#ff0057 533.5px,#ff0048 591.5px)"></i><i style="background:linear-gradient(90deg,#009aff 44.5px,#016aff 167.5px,#ff28fe 307.5px,#ff15d2 335.5px,#ff03aa 372.5px,#ff0096 396.5px,#ff0074 456.5px,#f05 543.5px,#ff0049 590.5px)"></i><i style="background:linear-gradient(90deg,#09f 45.5px,#0169ff 167.5px,#ff27fe 308.5px,#ff14d2 336.5px,#ff02aa 373.5px,#ff0085 424.5px,#ff0064 496.5px,#ff004a 589.5px)"></i><i style="background:linear-gradient(90deg,#0097ff 45.5px,#0168ff 167.5px,#ff26fe 309.5px,#ff13d2 337.5px,#ff01aa 374.5px,#ff0086 425.5px,#ff0065 497.5px,#ff004b 588.5px)"></i><i style="background:linear-gradient(90deg,#0096ff 46.5px,#0067ff 167.5px,#ff25fe 310.5px,#ff12d3 338.5px,#f0a 376.5px,#ff0085 427.5px,#ff0064 500.5px,#ff004c 587.5px)"></i><i style="background:linear-gradient(90deg,#0095ff 46.5px,#0265ff 168.5px,#ff23fe 311.5px,#ff11d3 339.5px,#f0a 377.5px,#ff0085 429.5px,#ff0064 502.5px,#ff004c 586.5px)"></i><i style="background:linear-gradient(90deg,#0093ff 46.5px,#0264ff 168.5px,#ff22fe 312.5px,#ff0fd2 341.5px,#f0a 378.5px,#ff0086 430.5px,#ff0065 503.5px,#ff004d 585.5px)"></i><i style="background:linear-gradient(90deg,#0092ff 47.5px,#0163ff 168.5px,#ff21fe 313.5px,#ff0fd2 342.5px,#ff00ad 377.5px,#f08 428.5px,#ff0067 500.5px,#ff004e 584.5px)"></i><i style="background:linear-gradient(90deg,#0091ff 47.5px,#0162ff 168.5px,#ff20fe 314.5px,#ff0ed2 343.5px,#ff00af 376.5px,#ff0089 427.5px,#ff0068 498.5px,#ff004f 583.5px)"></i><i style="background:linear-gradient(90deg,#008fff 48.5px,#0161ff 168.5px,#ff1efe 315.5px,#ff0dd2 344.5px,#ff00b1 375.5px,#ff008b 425.5px,#ff006a 495.5px,#ff0050 582.5px)"></i><i style="background:linear-gradient(90deg,#008eff 48.5px,#0060ff 168.5px,#ff1dfe 316.5px,#ff0cd3 345.5px,#ff00b3 374.5px,#ff008e 423.5px,#ff006c 492.5px,#ff0050 582.5px)"></i><i style="background:linear-gradient(90deg,#008cff 49.5px,#025fff 169.5px,#ff1cfe 317.5px,#ff0bd3 346.5px,#ff00b4 374.5px,#ff008f 423.5px,#ff006d 492.5px,#ff0051 581.5px)"></i><i style="background:linear-gradient(90deg,#008bff 49.5px,#025eff 169.5px,#ff1bfe 318.5px,#ff09d2 348.5px,#ff00b7 373.5px,#ff0090 422.5px,#ff006e 490.5px,#ff0052 580.5px)"></i><i style="background:linear-gradient(90deg,#008aff 50.5px,#015dff 169.5px,#ff1afe 319.5px,#ff08d2 349.5px,#ff00b9 372.5px,#ff0093 420.5px,#ff0070 487.5px,#ff0053 579.5px)"></i><i style="background:linear-gradient(90deg,#0089ff 50.5px,#015cff 169.5px,#ff18fe 320.5px,#ff07d2 350.5px,#f0b 371.5px,#ff0095 418.5px,#ff0072 484.5px,#ff0054 578.5px)"></i><i style="background:linear-gradient(90deg,#0087ff 51.5px,#015bff 169.5px,#ff17fe 321.5px,#ff06d2 351.5px,#ff00bc 371.5px,#ff0096 418.5px,#ff0073 484.5px,#f05 577.5px)"></i><i style="background:linear-gradient(90deg,#0086ff 51.5px,#005aff 169.5px,#ff16fe 322.5px,#ff06d3 352.5px,#ff00bf 370.5px,#ff0098 417.5px,#ff0075 482.5px,#ff0056 576.5px)"></i><i style="background:linear-gradient(90deg,#0085ff 52.5px,#0259ff 170.5px,#ff15fe 323.5px,#ff05d3 353.5px,#ff00c0 370.5px,#f09 416.5px,#ff0076 480.5px,#ff0057 572.5px,#ff0056 575.5px)"></i><i style="background:linear-gradient(90deg,#0084ff 52.5px,#0258ff 170.5px,#ff14fe 324.5px,#ff03d2 355.5px,#ff00be 373.5px,#ff0098 420.5px,#ff0075 486.5px,#ff0057 574.5px)"></i><i style="background:linear-gradient(90deg,#0082ff 53.5px,#0157ff 170.5px,#ff13fe 325.5px,#ff02d2 356.5px,#ff00ad 393.5px,#f08 448.5px,#ff0067 525.5px,#ff0058 573.5px)"></i><i style="background:linear-gradient(90deg,#0081ff 53.5px,#0156ff 170.5px,#ff12fe 326.5px,#ff01d2 357.5px,#f0a 398.5px,#ff0085 454.5px,#ff0064 534.5px,#ff0059 572.5px)"></i><i style="background:linear-gradient(90deg,#0080ff 54.5px,#0155ff 170.5px,#ff11fe 327.5px,#ff00d3 358.5px,#f0a 399.5px,#ff0086 455.5px,#ff0065 535.5px,#ff005a 571.5px)"></i><i style="background:linear-gradient(90deg,#007fff 54.5px,#0054ff 170.5px,#ff10fe 328.5px,#ff00d3 359.5px,#f0a 401.5px,#ff0085 458.5px,#ff0064 539.5px,#ff005b 570.5px)"></i><i style="background:linear-gradient(90deg,#007dff 55.5px,#0253ff 171.5px,#ff0ffe 329.5px,#ff00d3 360.5px,#f0a 402.5px,#ff0086 459.5px,#ff0064 540.5px,#ff005c 569.5px)"></i><i style="background:linear-gradient(90deg,#007cff 55.5px,#0252ff 171.5px,#fe0eff 329.5px,#ff00d4 360.5px,#ff00ac 401.5px,#ff0087 457.5px,#f06 537.5px,#ff005d 568.5px)"></i><i style="background:linear-gradient(90deg,#007bff 56.5px,#0151ff 171.5px,#fe0dff 330.5px,#ff00d7 359.5px,#ff00ae 400.5px,#ff0089 456.5px,#ff0067 535.5px,#ff005e 567.5px)"></i><i style="background:linear-gradient(90deg,#007aff 56.5px,#0151ff 171.5px,#fc0cff 330.5px,#ff09f6 337.5px,#ff00d8 359.5px,#ff00af 400.5px,#ff008a 456.5px,#ff0069 534.5px,#ff005f 566.5px)"></i><i style="background:linear-gradient(90deg,#0079ff 57.5px,#0150ff 171.5px,#fb0cff 330.5px,#ff09fb 335.5px,#ff00dc 357.5px,#ff00b3 397.5px,#ff008d 451.5px,#ff006c 527.5px,#ff0060 565.5px)"></i><i style="background:linear-gradient(90deg,#0078ff 57.5px,#004fff 171.5px,#f90bff 330.5px,#ff09fd 335.5px,#ff00de 357.5px,#ff00b4 397.5px,#ff008e 451.5px,#ff006c 527.5px,#ff0060 564.5px)"></i><i style="background:linear-gradient(90deg,#07f 58.5px,#024eff 172.5px,#f90aff 331.5px,#ff07fb 337.5px,#ff00e0 356.5px,#ff00b7 395.5px,#ff0091 448.5px,#ff006f 522.5px,#ff0061 563.5px)"></i><i style="background:linear-gradient(90deg,#0076ff 58.5px,#024dff 172.5px,#f70aff 331.5px,#ff07fd 337.5px,#ff00e3 355.5px,#ff00b9 394.5px,#ff0093 446.5px,#ff0071 519.5px,#ff0062 562.5px)"></i><i style="background:linear-gradient(90deg,#0074ff 59.5px,#014cff 172.5px,#f709ff 332.5px,#ff06fd 338.5px,#ff00e4 355.5px,#ff00ba 394.5px,#ff0094 446.5px,#ff0071 519.5px,#ff0063 561.5px)"></i><i style="background:linear-gradient(90deg,#0073ff 60.5px,#014bff 172.5px,#f608ff 332.5px,#ff05fd 339.5px,#ff00e7 354.5px,#ff00bd 392.5px,#ff0097 443.5px,#ff0074 514.5px,#ff0064 560.5px)"></i><i style="background:linear-gradient(90deg,#0072ff 60.5px,#014bff 172.5px,#f408ff 332.5px,#ff04fd 340.5px,#ff00e7 355.5px,#ff00bd 393.5px,#ff0097 444.5px,#ff0074 515.5px,#ff0065 559.5px)"></i><i style="background:linear-gradient(90deg,#0071ff 61.5px,#004aff 172.5px,#f307ff 332.5px,#ff03fd 341.5px,#ff00e0 362.5px,#ff00b7 402.5px,#ff0090 457.5px,#ff006e 534.5px,#f06 558.5px)"></i><i style="background:linear-gradient(90deg,#0070ff 61.5px,#0249ff 173.5px,#f107ff 332.5px,#ff02fd 342.5px,#ff00d1 376.5px,#ff00a9 421.5px,#ff0084 483.5px,#ff0067 557.5px)"></i><i style="background:linear-gradient(90deg,#006fff 62.5px,#0248ff 173.5px,#f006ff 332.5px,#ff01fd 343.5px,#ff00d1 377.5px,#ff00a9 422.5px,#ff0084 484.5px,#ff0068 556.5px)"></i><i style="background:linear-gradient(90deg,#006eff 62.5px,#0147ff 173.5px,#ee06ff 332.5px,#ff00fd 344.5px,#ff00d1 378.5px,#ff00a9 423.5px,#ff0084 485.5px,#ff0069 555.5px)"></i><i style="background:linear-gradient(90deg,#006dff 63.5px,#0147ff 173.5px,#ed05ff 332.5px,#ff00fd 345.5px,#ff00d1 379.5px,#ff00a9 425.5px,#ff0084 487.5px,#ff006a 554.5px)"></i><i style="background:linear-gradient(90deg,#006cff 63.5px,#0146ff 173.5px,#eb05ff 332.5px,#ff00fd 346.5px,#ff00d2 380.5px,#ff00a9 426.5px,#ff0084 489.5px,#ff006b 554.5px)"></i><i style="background:linear-gradient(90deg,#006bff 64.5px,#0045ff 173.5px,#ea04ff 332.5px,#ff00fd 347.5px,#ff00d1 382.5px,#ff00a9 428.5px,#ff0084 491.5px,#ff006c 553.5px)"></i><i style="background:linear-gradient(90deg,#006aff 64.5px,#0244ff 174.5px,#ea03ff 333.5px,#ff00fd 348.5px,#ff00d1 383.5px,#ff00a9 429.5px,#ff0084 492.5px,#ff006d 552.5px)"></i><i style="background:linear-gradient(90deg,#0069ff 65.5px,#0243ff 174.5px,#e903ff 333.5px,#ff00fd 349.5px,#ff00d1 384.5px,#ff00a8 431.5px,#ff0084 495.5px,#ff006e 551.5px)"></i><i style="background:linear-gradient(90deg,#0068ff 65.5px,#0143ff 174.5px,#e603ff 332.5px,#ff00fd 350.5px,#ff00d1 385.5px,#ff00a9 432.5px,#ff0084 496.5px,#ff006f 550.5px)"></i><i style="background:linear-gradient(90deg,#0067ff 66.5px,#0142ff 174.5px,#e402ff 332.5px,#ff00fd 351.5px,#ff00d1 386.5px,#ff00a9 433.5px,#ff0084 497.5px,#ff0070 549.5px)"></i><i style="background:linear-gradient(90deg,#06f 66.5px,#0141ff 174.5px,#e302ff 332.5px,#ff00fd 352.5px,#ff00d2 387.5px,#ff00a9 434.5px,#ff0085 498.5px,#ff0071 548.5px)"></i><i style="background:linear-gradient(90deg,#0065ff 67.5px,#0041ff 174.5px,#e201ff 332.5px,#ff00fd 353.5px,#ff00d1 389.5px,#ff00a8 437.5px,#ff0084 502.5px,#ff0072 547.5px)"></i><i style="background:linear-gradient(90deg,#0064ff 67.5px,#0240ff 175.5px,#e900ff 338.5px,#ff00fd 354.5px,#ff00d1 390.5px,#ff00a8 438.5px,#ff0084 503.5px,#ff0073 546.5px)"></i><i style="background:linear-gradient(90deg,#0063ff 68.5px,#023fff 175.5px,#e600ff 337.5px,#ff00fd 355.5px,#ff00d1 391.5px,#ff00a9 439.5px,#ff0084 505.5px,#ff0074 545.5px)"></i><i style="background:linear-gradient(90deg,#0062ff 68.5px,#013eff 175.5px,#e300ff 336.5px,#ff00fd 356.5px,#ff00d1 392.5px,#ff00a9 440.5px,#ff0084 506.5px,#ff0075 544.5px)"></i><i style="background:linear-gradient(90deg,#0061ff 69.5px,#013eff 175.5px,#e100ff 335.5px,#ff00fd 357.5px,#ff00d2 393.5px,#ff00a9 441.5px,#ff0085 507.5px,#ff0076 543.5px)"></i><i style="background:linear-gradient(90deg,#0060ff 69.5px,#013dff 175.5px,#de00ff 334.5px,#ff00fd 358.5px,#ff00d1 395.5px,#ff00a8 444.5px,#ff0084 511.5px,#f07 542.5px)"></i><i style="background:linear-gradient(90deg,#005fff 70.5px,#013cff 175.5px,#db00ff 333.5px,#ff00fd 359.5px,#ff00d1 396.5px,#ff00a8 445.5px,#ff0084 512.5px,#ff0078 541.5px)"></i><i style="background:linear-gradient(90deg,#005eff 71.5px,#023bff 176.5px,#d900ff 332.5px,#ff00fd 360.5px,#ff00d1 397.5px,#ff00a9 446.5px,#ff0084 513.5px,#ff0079 540.5px)"></i><i style="background:linear-gradient(90deg,#005dff 71.5px,#023bff 176.5px,#d600ff 331.5px,#ff00fd 361.5px,#ff00d1 398.5px,#ff00a9 447.5px,#ff0084 514.5px,#ff007a 539.5px)"></i><i style="background:linear-gradient(90deg,#005cff 72.5px,#013aff 176.5px,#d500ff 331.5px,#ff00fd 362.5px,#ff00d1 399.5px,#ff00a9 448.5px,#ff0085 515.5px,#ff007b 538.5px)"></i><i style="background:linear-gradient(90deg,#005cff 72.5px,#0139ff 176.5px,#d200ff 330.5px,#ff00fd 363.5px,#ff00d2 400.5px,#ff00a9 450.5px,#ff0084 518.5px,#ff007c 537.5px)"></i><i style="background:linear-gradient(90deg,#005bff 73.5px,#0139ff 176.5px,#cf00ff 329.5px,#ff00fd 364.5px,#ff00d1 402.5px,#ff00a9 452.5px,#ff0084 520.5px,#ff007e 536.5px)"></i><i style="background:linear-gradient(90deg,#005aff 74.5px,#0138ff 176.5px,#cd00ff 328.5px,#ff00fd 365.5px,#ff00d1 403.5px,#ff00a9 453.5px,#ff0084 522.5px,#ff007f 535.5px)"></i><i style="background:linear-gradient(90deg,#0059ff 74.5px,#0237ff 177.5px,#ca00ff 327.5px,#ff00fd 366.5px,#ff00d1 404.5px,#ff00a9 454.5px,#ff0084 523.5px,#ff0080 534.5px)"></i><i style="background:linear-gradient(90deg,#0058ff 75.5px,#0237ff 177.5px,#c800ff 326.5px,#ff00fd 367.5px,#ff00d1 405.5px,#ff00a9 456.5px,#ff0084 525.5px,#ff0081 533.5px)"></i><i style="background:linear-gradient(90deg,#0057ff 75.5px,#0136ff 177.5px,#c500ff 325.5px,#ff00fd 368.5px,#ff00d2 406.5px,#ff00a9 457.5px,#ff0084 526.5px,#ff0082 532.5px)"></i><i style="background:linear-gradient(90deg,#0056ff 76.5px,#0135ff 177.5px,#c300ff 324.5px,#ff00fd 369.5px,#ff00d2 407.5px,#ff00a9 458.5px,#ff0084 528.5px,#ff0083 531.5px)"></i><i style="background:linear-gradient(90deg,#05f 76.5px,#0135ff 177.5px,#c000ff 323.5px,#ff00fd 370.5px,#ff00d1 409.5px,#ff00a9 460.5px,#ff0084 530.5px)"></i><i style="background:linear-gradient(90deg,#0054ff 77.5px,#0234ff 178.5px,#be00ff 322.5px,#ff00fd 371.5px,#ff00d1 410.5px,#ff00a8 462.5px,#ff0085 529.5px)"></i><i style="background:linear-gradient(90deg,#0054ff 77.5px,#0233ff 178.5px,#bc00ff 321.5px,#ff00fe 372.5px,#ff00d1 411.5px,#ff00a9 463.5px,#ff0087 528.5px)"></i><i style="background:linear-gradient(90deg,#0053ff 78.5px,#0233ff 178.5px,#b900ff 320.5px,#ff00fe 373.5px,#ff00d1 412.5px,#ff00a9 464.5px,#f08 527.5px)"></i><i style="background:linear-gradient(90deg,#0052ff 78.5px,#0132ff 178.5px,#b700ff 319.5px,#ff00fe 374.5px,#ff00d2 413.5px,#ff00a9 465.5px,#f08 527.5px)"></i><i style="background:linear-gradient(90deg,#0051ff 79.5px,#0132ff 178.5px,#b500ff 318.5px,#ff00fe 375.5px,#ff00d2 414.5px,#ff00a9 466.5px,#ff008a 526.5px)"></i><i style="background:linear-gradient(90deg,#0050ff 80.5px,#0131ff 178.5px,#b200ff 317.5px,#ff00fe 376.5px,#ff00d1 416.5px,#ff00a8 469.5px,#ff008b 525.5px)"></i><i style="background:linear-gradient(90deg,#0050ff 80.5px,#0230ff 179.5px,#b000ff 316.5px,#ff00fe 377.5px,#ff00d1 417.5px,#ff00a9 470.5px,#ff008c 524.5px)"></i><i style="background:linear-gradient(90deg,#004fff 81.5px,#0230ff 179.5px,#ae00ff 315.5px,#ff00fe 378.5px,#ff00d1 418.5px,#ff00a9 471.5px,#ff008d 523.5px)"></i><i style="background:linear-gradient(90deg,#004eff 81.5px,#022fff 179.5px,#ac00ff 314.5px,#ff00fe 379.5px,#ff00d2 419.5px,#ff00a9 472.5px,#ff008e 522.5px)"></i><i style="background:linear-gradient(90deg,#004dff 82.5px,#012fff 179.5px,#a900ff 313.5px,#ff00fe 380.5px,#ff00d2 420.5px,#ff00a9 473.5px,#ff0090 521.5px)"></i><i style="background:linear-gradient(90deg,#004cff 83.5px,#012eff 179.5px,#a700ff 312.5px,#ff00fe 381.5px,#ff00d2 421.5px,#ff00a9 475.5px,#ff0091 520.5px)"></i><i style="background:linear-gradient(90deg,#004cff 83.5px,#012eff 179.5px,#a500ff 311.5px,#ff00fe 382.5px,#ff00d1 423.5px,#ff00a9 477.5px,#ff0092 519.5px)"></i><i style="background:linear-gradient(90deg,#004bff 84.5px,#022dff 180.5px,#a300ff 310.5px,#ff00fe 383.5px,#ff00d1 424.5px,#ff00a9 478.5px,#ff0093 518.5px)"></i><i style="background:linear-gradient(90deg,#004aff 84.5px,#022cff 180.5px,#a100ff 309.5px,#ff00fe 384.5px,#ff00d1 425.5px,#ff00a9 479.5px,#ff0094 517.5px)"></i><i style="background:linear-gradient(90deg,#0049ff 85.5px,#022cff 180.5px,#9f00ff 308.5px,#ff00fe 385.5px,#ff00d2 426.5px,#ff00a9 481.5px,#ff0096 516.5px)"></i><i style="background:linear-gradient(90deg,#0048ff 86.5px,#012bff 180.5px,#9d00ff 307.5px,#ff00fe 386.5px,#ff00d2 427.5px,#ff00a9 482.5px,#ff0097 515.5px)"></i><i style="background:linear-gradient(90deg,#0048ff 86.5px,#012bff 180.5px,#9a00ff 306.5px,#ff00fe 387.5px,#ff00d2 428.5px,#ff00a9 483.5px,#ff0098 514.5px)"></i><i style="background:linear-gradient(90deg,#0047ff 87.5px,#012aff 180.5px,#9800ff 305.5px,#ff00fe 388.5px,#ff00d1 430.5px,#ff00a9 485.5px,#ff009a 513.5px)"></i><i style="background:linear-gradient(90deg,#0046ff 87.5px,#0229ff 181.5px,#9800ff 305.5px,#ff00fe 389.5px,#ff00d1 431.5px,#ff00a9 487.5px,#ff009b 512.5px)"></i><i style="background:linear-gradient(90deg,#0045ff 88.5px,#0229ff 181.5px,#9600ff 304.5px,#ff00fe 390.5px,#ff00d1 432.5px,#ff00a9 488.5px,#ff009c 511.5px)"></i><i style="background:linear-gradient(90deg,#04f 89.5px,#0228ff 181.5px,#9400ff 303.5px,#ff00fe 391.5px,#ff00d2 433.5px,#ff00a9 489.5px,#ff009d 510.5px)"></i><i style="background:linear-gradient(90deg,#04f 89.5px,#0128ff 181.5px,#9200ff 302.5px,#ff00fe 392.5px,#ff00d2 434.5px,#ff00a9 490.5px,#ff009f 509.5px)"></i><i style="background:linear-gradient(90deg,#0043ff 90.5px,#0127ff 181.5px,#9000ff 301.5px,#ff00fe 393.5px,#ff00d2 435.5px,#f0a 491.5px,#ff00a0 508.5px)"></i><i style="background:linear-gradient(90deg,#0042ff 90.5px,#0127ff 181.5px,#8e00ff 300.5px,#ff00fe 394.5px,#ff00d1 437.5px,#ff00a9 494.5px,#ff00a1 507.5px)"></i><i style="background:linear-gradient(90deg,#0042ff 91.5px,#0226ff 182.5px,#8c00ff 299.5px,#ff00fe 395.5px,#ff00d1 438.5px,#ff00a9 495.5px,#ff00a3 506.5px)"></i><i style="background:linear-gradient(90deg,#0041ff 92.5px,#0226ff 182.5px,#8a00ff 298.5px,#ff00fe 396.5px,#ff00d2 439.5px,#ff00a9 496.5px,#ff00a4 505.5px)"></i><i style="background:linear-gradient(90deg,#0040ff 92.5px,#0225ff 182.5px,#80f 297.5px,#ff00fe 397.5px,#ff00d2 440.5px,#ff00a9 497.5px,#ff00a5 504.5px)"></i><i style="background:linear-gradient(90deg,#003fff 93.5px,#0125ff 182.5px,#8600ff 296.5px,#ff00fe 398.5px,#ff00d2 441.5px,#f0a 498.5px,#ff00a7 503.5px)"></i><i style="background:linear-gradient(90deg,#003fff 93.5px,#0124ff 182.5px,#8400ff 295.5px,#ff00fe 399.5px,#ff00d2 442.5px,#ff00a9 500.5px,#ff00a8 502.5px)"></i><i style="background:linear-gradient(90deg,#003eff 94.5px,#0124ff 182.5px,#8200ff 294.5px,#ff00fe 400.5px,#ff00d1 444.5px,#ff00a9 501.5px)"></i><i style="background:linear-gradient(90deg,#003eff 94.5px,#0223ff 183.5px,#8000ff 293.5px,#ff00fe 401.5px,#ff00d1 445.5px,#ff00ab 500.5px)"></i><i style="background:linear-gradient(90deg,#003dff 95.5px,#0223ff 183.5px,#7f00ff 292.5px,#ff00fe 402.5px,#ff00d2 446.5px,#ff00ac 500.5px)"></i><i style="background:linear-gradient(90deg,#003cff 95.5px,#0222ff 183.5px,#7d00ff 291.5px,#ff00fe 403.5px,#ff00d2 447.5px,#ff00ad 499.5px)"></i><i style="background:linear-gradient(90deg,#003bff 96.5px,#0122ff 183.5px,#7b00ff 290.5px,#ff00fe 404.5px,#ff00d2 448.5px,#ff00ae 498.5px)"></i><i style="background:linear-gradient(90deg,#003bff 96.5px,#0121ff 183.5px,#7900ff 289.5px,#ff00fe 405.5px,#ff00d2 449.5px,#ff00b0 497.5px)"></i><i style="background:linear-gradient(90deg,#003aff 97.5px,#0121ff 183.5px,#70f 288.5px,#ff00fe 406.5px,#ff00d1 451.5px,#ff00b1 496.5px)"></i><i style="background:linear-gradient(90deg,#0039ff 98.5px,#0220ff 184.5px,#7600ff 287.5px,#ff00fe 407.5px,#ff00d2 452.5px,#ff00b3 495.5px)"></i><i style="background:linear-gradient(90deg,#0039ff 98.5px,#0220ff 184.5px,#7500ff 287.5px,#ff00fe 408.5px,#ff00d2 453.5px,#ff00b4 494.5px)"></i><i style="background:linear-gradient(90deg,#0038ff 99.5px,#021fff 184.5px,#7300ff 286.5px,#ff00fe 409.5px,#ff00d2 454.5px,#ff00b6 493.5px)"></i><i style="background:linear-gradient(90deg,#0038ff 99.5px,#011fff 184.5px,#7200ff 285.5px,#ff00fe 410.5px,#ff00d2 455.5px,#ff00b7 492.5px)"></i><i style="background:linear-gradient(90deg,#0037ff 100.5px,#011eff 184.5px,#7000ff 284.5px,#ff00fe 411.5px,#ff00d2 456.5px,#ff00b9 491.5px)"></i><i style="background:linear-gradient(90deg,#0036ff 101.5px,#011eff 184.5px,#6e00ff 283.5px,#ff00fe 412.5px,#ff00d1 458.5px,#ff00ba 490.5px)"></i><i style="background:linear-gradient(90deg,#0036ff 101.5px,#021dff 185.5px,#6c00ff 282.5px,#ff00fe 413.5px,#ff00d2 459.5px,#ff00bc 489.5px)"></i><i style="background:linear-gradient(90deg,#0035ff 102.5px,#021dff 185.5px,#6b00ff 281.5px,#ff00fe 414.5px,#ff00d2 460.5px,#ff00bd 488.5px)"></i><i style="background:linear-gradient(90deg,#0034ff 102.5px,#021dff 185.5px,#6900ff 280.5px,#ff00fe 415.5px,#ff00d2 461.5px,#ff00bf 487.5px)"></i><i style="background:linear-gradient(90deg,#0034ff 103.5px,#011cff 185.5px,#6800ff 279.5px,#ff00fe 416.5px,#ff00d2 462.5px,#ff00c0 486.5px)"></i><i style="background:linear-gradient(90deg,#03f 104.5px,#011cff 185.5px,#60f 278.5px,#ff00fe 417.5px,#ff00d2 463.5px,#ff00c2 485.5px)"></i><i style="background:linear-gradient(90deg,#0032ff 104.5px,#011bff 185.5px,#6400ff 277.5px,#ff00fe 418.5px,#ff00d1 465.5px,#ff00c3 484.5px)"></i><i style="background:linear-gradient(90deg,#0032ff 105.5px,#021bff 186.5px,#6300ff 276.5px,#ff00fe 419.5px,#ff00d2 466.5px,#ff00c5 483.5px)"></i><i style="background:linear-gradient(90deg,#0031ff 106.5px,#021aff 186.5px,#6100ff 275.5px,#ff00fe 420.5px,#ff00d2 467.5px,#ff00c7 482.5px)"></i><i style="background:linear-gradient(90deg,#0030ff 106.5px,#021aff 186.5px,#6000ff 274.5px,#ff00fd 422.5px,#ff00d1 469.5px,#ff00c8 481.5px)"></i><i style="background:linear-gradient(90deg,#0030ff 107.5px,#0119ff 186.5px,#5e00ff 273.5px,#ff00fd 423.5px,#ff00d0 471.5px,#ff00ca 480.5px)"></i><i style="background:linear-gradient(90deg,#002fff 108.5px,#0119ff 186.5px,#5c00ff 272.5px,#ff00fd 424.5px,#ff00d1 472.5px,#ff00cb 479.5px)"></i><i style="background:linear-gradient(90deg,#002fff 108.5px,#0119ff 186.5px,#5b00ff 271.5px,#ff00fd 425.5px,#ff00d1 473.5px,#ff00cd 478.5px)"></i><i style="background:linear-gradient(90deg,#002eff 109.5px,#0218ff 187.5px,#5900ff 270.5px,#ff00fd 426.5px,#ff00d1 474.5px,#ff00cf 477.5px)"></i><i style="background:linear-gradient(90deg,#002dff 110.5px,#0218ff 187.5px,#5900ff 270.5px,#ff00fd 427.5px,#ff00d1 475.5px,#ff00d0 476.5px)"></i><i style="background:linear-gradient(90deg,#002dff 110.5px,#0217ff 187.5px,#5700ff 269.5px,#ff00fd 428.5px,#ff00d2 475.5px)"></i><i style="background:linear-gradient(90deg,#002cff 111.5px,#0117ff 187.5px,#5600ff 268.5px,#ff00fd 429.5px,#ff00d4 474.5px)"></i><i style="background:linear-gradient(90deg,#002cff 111.5px,#0117ff 187.5px,#5400ff 267.5px,#ff00fd 430.5px,#ff00d5 473.5px)"></i><i style="background:linear-gradient(90deg,#002bff 112.5px,#0116ff 187.5px,#5300ff 266.5px,#ff00fd 431.5px,#ff00d6 473.5px)"></i><i style="background:linear-gradient(90deg,#002aff 113.5px,#0215ff 188.5px,#5100ff 265.5px,#ff00fd 432.5px,#ff00d8 472.5px)"></i><i style="background:linear-gradient(90deg,#002aff 113.5px,#0215ff 188.5px,#5000ff 264.5px,#ff00fd 433.5px,#ff00da 471.5px)"></i><i style="background:linear-gradient(90deg,#0029ff 114.5px,#0215ff 188.5px,#4f00ff 263.5px,#ff00fd 434.5px,#ff00db 470.5px)"></i><i style="background:linear-gradient(90deg,#0029ff 114.5px,#0114ff 188.5px,#4d00ff 262.5px,#ff00fd 435.5px,#f0d 469.5px)"></i><i style="background:linear-gradient(90deg,#0028ff 115.5px,#0114ff 188.5px,#4c00ff 261.5px,#ff00fd 436.5px,#ff00df 468.5px)"></i><i style="background:linear-gradient(90deg,#0027ff 116.5px,#0114ff 188.5px,#4a00ff 260.5px,#ff00fd 437.5px,#ff00e1 467.5px)"></i><i style="background:linear-gradient(90deg,#0027ff 116.5px,#0213ff 189.5px,#4900ff 259.5px,#ff00fd 438.5px,#ff00e3 466.5px)"></i><i style="background:linear-gradient(90deg,#0026ff 117.5px,#0213ff 189.5px,#4700ff 258.5px,#ff00fd 439.5px,#ff00e4 465.5px)"></i><i style="background:linear-gradient(90deg,#0026ff 118.5px,#0212ff 189.5px,#4600ff 257.5px,#ff00fd 440.5px,#ff00e6 464.5px)"></i><i style="background:linear-gradient(90deg,#0025ff 118.5px,#0112ff 189.5px,#4500ff 256.5px,#ff00fd 441.5px,#ff00e8 463.5px)"></i><i style="background:linear-gradient(90deg,#0025ff 119.5px,#0112ff 189.5px,#4300ff 255.5px,#ff00fd 442.5px,#ff00ea 462.5px)"></i><i style="background:linear-gradient(90deg,#0024ff 120.5px,#0111ff 189.5px,#4200ff 254.5px,#ff00fd 443.5px,#ff00ec 461.5px)"></i><i style="background:linear-gradient(90deg,#0024ff 120.5px,#0211ff 190.5px,#4100ff 253.5px,#ff00fd 444.5px,#f0e 460.5px)"></i><i style="background:linear-gradient(90deg,#0023ff 121.5px,#0210ff 190.5px,#3f00ff 252.5px,#ff00fd 445.5px,#ff00f0 459.5px)"></i><i style="background:linear-gradient(90deg,#02f 122.5px,#0210ff 190.5px,#3e00ff 251.5px,#ff00fd 446.5px,#ff00f1 458.5px)"></i><i style="background:linear-gradient(90deg,#02f 122.5px,#0110ff 190.5px,#3d00ff 250.5px,#ff00fd 447.5px,#ff00f3 457.5px)"></i><i style="background:linear-gradient(90deg,#0021ff 123.5px,#010fff 190.5px,#3b00ff 249.5px,#ff00fd 448.5px,#ff00f5 456.5px)"></i><i style="background:linear-gradient(90deg,#0021ff 124.5px,#010fff 190.5px,#3b00ff 249.5px,#ff00fd 449.5px,#ff00f7 455.5px)"></i><i style="background:linear-gradient(90deg,#0020ff 124.5px,#020eff 191.5px,#3a00ff 248.5px,#ff00fd 450.5px,#ff00f9 454.5px)"></i><i style="background:linear-gradient(90deg,#0020ff 125.5px,#020eff 191.5px,#3800ff 247.5px,#ff00fd 451.5px,#ff00fb 453.5px)"></i><i style="background:linear-gradient(90deg,#001fff 126.5px,#020eff 191.5px,#3700ff 246.5px,#ff00fd 452.5px)"></i><i style="background:linear-gradient(90deg,#001fff 126.5px,#010eff 191.5px,#3600ff 245.5px,#f0f 451.5px)"></i><i style="background:linear-gradient(90deg,#001eff 127.5px,#010dff 191.5px,#3400ff 244.5px,#fd00ff 450.5px)"></i><i style="background:linear-gradient(90deg,#001eff 128.5px,#010dff 191.5px,#30f 243.5px,#fb00ff 449.5px)"></i><i style="background:linear-gradient(90deg,#001dff 128.5px,#020cff 192.5px,#3200ff 242.5px,#f900ff 448.5px)"></i><i style="background:linear-gradient(90deg,#001dff 129.5px,#020cff 192.5px,#3100ff 241.5px,#f700ff 447.5px)"></i><i style="background:linear-gradient(90deg,#001cff 130.5px,#020cff 192.5px,#2f00ff 240.5px,#f500ff 446.5px)"></i><i style="background:linear-gradient(90deg,#001cff 130.5px,#010bff 192.5px,#2e00ff 239.5px,#f400ff 446.5px)"></i><i style="background:linear-gradient(90deg,#001bff 131.5px,#010bff 192.5px,#2e00ff 239.5px,#f200ff 445.5px)"></i><i style="background:linear-gradient(90deg,#001bff 132.5px,#010bff 192.5px,#2d00ff 238.5px,#f000ff 444.5px)"></i><i style="background:linear-gradient(90deg,#001aff 132.5px,#020aff 193.5px,#2c00ff 237.5px,#e0f 443.5px)"></i><i style="background:linear-gradient(90deg,#001aff 133.5px,#020aff 193.5px,#2a00ff 236.5px,#ec00ff 442.5px)"></i><i style="background:linear-gradient(90deg,#0019ff 134.5px,#020aff 193.5px,#2900ff 235.5px,#ea00ff 441.5px)"></i><i style="background:linear-gradient(90deg,#0019ff 134.5px,#0109ff 193.5px,#2800ff 234.5px,#e800ff 440.5px)"></i><i style="background:linear-gradient(90deg,#0018ff 135.5px,#0109ff 193.5px,#2700ff 233.5px,#e600ff 439.5px)"></i><i style="background:linear-gradient(90deg,#0018ff 136.5px,#0208ff 194.5px,#2600ff 233.5px,#e400ff 438.5px)"></i><i style="background:linear-gradient(90deg,#0017ff 136.5px,#0208ff 194.5px,#2500ff 232.5px,#e300ff 437.5px)"></i><i style="background:linear-gradient(90deg,#0017ff 137.5px,#0208ff 194.5px,#2400ff 231.5px,#e100ff 436.5px)"></i><i style="background:linear-gradient(90deg,#0016ff 137.5px,#0208ff 194.5px,#2300ff 230.5px,#df00ff 435.5px)"></i><i style="background:linear-gradient(90deg,#0016ff 138.5px,#0107ff 194.5px,#20f 229.5px,#d0f 434.5px)"></i><i style="background:linear-gradient(90deg,#0015ff 139.5px,#0107ff 194.5px,#20f 229.5px,#db00ff 433.5px)"></i><i style="background:linear-gradient(90deg,#0015ff 140.5px,#0206ff 195.5px,#2000ff 228.5px,#da00ff 432.5px)"></i><i style="background:linear-gradient(90deg,#0014ff 140.5px,#0206ff 195.5px,#1f00ff 227.5px,#d800ff 431.5px)"></i><i style="background:linear-gradient(90deg,#0014ff 141.5px,#0206ff 195.5px,#1e00ff 226.5px,#d600ff 430.5px)"></i><i style="background:linear-gradient(90deg,#0013ff 142.5px,#0206ff 195.5px,#1e00ff 226.5px,#d400ff 429.5px)"></i><i style="background:linear-gradient(90deg,#0013ff 143.5px,#0105ff 195.5px,#1d00ff 225.5px,#d300ff 428.5px)"></i><i style="background:linear-gradient(90deg,#0012ff 143.5px,#0105ff 195.5px,#1d00ff 225.5px,#d100ff 427.5px)"></i><i style="background:linear-gradient(90deg,#0012ff 144.5px,#0204ff 196.5px,#1c00ff 225.5px,#cf00ff 426.5px)"></i><i style="background:linear-gradient(90deg,#01f 145.5px,#0204ff 196.5px,#1b00ff 224.5px,#cd00ff 425.5px)"></i><i style="background:linear-gradient(90deg,#01f 145.5px,#0204ff 196.5px,#1b00ff 224.5px,#c0f 424.5px)"></i><i style="background:linear-gradient(90deg,#0010ff 146.5px,#0204ff 196.5px,#1c00ff 225.5px,#ca00ff 423.5px)"></i><i style="background:linear-gradient(90deg,#0010ff 147.5px,#0103ff 196.5px,#1b00ff 225.5px,#c800ff 422.5px)"></i><i style="background:linear-gradient(90deg,#000fff 148.5px,#0103ff 196.5px,#1d00ff 227.5px,#c700ff 421.5px)"></i><i style="background:linear-gradient(90deg,#000fff 148.5px,#0203ff 197.5px,#2900ff 241.5px,#c500ff 420.5px)"></i><i style="background:linear-gradient(90deg,#000fff 149.5px,#0202ff 197.5px,#4300ff 272.5px,#c400ff 419.5px)"></i><i style="background:linear-gradient(90deg,#000eff 150.5px,#0202ff 197.5px,#c200ff 418.5px)"></i><i style="background:linear-gradient(90deg,#000dff 151.5px,#0202ff 197.5px,#c100ff 418.5px)"></i><i style="background:linear-gradient(90deg,#000dff 151.5px,#0101ff 197.5px,#c000ff 417.5px)"></i><i style="background:linear-gradient(90deg,#000dff 152.5px,#0101ff 197.5px,#be00ff 416.5px)"></i><i style="background:linear-gradient(90deg,#000cff 153.5px,#0201ff 198.5px,#bc00ff 415.5px)"></i><i style="background:linear-gradient(90deg,#000cff 154.5px,#0200ff 198.5px,#b0f 414.5px)"></i><i style="background:linear-gradient(90deg,#000bff 154.5px,#0200ff 198.5px,#b900ff 413.5px)"></i><i style="background:linear-gradient(90deg,#000bff 155.5px,#0200ff 198.5px,#b800ff 412.5px)"></i><i style="background:linear-gradient(90deg,#000aff 156.5px,#0100ff 198.5px,#b600ff 411.5px)"></i><i style="background:linear-gradient(90deg,#000aff 156.5px,#0100ff 198.5px,#b500ff 410.5px)"></i><i style="background:linear-gradient(90deg,#000aff 157.5px,#0200ff 199.5px,#b300ff 409.5px)"></i><i style="background:linear-gradient(90deg,#0009ff 158.5px,#0200ff 199.5px,#b200ff 408.5px)"></i><i style="background:linear-gradient(90deg,#0009ff 159.5px,#0200ff 199.5px,#b000ff 407.5px)"></i><i style="background:linear-gradient(90deg,#0008ff 159.5px,#0200ff 199.5px,#af00ff 406.5px)"></i><i style="background:linear-gradient(90deg,#0008ff 160.5px,#0100ff 199.5px,#ad00ff 405.5px)"></i><i style="background:linear-gradient(90deg,#0007ff 161.5px,#0200ff 200.5px,#ac00ff 404.5px)"></i><i style="background:linear-gradient(90deg,#0007ff 162.5px,#0100ff 199.5px,#a0f 403.5px)"></i><i style="background:linear-gradient(90deg,#0006ff 163.5px,#00f 198.5px,#a900ff 402.5px)"></i><i style="background:linear-gradient(90deg,#0006ff 163.5px,#00f 198.5px,#a700ff 401.5px)"></i><i style="background:linear-gradient(90deg,#0005ff 164.5px,#00f 197.5px,#a600ff 400.5px)"></i><i style="background:linear-gradient(90deg,#0005ff 165.5px,#00f 197.5px,#a500ff 399.5px)"></i><i style="background:linear-gradient(90deg,#0004ff 166.5px,#00f 197.5px,#a300ff 398.5px)"></i><i style="background:linear-gradient(90deg,#0004ff 167.5px,#00f 198.5px,#a200ff 397.5px)"></i><i style="background:linear-gradient(90deg,#0003ff 168.5px,#0200ff 201.5px,#a000ff 396.5px)"></i><i style="background:linear-gradient(90deg,#0003ff 168.5px,#0200ff 201.5px,#9f00ff 395.5px)"></i><i style="background:linear-gradient(90deg,#0003ff 169.5px,#0200ff 201.5px,#9d00ff 394.5px)"></i><i style="background:linear-gradient(90deg,#0002ff 170.5px,#0100ff 201.5px,#9c00ff 393.5px)"></i><i style="background:linear-gradient(90deg,#0002ff 171.5px,#0200ff 202.5px,#9b00ff 392.5px)"></i><i style="background:linear-gradient(90deg,#0001ff 172.5px,#0200ff 202.5px,#90f 391.5px)"></i><i style="background:linear-gradient(90deg,#0001ff 173.5px,#0200ff 202.5px,#90f 391.5px)"></i><i style="background:linear-gradient(90deg,#00f 173.5px,#0200ff 202.5px,#9700ff 390.5px)"></i><i style="background:linear-gradient(90deg,#00f 174.5px,#0200ff 202.5px,#9600ff 389.5px)"></i><i style="background:linear-gradient(90deg,#00f 175.5px,#0100ff 202.5px,#9500ff 388.5px)"></i><i style="background:linear-gradient(90deg,#00f 176.5px,#0200ff 203.5px,#9300ff 387.5px)"></i><i style="background:linear-gradient(90deg,#00f 177.5px,#0200ff 203.5px,#9200ff 386.5px)"></i><i style="background:linear-gradient(90deg,#00f 178.5px,#0200ff 203.5px,#9100ff 385.5px)"></i><i style="background:linear-gradient(90deg,#00f 178.5px,#0200ff 203.5px,#9000ff 384.5px)"></i><i style="background:linear-gradient(90deg,#00f 179.5px,#0200ff 203.5px,#8e00ff 383.5px)"></i><i style="background:linear-gradient(90deg,#00f 180.5px,#0200ff 204.5px,#8d00ff 382.5px)"></i><i style="background:linear-gradient(90deg,#00f 181.5px,#0200ff 204.5px,#8c00ff 381.5px)"></i><i style="background:linear-gradient(90deg,#00f 182.5px,#0200ff 204.5px,#8a00ff 380.5px)"></i><i style="background:linear-gradient(90deg,#00f 182.5px,#0200ff 204.5px,#8900ff 379.5px)"></i><i style="background:linear-gradient(90deg,#00f 183.5px,#0200ff 204.5px,#80f 378.5px)"></i><i style="background:linear-gradient(90deg,#00f 184.5px,#0200ff 204.5px,#8700ff 377.5px)"></i><i style="background:linear-gradient(90deg,#00f 185.5px,#0200ff 205.5px,#8500ff 376.5px)"></i><i style="background:linear-gradient(90deg,#00f 186.5px,#0200ff 205.5px,#8400ff 375.5px)"></i><i style="background:linear-gradient(90deg,#00f 187.5px,#0200ff 205.5px,#8300ff 374.5px)"></i><i style="background:linear-gradient(90deg,#00f 188.5px,#0200ff 205.5px,#8200ff 373.5px)"></i><i style="background:linear-gradient(90deg,#00f 189.5px,#0200ff 205.5px,#8100ff 372.5px)"></i><i style="background:linear-gradient(90deg,#00f 190.5px,#0200ff 206.5px,#7f00ff 371.5px)"></i><i style="background:linear-gradient(90deg,#00f 190.5px,#0200ff 206.5px,#7e00ff 370.5px)"></i><i style="background:linear-gradient(90deg,#00f 191.5px,#0200ff 206.5px,#7d00ff 369.5px)"></i><i style="background:linear-gradient(90deg,#00f 192.5px,#0200ff 206.5px,#7c00ff 368.5px)"></i><i style="background:linear-gradient(90deg,#00f 193.5px,#0300ff 207.5px,#7b00ff 367.5px)"></i><i style="background:linear-gradient(90deg,#00f 194.5px,#0300ff 207.5px,#7900ff 366.5px)"></i><i style="background:linear-gradient(90deg,#00f 195.5px,#0200ff 207.5px,#7800ff 365.5px)"></i><i style="background:linear-gradient(90deg,#00f 196.5px,#0200ff 207.5px,#70f 364.5px)"></i><i style="background:linear-gradient(90deg,#00f 197.5px,#0300ff 208.5px,#70f 364.5px)"></i><i style="background:linear-gradient(90deg,#00f 198.5px,#0400ff 209.5px,#7500ff 363.5px)"></i><i style="background:linear-gradient(90deg,#00f 199.5px,#0300ff 209.5px,#7400ff 362.5px)"></i><i style="background:linear-gradient(90deg,#00f 200.5px,#0300ff 209.5px,#7300ff 361.5px)"></i><i style="background:linear-gradient(90deg,#00f 201.5px,#0500ff 211.5px,#7200ff 360.5px)"></i><i style="background:linear-gradient(90deg,#00f 202.5px,#0c00ff 221.5px,#7100ff 359.5px)"></i><i style="background:linear-gradient(90deg,#00f 203.5px,#7000ff 358.5px)"></i><i style="background:linear-gradient(90deg,#00f 204.5px,#6f00ff 357.5px)"></i><i style="background:linear-gradient(90deg,#00f 205.5px,#6e00ff 356.5px)"></i><i style="background:linear-gradient(90deg,#00f 206.5px,#6c00ff 355.5px)"></i><i style="background:linear-gradient(90deg,#0100ff 207.5px,#6b00ff 354.5px)"></i><i style="background:linear-gradient(90deg,#0100ff 208.5px,#6a00ff 353.5px)"></i><i style="background:linear-gradient(90deg,#0200ff 209.5px,#6900ff 352.5px)"></i><i style="background:linear-gradient(90deg,#0300ff 210.5px,#6800ff 351.5px)"></i><i style="background:linear-gradient(90deg,#0400ff 212.5px,#6700ff 350.5px)"></i><i style="background:linear-gradient(90deg,#0500ff 213.5px,#60f 349.5px)"></i><i style="background:linear-gradient(90deg,#0500ff 214.5px,#6500ff 348.5px)"></i><i style="background:linear-gradient(90deg,#0600ff 215.5px,#6400ff 347.5px)"></i><i style="background:linear-gradient(90deg,#0700ff 216.5px,#6300ff 346.5px)"></i><i style="background:linear-gradient(90deg,#0700ff 217.5px,#6200ff 345.5px)"></i><i style="background:linear-gradient(90deg,#0800ff 218.5px,#6100ff 344.5px)"></i><i style="background:linear-gradient(90deg,#0800ff 219.5px,#6000ff 343.5px)"></i><i style="background:linear-gradient(90deg,#0a00ff 221.5px,#5f00ff 342.5px)"></i><i style="background:linear-gradient(90deg,#0a00ff 222.5px,#5e00ff 341.5px)"></i><i style="background:linear-gradient(90deg,#0b00ff 223.5px,#5c00ff 340.5px)"></i><i style="background:linear-gradient(90deg,#0b00ff 224.5px,#5b00ff 339.5px)"></i><i style="background:linear-gradient(90deg,#0c00ff 225.5px,#5a00ff 338.5px)"></i><i style="background:linear-gradient(90deg,#0d00ff 226.5px,#5900ff 337.5px)"></i><i style="background:linear-gradient(90deg,#0d00ff 227.5px,#5900ff 337.5px)"></i><i style="background:linear-gradient(90deg,#0e00ff 229.5px,#5800ff 336.5px)"></i><i style="background:linear-gradient(90deg,#0f00ff 230.5px,#5700ff 335.5px)"></i><i style="background:linear-gradient(90deg,#1000ff 231.5px,#5600ff 334.5px)"></i><i style="background:linear-gradient(90deg,#0f00ff 231.5px,#50f 333.5px)"></i><i style="background:linear-gradient(90deg,#1000ff 232.5px,#5400ff 332.5px)"></i><i style="background:linear-gradient(90deg,#10f 234.5px,#5300ff 331.5px)"></i><i style="background:linear-gradient(90deg,#1200ff 235.5px,#5200ff 330.5px)"></i><i style="background:linear-gradient(90deg,#1200ff 236.5px,#5100ff 329.5px)"></i><i style="background:linear-gradient(90deg,#1300ff 237.5px,#5000ff 328.5px)"></i><i style="background:linear-gradient(90deg,#1400ff 239.5px,#4f00ff 327.5px)"></i><i style="background:linear-gradient(90deg,#1500ff 240.5px,#4e00ff 326.5px)"></i><i style="background:linear-gradient(90deg,#1600ff 242.5px,#4d00ff 325.5px)"></i><i style="background:linear-gradient(90deg,#1600ff 243.5px,#4c00ff 324.5px)"></i><i style="background:linear-gradient(90deg,#1700ff 244.5px,#4c00ff 323.5px)"></i><i style="background:linear-gradient(90deg,#1700ff 245.5px,#4b00ff 322.5px)"></i><i style="background:linear-gradient(90deg,#1800ff 246.5px,#4a00ff 321.5px)"></i><i style="background:linear-gradient(90deg,#1800ff 247.5px,#4900ff 320.5px)"></i><i style="background:linear-gradient(90deg,#1900ff 248.5px,#4800ff 319.5px)"></i><i style="background:linear-gradient(90deg,#1a00ff 250.5px,#4700ff 318.5px)"></i><i style="background:linear-gradient(90deg,#1b00ff 251.5px,#4600ff 317.5px)"></i><i style="background:linear-gradient(90deg,#1b00ff 252.5px,#4500ff 316.5px)"></i><i style="background:linear-gradient(90deg,#1c00ff 254.5px,#40f 315.5px)"></i><i style="background:linear-gradient(90deg,#1d00ff 255.5px,#4300ff 314.5px)"></i><i style="background:linear-gradient(90deg,#1d00ff 256.5px,#4200ff 313.5px)"></i><i style="background:linear-gradient(90deg,#1e00ff 257.5px,#4100ff 312.5px)"></i><i style="background:linear-gradient(90deg,#1f00ff 259.5px,#4100ff 311.5px)"></i><i style="background:linear-gradient(90deg,#1f00ff 260.5px,#4000ff 310.5px)"></i><i style="background:linear-gradient(90deg,#2000ff 261.5px,#3f00ff 310.5px)"></i><i style="background:linear-gradient(90deg,#2000ff 262.5px,#3f00ff 309.5px)"></i><i style="background:linear-gradient(90deg,#2100ff 263.5px,#3e00ff 308.5px)"></i><i style="background:linear-gradient(90deg,#20f 265.5px,#3d00ff 307.5px)"></i><i style="background:linear-gradient(90deg,#20f 266.5px,#3c00ff 306.5px)"></i><i style="background:linear-gradient(90deg,#2300ff 267.5px,#3b00ff 305.5px)"></i><i style="background:linear-gradient(90deg,#2400ff 269.5px,#3a00ff 304.5px)"></i><i style="background:linear-gradient(90deg,#2400ff 270.5px,#3900ff 303.5px)"></i><i style="background:linear-gradient(90deg,#2500ff 271.5px,#3800ff 302.5px)"></i><i style="background:linear-gradient(90deg,#2500ff 272.5px,#3800ff 301.5px)"></i><i style="background:linear-gradient(90deg,#2600ff 273.5px,#3700ff 300.5px)"></i><i style="background:linear-gradient(90deg,#2600ff 274.5px,#3600ff 299.5px)"></i><i style="background:linear-gradient(90deg,#2700ff 275.5px,#3500ff 298.5px)"></i><i style="background:linear-gradient(90deg,#2700ff 276.5px,#3400ff 297.5px)"></i><i style="background:linear-gradient(90deg,#2800ff 278.5px,#30f 296.5px)"></i><i style="background:linear-gradient(90deg,#2900ff 279.5px,#30f 295.5px)"></i><i style="background:linear-gradient(90deg,#2900ff 280.5px,#3200ff 294.5px)"></i><i style="background:linear-gradient(90deg,#2a00ff 282.5px,#3000ff 292.5px)"></i><i style="background:linear-gradient(90deg,#2b00ff 284.5px,#2e00ff 289.5px)"></i></div>
<div class="cie" style="left:1678px;top:515px;width:223px;height:150px"><i style="background:linear-gradient(90deg,#b3ff00 0.5px,#fffe00 181.5px,#ffec00 222.5px)"></i><i style="background:linear-gradient(90deg,#b3ff00 0.5px,#fffe00 180.5px,#ffec00 222.5px)"></i><i style="background:linear-gradient(90deg,#b4ff00 0.5px,#fffe00 179.5px,#ffec00 222.5px)"></i><i style="background:linear-gradient(90deg,#b4ff00 0.5px,#fffe00 178.5px,#ffeb00 222.5px)"></i><i style="background:linear-gradient(90deg,#b4ff00 0.5px,#fffd00 178.5px,#ffeb00 222.5px)"></i><i style="background:linear-gradient(90deg,#b5ff00 0.5px,#fffe00 177.5px,#ffea00 222.5px)"></i><i style="background:linear-gradient(90deg,#b5ff00 0.5px,#fffe00 176.5px,#ffea00 222.5px)"></i><i style="background:linear-gradient(90deg,#b5ff00 0.5px,#fffe00 175.5px,#ffea00 222.5px)"></i><i style="background:linear-gradient(90deg,#b5ff00 0.5px,#fffe00 174.5px,#ffe900 222.5px)"></i><i style="background:linear-gradient(90deg,#b6ff00 0.5px,#fffe00 173.5px,#ffe900 222.5px)"></i><i style="background:linear-gradient(90deg,#b6ff00 0.5px,#fffe00 172.5px,#ffe900 222.5px)"></i><i style="background:linear-gradient(90deg,#b6ff00 0.5px,#fffe00 171.5px,#ffe800 222.5px)"></i><i style="background:linear-gradient(90deg,#b7ff00 0.5px,#fffe00 170.5px,#ffe800 222.5px)"></i><i style="background:linear-gradient(90deg,#b7ff00 0.5px,#fffe00 169.5px,#ffe700 222.5px)"></i><i style="background:linear-gradient(90deg,#b7ff00 0.5px,#fffd00 169.5px,#ffe700 222.5px)"></i><i style="background:linear-gradient(90deg,#b8ff00 0.5px,#fffe00 168.5px,#ffe700 222.5px)"></i><i style="background:linear-gradient(90deg,#b8ff00 0.5px,#fffe00 167.5px,#ffe600 222.5px)"></i><i style="background:linear-gradient(90deg,#b8ff00 0.5px,#fffe00 166.5px,#ffe600 222.5px)"></i><i style="background:linear-gradient(90deg,#b9ff01 0.5px,#fffe00 165.5px,#ffe600 222.5px)"></i><i style="background:linear-gradient(90deg,#b9ff01 0.5px,#fffe00 164.5px,#ffe500 222.5px)"></i><i style="background:linear-gradient(90deg,#b9ff01 0.5px,#fffe00 163.5px,#ffe500 222.5px)"></i><i style="background:linear-gradient(90deg,#baff01 0.5px,#fffe00 162.5px,#ffe500 222.5px)"></i><i style="background:linear-gradient(90deg,#baff01 0.5px,#fffe00 161.5px,#ffe400 222.5px)"></i><i style="background:linear-gradient(90deg,#baff02 0.5px,#f5ff00 135.5px,#fffd00 161.5px,#ffe400 222.5px)"></i><i style="background:linear-gradient(90deg,#bbff02 0.5px,#df0 80.5px,#fffd00 160.5px,#ffe300 222.5px)"></i><i style="background:linear-gradient(90deg,#bbff02 0.5px,#d6ff00 63.5px,#fffe00 159.5px,#ffe300 222.5px)"></i><i style="background:linear-gradient(90deg,#bbff02 0.5px,#d3ff00 56.5px,#fffe00 158.5px,#ffe300 222.5px)"></i><i style="background:linear-gradient(90deg,#bcff03 0.5px,#d2ff00 53.5px,#fffe00 157.5px,#ffe200 222.5px)"></i><i style="background:linear-gradient(90deg,#bcff03 0.5px,#d2ff00 52.5px,#fffe00 156.5px,#ffe200 222.5px)"></i><i style="background:linear-gradient(90deg,#bcff03 0.5px,#d2ff00 52.5px,#fffe00 155.5px,#ffe200 222.5px)"></i><i style="background:linear-gradient(90deg,#bdff03 0.5px,#d3ff00 53.5px,#fffe00 154.5px,#ffe100 222.5px)"></i><i style="background:linear-gradient(90deg,#bdff03 0.5px,#d3ff00 53.5px,#fffe00 153.5px,#ffe100 222.5px)"></i><i style="background:linear-gradient(90deg,#bdff04 0.5px,#d4ff00 54.5px,#fffe00 152.5px,#ffe100 222.5px)"></i><i style="background:linear-gradient(90deg,#beff04 0.5px,#d5ff00 54.5px,#fffe00 151.5px,#ffe000 222.5px)"></i><i style="background:linear-gradient(90deg,#beff04 0.5px,#d5ff00 55.5px,#fffd00 151.5px,#ffe000 222.5px)"></i><i style="background:linear-gradient(90deg,#beff04 0.5px,#d7ff00 57.5px,#fffd00 150.5px,#ffdf00 222.5px)"></i><i style="background:linear-gradient(90deg,#bfff04 0.5px,#d8ff00 59.5px,#fffe00 149.5px,#ffdf00 222.5px)"></i><i style="background:linear-gradient(90deg,#bfff05 0.5px,#d9ff00 60.5px,#fffe00 148.5px,#ffdf00 222.5px)"></i><i style="background:linear-gradient(90deg,#bfff05 0.5px,#daff00 62.5px,#fffe00 147.5px,#ffde00 222.5px)"></i><i style="background:linear-gradient(90deg,#c0ff05 0.5px,#dbff00 63.5px,#fffe00 146.5px,#ffde00 222.5px)"></i><i style="background:linear-gradient(90deg,#c0ff05 0.5px,#dbff00 64.5px,#fffe00 145.5px,#ffde00 222.5px)"></i><i style="background:linear-gradient(90deg,#c0ff05 0.5px,#df0 66.5px,#fffe00 144.5px,#fd0 222.5px)"></i><i style="background:linear-gradient(90deg,#c1ff06 0.5px,#deff00 67.5px,#fffe00 143.5px,#fd0 222.5px)"></i><i style="background:linear-gradient(90deg,#c1ff06 0.5px,#dfff00 69.5px,#fffe00 142.5px,#fd0 222.5px)"></i><i style="background:linear-gradient(90deg,#c1ff06 0.5px,#e0ff00 71.5px,#fffd00 142.5px,#ffdc00 222.5px)"></i><i style="background:linear-gradient(90deg,#c2ff06 0.5px,#e1ff00 73.5px,#fffd00 141.5px,#ffdc00 222.5px)"></i><i style="background:linear-gradient(90deg,#c2ff07 0.5px,#e2ff00 74.5px,#fffe00 140.5px,#ffdc00 222.5px)"></i><i style="background:linear-gradient(90deg,#c2ff07 0.5px,#e3ff00 76.5px,#fffe00 139.5px,#ffdb00 222.5px)"></i><i style="background:linear-gradient(90deg,#c3ff07 0.5px,#e5ff00 78.5px,#fffe00 138.5px,#ffdb00 222.5px)"></i><i style="background:linear-gradient(90deg,#c3ff07 0.5px,#e6ff00 79.5px,#fffe00 137.5px,#ffda00 222.5px)"></i><i style="background:linear-gradient(90deg,#c3ff07 0.5px,#e7ff00 81.5px,#fffe00 136.5px,#ffda00 222.5px)"></i><i style="background:linear-gradient(90deg,#c4ff08 0.5px,#e8ff00 83.5px,#fffe00 135.5px,#ffda00 222.5px)"></i><i style="background:linear-gradient(90deg,#c4ff08 0.5px,#e9ff00 85.5px,#fffe00 134.5px,#ffd900 222.5px)"></i><i style="background:linear-gradient(90deg,#c4ff08 0.5px,#ebff00 87.5px,#fffd00 134.5px,#ffd900 222.5px)"></i><i style="background:linear-gradient(90deg,#c5ff08 0.5px,#ecff00 88.5px,#fffd00 133.5px,#ffd900 222.5px)"></i><i style="background:linear-gradient(90deg,#c5ff08 0.5px,#edff00 90.5px,#fffd00 132.5px,#ffd800 222.5px)"></i><i style="background:linear-gradient(90deg,#c5ff09 0.5px,#ef0 92.5px,#fffe00 131.5px,#ffd800 222.5px)"></i><i style="background:linear-gradient(90deg,#c6ff09 0.5px,#efff00 93.5px,#fffe00 130.5px,#ffd800 222.5px)"></i><i style="background:linear-gradient(90deg,#c6ff09 0.5px,#f0ff00 95.5px,#fffe00 129.5px,#ffd700 222.5px)"></i><i style="background:linear-gradient(90deg,#c6ff09 0.5px,#f2ff00 97.5px,#fffe00 128.5px,#ffd700 222.5px)"></i><i style="background:linear-gradient(90deg,#c7ff09 0.5px,#f3ff00 99.5px,#fffe00 127.5px,#ffd700 222.5px)"></i><i style="background:linear-gradient(90deg,#c7ff0a 0.5px,#f4ff00 101.5px,#fffd00 127.5px,#ffd600 222.5px)"></i><i style="background:linear-gradient(90deg,#c7ff0a 0.5px,#f6ff00 103.5px,#fffd00 126.5px,#ffd600 222.5px)"></i><i style="background:linear-gradient(90deg,#c8ff0a 0.5px,#f7ff00 104.5px,#fffd00 125.5px,#ffd600 222.5px)"></i><i style="background:linear-gradient(90deg,#c8ff0a 0.5px,#f8ff00 106.5px,#fffd00 124.5px,#ffd500 222.5px)"></i><i style="background:linear-gradient(90deg,#c8ff0b 0.5px,#f9ff00 108.5px,#fffd00 124.5px,#ffd500 222.5px)"></i><i style="background:linear-gradient(90deg,#c9ff0b 0.5px,#fbff00 110.5px,#fffd00 123.5px,#ffd400 222.5px)"></i><i style="background:linear-gradient(90deg,#c9ff0b 0.5px,#fcff00 112.5px,#fffc00 124.5px,#ffd400 222.5px)"></i><i style="background:linear-gradient(90deg,#caff0b 0.5px,#feff00 114.5px,#ffd400 222.5px)"></i><i style="background:linear-gradient(90deg,#caff0b 0.5px,#feff00 115.5px,#ffd300 222.5px)"></i><i style="background:linear-gradient(90deg,#caff0c 0.5px,#fffe00 117.5px,#ffd400 219.5px,#ffd300 222.5px)"></i><i style="background:linear-gradient(90deg,#cbff0c 0.5px,#fffe00 117.5px,#ffd400 219.5px,#ffd300 222.5px)"></i><i style="background:linear-gradient(90deg,#cbff0c 0.5px,#fffe00 116.5px,#ffd400 218.5px,#ffd200 222.5px)"></i><i style="background:linear-gradient(90deg,#cbff0c 0.5px,#fffe00 115.5px,#ffd400 217.5px,#ffd200 222.5px)"></i><i style="background:linear-gradient(90deg,#ccff0d 0.5px,#fffe00 114.5px,#ffd400 216.5px,#ffd200 222.5px)"></i><i style="background:linear-gradient(90deg,#ccff0d 0.5px,#fffd00 114.5px,#ffd300 216.5px,#ffd100 222.5px)"></i><i style="background:linear-gradient(90deg,#ccff0d 0.5px,#fffe00 113.5px,#ffd300 215.5px,#ffd100 222.5px)"></i><i style="background:linear-gradient(90deg,#cdff0d 0.5px,#fffe00 112.5px,#ffd300 214.5px,#ffd100 222.5px)"></i><i style="background:linear-gradient(90deg,#cdff0d 0.5px,#fffe01 111.5px,#ffd400 213.5px,#ffd000 222.5px)"></i><i style="background:linear-gradient(90deg,#ceff0e 0.5px,#fffe01 110.5px,#ffd400 212.5px,#ffd000 222.5px)"></i><i style="background:linear-gradient(90deg,#ceff0e 0.5px,#fffe02 109.5px,#ffd400 211.5px,#ffd000 222.5px)"></i><i style="background:linear-gradient(90deg,#ceff0e 0.5px,#fffe02 108.5px,#ffe100 175.5px,#ffcf00 222.5px)"></i><i style="background:linear-gradient(90deg,#cfff0e 0.5px,#fffe02 107.5px,#ffe700 159.5px,#ffcf00 222.5px)"></i><i style="background:linear-gradient(90deg,#cfff0e 0.5px,#fffe03 106.5px,#ffe800 154.5px,#ffcf00 222.5px)"></i><i style="background:linear-gradient(90deg,#cfff0f 0.5px,#fffe03 105.5px,#ffe800 153.5px,#ffce00 222.5px)"></i><i style="background:linear-gradient(90deg,#d0ff0f 0.5px,#fffd03 105.5px,#ffe800 153.5px,#ffce00 222.5px)"></i><i style="background:linear-gradient(90deg,#d0ff0f 0.5px,#fffe04 104.5px,#ffe800 153.5px,#ffce00 222.5px)"></i><i style="background:linear-gradient(90deg,#d0ff0f 0.5px,#fffe04 103.5px,#ffe700 153.5px,#ffcd00 222.5px)"></i><i style="background:linear-gradient(90deg,#d1ff10 0.5px,#fffe04 102.5px,#ffe600 154.5px,#ffcd00 222.5px)"></i><i style="background:linear-gradient(90deg,#d1ff10 0.5px,#fffe05 101.5px,#ffe600 155.5px,#ffcd00 222.5px)"></i><i style="background:linear-gradient(90deg,#d2ff10 0.5px,#fffe05 100.5px,#ffe400 157.5px,#fc0 222.5px)"></i><i style="background:linear-gradient(90deg,#d2ff10 0.5px,#fffe05 99.5px,#ffe400 158.5px,#fc0 222.5px)"></i><i style="background:linear-gradient(90deg,#d2ff10 0.5px,#fffe06 98.5px,#ffe300 160.5px,#fc0 222.5px)"></i><i style="background:linear-gradient(90deg,#d3ff11 0.5px,#fffe06 97.5px,#ffe200 161.5px,#ffcb00 222.5px)"></i><i style="background:linear-gradient(90deg,#d3ff11 0.5px,#fffe06 96.5px,#ffe100 163.5px,#ffcb00 222.5px)"></i><i style="background:linear-gradient(90deg,#d3ff11 0.5px,#fffd07 96.5px,#ffe000 164.5px,#ffcb00 222.5px)"></i><i style="background:linear-gradient(90deg,#d4ff11 0.5px,#fffd07 95.5px,#ffdf00 166.5px,#ffca00 222.5px)"></i><i style="background:linear-gradient(90deg,#d4ff12 0.5px,#fffe07 94.5px,#fd0 168.5px,#ffca00 222.5px)"></i><i style="background:linear-gradient(90deg,#d5ff12 0.5px,#fffe08 93.5px,#ffdc00 170.5px,#ffc900 222.5px)"></i><i style="background:linear-gradient(90deg,#d5ff12 0.5px,#fffe08 92.5px,#ffdc00 171.5px,#ffc900 222.5px)"></i><i style="background:linear-gradient(90deg,#d5ff12 0.5px,#fffe08 91.5px,#ffda00 173.5px,#ffc900 222.5px)"></i><i style="background:linear-gradient(90deg,#d6ff13 0.5px,#fffe09 90.5px,#ffd900 175.5px,#ffc800 222.5px)"></i><i style="background:linear-gradient(90deg,#d6ff13 0.5px,#fffe09 89.5px,#ffd800 177.5px,#ffc800 222.5px)"></i><i style="background:linear-gradient(90deg,#d6ff13 0.5px,#fffe09 88.5px,#ffd700 178.5px,#ffc800 222.5px)"></i><i style="background:linear-gradient(90deg,#d7ff13 0.5px,#fffe0a 87.5px,#ffd600 180.5px,#ffc700 222.5px)"></i><i style="background:linear-gradient(90deg,#d7ff13 0.5px,#fffd0a 87.5px,#ffd500 182.5px,#ffc700 222.5px)"></i><i style="background:linear-gradient(90deg,#d8ff14 0.5px,#fffd0a 86.5px,#ffd400 184.5px,#ffc700 222.5px)"></i><i style="background:linear-gradient(90deg,#d8ff14 0.5px,#fffe0b 85.5px,#ffd300 185.5px,#ffc600 222.5px)"></i><i style="background:linear-gradient(90deg,#d8ff14 0.5px,#fffe0b 84.5px,#ffd300 184.5px,#ffc600 222.5px)"></i><i style="background:linear-gradient(90deg,#d9ff14 0.5px,#fffe0b 83.5px,#ffd400 182.5px,#ffc600 222.5px)"></i><i style="background:linear-gradient(90deg,#d9ff15 0.5px,#fffe0c 82.5px,#ffd400 181.5px,#ffc500 222.5px)"></i><i style="background:linear-gradient(90deg,#daff15 0.5px,#fffe0c 81.5px,#ffd400 180.5px,#ffc500 222.5px)"></i><i style="background:linear-gradient(90deg,#daff15 0.5px,#fffe0c 80.5px,#ffd400 179.5px,#ffc500 222.5px)"></i><i style="background:linear-gradient(90deg,#daff15 0.5px,#fffe0d 79.5px,#ffd401 178.5px,#ffc400 222.5px)"></i><i style="background:linear-gradient(90deg,#dbff15 0.5px,#fffe0d 78.5px,#ffd401 177.5px,#ffc400 222.5px)"></i><i style="background:linear-gradient(90deg,#dbff16 0.5px,#fffd0d 78.5px,#ffd301 177.5px,#ffc400 222.5px)"></i><i style="background:linear-gradient(90deg,#dbff16 0.5px,#fffd0e 77.5px,#ffd301 176.5px,#ffc300 222.5px)"></i><i style="background:linear-gradient(90deg,#dcff16 0.5px,#fffe0e 76.5px,#ffd302 175.5px,#ffc300 222.5px)"></i><i style="background:linear-gradient(90deg,#dcff16 0.5px,#fffe0e 75.5px,#ffd302 174.5px,#ffc300 222.5px)"></i><i style="background:linear-gradient(90deg,#ddff17 0.5px,#fffe0f 74.5px,#ffd302 173.5px,#ffc200 222.5px)"></i><i style="background:linear-gradient(90deg,#ddff17 0.5px,#fffe0f 73.5px,#ffd303 172.5px,#ffc200 222.5px)"></i><i style="background:linear-gradient(90deg,#ddff17 0.5px,#fffe0f 72.5px,#ffd403 170.5px,#ffc200 222.5px)"></i><i style="background:linear-gradient(90deg,#deff17 0.5px,#fffe10 71.5px,#ffd403 169.5px,#ffc100 222.5px)"></i><i style="background:linear-gradient(90deg,#deff18 0.5px,#fffe10 70.5px,#ffd404 168.5px,#ffc100 222.5px)"></i><i style="background:linear-gradient(90deg,#dfff18 0.5px,#fffe10 69.5px,#ffd404 167.5px,#ffc100 222.5px)"></i><i style="background:linear-gradient(90deg,#dfff18 0.5px,#fffd11 69.5px,#ffd404 167.5px,#ffc000 222.5px)"></i><i style="background:linear-gradient(90deg,#dfff18 0.5px,#fffd11 68.5px,#ffd405 166.5px,#ffc000 222.5px)"></i><i style="background:linear-gradient(90deg,#e0ff19 0.5px,#fffe11 67.5px,#ffd405 165.5px,#ffc000 222.5px)"></i><i style="background:linear-gradient(90deg,#e0ff19 0.5px,#fffe12 66.5px,#ffd405 164.5px,#ffc000 222.5px)"></i><i style="background:linear-gradient(90deg,#e1ff19 0.5px,#fffe12 65.5px,#ffd406 163.5px,#ffbf00 222.5px)"></i><i style="background:linear-gradient(90deg,#e1ff19 0.5px,#fffe12 64.5px,#ffd406 162.5px,#ffbf00 222.5px)"></i><i style="background:linear-gradient(90deg,#e1ff1a 0.5px,#fffe13 63.5px,#ffd406 161.5px,#ffbf00 222.5px)"></i><i style="background:linear-gradient(90deg,#e2ff1a 0.5px,#fffe13 62.5px,#ffd406 160.5px,#ffbe00 222.5px)"></i><i style="background:linear-gradient(90deg,#e2ff1a 0.5px,#fffe13 61.5px,#ffd407 158.5px,#ffbe00 222.5px)"></i><i style="background:linear-gradient(90deg,#e3ff1a 0.5px,#fffe14 60.5px,#ffd407 157.5px,#ffbe00 222.5px)"></i><i style="background:linear-gradient(90deg,#e3ff1a 0.5px,#fffd14 60.5px,#ffd307 158.5px,#ffbd00 222.5px)"></i><i style="background:linear-gradient(90deg,#e4ff1b 0.5px,#fffd14 59.5px,#ffd408 156.5px,#ffbd00 222.5px)"></i><i style="background:linear-gradient(90deg,#e4ff1b 0.5px,#fffe15 58.5px,#ffd408 155.5px,#ffbd01 222.5px)"></i><i style="background:linear-gradient(90deg,#e4ff1b 0.5px,#fffe15 57.5px,#ffd408 154.5px,#ffbc01 222.5px)"></i><i style="background:linear-gradient(90deg,#e5ff1b 0.5px,#fffe15 56.5px,#ffd409 153.5px,#ffbc01 222.5px)"></i><i style="background:linear-gradient(90deg,#e5ff1c 0.5px,#fffe16 55.5px,#ffd409 152.5px,#ffbc01 222.5px)"></i><i style="background:linear-gradient(90deg,#e6ff1c 0.5px,#fffe16 54.5px,#ffd409 151.5px,#ffbb01 222.5px)"></i><i style="background:linear-gradient(90deg,#e6ff1c 0.5px,#fffe16 53.5px,#ffd40a 150.5px,#ffbb02 222.5px)"></i><i style="background:linear-gradient(90deg,#e6ff1c 0.5px,#fffe17 52.5px,#ffd40a 149.5px,#ffbb02 222.5px)"></i><i style="background:linear-gradient(90deg,#e7ff1d 0.5px,#fffe17 51.5px,#ffd40a 148.5px,#ffba02 222.5px)"></i><i style="background:linear-gradient(90deg,#e7ff1d 0.5px,#fffd17 51.5px,#ffd30a 148.5px,#ffba02 222.5px)"></i><i style="background:linear-gradient(90deg,#e8ff1d 0.5px,#fffd18 50.5px,#ffd30b 147.5px,#ffba02 222.5px)"></i><i style="background:linear-gradient(90deg,#e8ff1d 0.5px,#fffe18 49.5px,#ffd30b 146.5px,#ffb903 222.5px)"></i><i style="background:linear-gradient(90deg,#e9ff1e 0.5px,#fffe18 48.5px,#ffd40b 144.5px,#ffb903 222.5px)"></i><i style="background:linear-gradient(90deg,#e9ff1e 0.5px,#fffe19 47.5px,#ffd40c 143.5px,#ffb903 222.5px)"></i></div>
<svg width="1920" height="1058" viewBox="0 0 1920 1058">
<clipPath id="plot"><rect x="1230.5" y="153.3" width="677.3" height="520.5"/></clipPath>
<g clip-path="url(#plot)">
<path d="M1526.7 656.3L1525.5 657.5L1524.1 658.4L1522.7 659.2L1521.3 659.7L1519.7 660.0L1518.1 660.2L1516.4 660.1L1514.7 659.8L1514.1 659.4L1513.5 659.0L1512.9 658.5L1512.2 658.0L1511.6 657.5L1510.9 656.9L1510.1 656.4L1509.3 655.7L1508.4 655.0L1507.5 654.3L1506.5 653.5L1505.5 652.7L1504.5 651.8L1503.4 650.9L1502.2 649.9L1501.0 648.9L1499.8 647.9L1498.6 646.8L1497.3 645.7L1495.9 644.6L1494.5 643.4L1493.1 642.2L1491.6 640.9L1490.0 639.6L1488.3 638.3L1486.6 636.8L1484.7 635.3L1482.8 633.8L1480.8 632.1L1478.7 630.4L1476.6 628.7L1474.4 626.9L1472.1 625.0L1469.8 623.1L1467.4 621.1L1465.0 619.1L1462.4 616.9L1459.8 614.6L1457.0 612.2L1454.1 609.7L1451.2 607.1L1448.1 604.3L1445.0 601.5L1441.9 598.5L1438.7 595.5L1435.4 592.3L1431.9 588.9L1428.4 585.2L1424.6 581.3L1420.7 576.9L1416.5 572.2L1412.1 567.1L1407.5 561.6L1402.6 555.8L1397.7 549.6L1392.6 543.0L1387.3 536.1L1381.9 528.9L1376.4 521.4L1370.8 513.5L1365.1 505.2L1359.4 496.6L1353.5 487.7L1347.5 478.4L1341.5 468.9L1335.5 459.1L1329.4 449.1L1323.3 438.9L1317.3 428.6L1311.3 418.3L1305.4 407.8L1299.6 397.4L1294.0 386.9L1288.7 376.5L1283.5 366.1L1278.7 355.9L1274.0 345.7L1269.6 335.8L1265.5 326.0L1261.6 316.5L1257.9 307.3L1254.5 298.4L1251.3 289.8L1248.3 281.5L1245.6 273.6L1243.2 266.0L1241.0 258.8L1239.1 252.0L1237.4 245.5L1235.9 239.4L1234.7 233.6L1233.7 228.1L1232.8 223.0L1232.2 218.2L1231.7 213.7L1231.4 209.4L1231.3 205.4L1231.4 201.7L1231.6 198.1L1232.0 194.8L1232.5 191.6L1233.2 188.7L1234.0 185.9L1235.0 183.4L1236.1 181.0L1237.4 178.9L1238.8 176.9L1240.3 175.1L1241.9 173.4L1243.6 172.0L1245.5 170.7L1247.4 169.5L1249.4 168.5L1251.5 167.6L1253.6 166.8L1255.9 166.2L1258.2 165.6L1260.5 165.1L1262.9 164.8L1265.4 164.5L1267.9 164.2L1270.4 164.0L1273.0 163.8L1275.7 163.7L1278.3 163.6L1281.0 163.5L1283.6 163.5L1286.3 163.5L1289.0 163.5L1291.7 163.5L1294.3 163.5L1297.0 163.5L1299.7 163.6L1302.4 163.7L1305.2 163.8L1307.9 163.9L1310.7 164.0L1313.5 164.1L1316.4 164.3L1319.3 164.5L1322.2 164.6L1325.2 164.8L1328.2 165.1L1331.2 165.3L1334.3 165.5L1337.4 165.8L1340.6 166.0L1343.8 166.3L1347.0 166.6L1350.3 166.9L1353.7 167.2L1357.1 167.5L1360.6 167.9L1364.1 168.2L1367.7 168.6L1371.3 169.0L1375.0 169.3L1378.7 169.7L1382.6 170.1L1386.5 170.5L1390.4 171.0L1394.5 171.4L1398.6 171.8L1402.8 172.3L1407.0 172.8L1411.3 173.2L1415.7 173.7L1420.1 174.2L1424.7 174.7L1429.3 175.3L1434.0 175.8L1438.8 176.3L1443.6 176.9L1448.6 177.4L1453.6 178.0L1458.7 178.6L1463.9 179.2L1469.1 179.8L1474.5 180.4L1479.9 181.0L1485.4 181.6L1491.0 182.3L1496.6 182.9L1502.4 183.6L1508.2 184.3L1514.1 184.9L1520.1 185.6L1526.2 186.3L1532.3 187.0L1538.6 187.8L1544.9 188.5L1551.2 189.2L1557.7 190.0L1564.2 190.7L1570.7 191.5L1577.4 192.2L1584.0 193.0L1590.8 193.7L1597.5 194.5L1604.4 195.3L1611.2 196.1L1618.1 196.9L1625.1 197.7L1632.0 198.5L1638.8 199.3L1645.7 200.1L1652.4 200.9L1659.1 201.6L1665.8 202.4L1672.4 203.2L1679.1 203.9L1685.7 204.7L1692.3 205.4L1698.9 206.2L1705.4 206.9L1711.9 207.7L1718.3 208.4L1724.6 209.1L1730.8 209.8L1736.9 210.5L1742.8 211.2L1748.6 211.9L1754.3 212.5L1759.9 213.2L1765.4 213.8L1770.8 214.4L1776.0 215.0L1781.2 215.6L1786.2 216.2L1791.1 216.8L1795.8 217.3L1800.5 217.8L1804.9 218.4L1809.3 218.9L1813.5 219.4L1817.6 219.8L1821.6 220.3L1825.5 220.7L1829.2 221.1L1832.9 221.6L1836.4 222.0L1839.9 222.4L1843.2 222.7L1846.4 223.1L1849.6 223.5L1852.7 223.8L1855.7 224.2L1858.6 224.5L1861.5 224.8L1864.3 225.2L1867.0 225.5L1869.7 225.8L1872.3 226.1L1874.8 226.4L1877.3 226.7L1879.7 227.0L1882.0 227.2L1884.3 227.5L1886.5 227.7L1888.6 228.0L1890.6 228.2L1892.6 228.4L1894.5 228.6L1896.3 228.8L1898.0 229.0L1899.7 229.2L1901.3 229.4L1902.8 229.6L1904.3 229.8L1905.7 229.9L1907.0 230.1L1908.3 230.2L1909.5 230.4L1910.7 230.5L1911.9 230.6L1913.0 230.8L1914.0 230.9L1915.0 231.0L1916.0 231.1L1916.9 231.2L1917.8 231.3L1918.6 231.4L1919.3 231.5L1920.0 231.6L1920.7 231.6L1921.3 231.7L1921.8 231.8L1922.3 231.8L1922.8 231.9L1923.3 232.0L1923.8 232.0L1924.3 232.1L1924.7 232.1L1925.2 232.2L1925.6 232.2L1926.0 232.3L1926.4 232.3L1926.8 232.3L1927.1 232.4L1927.4 232.4L1927.8 232.5L1928.1 232.5L1928.5 232.5L1928.8 232.6L1929.2 232.6L1929.5 232.7L1929.9 232.7L1930.2 232.7L1930.6 232.8L1930.9 232.8L1931.2 232.9L1931.5 232.9L1931.8 232.9L1932.1 233.0L1932.3 233.0L1932.5 233.0L1932.7 233.0L1932.9 233.1L1933.1 233.1L1933.3 233.1L1933.4 233.1L1933.5 233.1L1933.6 233.1L1933.7 233.2L1933.8 233.2L1933.9 233.2L1933.9 233.2L1934.0 233.2L1934.0 233.2L1934.1 233.2L1934.1 233.2L1934.2 233.2ZM1739.0 219.9L1371.0 185.5L1428.0 537.0Z" fill="#000" fill-rule="evenodd" fill-opacity="0.4"/>
<rect x="1423.6" y="236.2" width="14.6" height="14.6" fill="none" stroke="#fff" stroke-width="1.6"/>
<rect x="1404.8" y="218.8" width="14.6" height="14.6" fill="none" stroke="#fff" stroke-width="1.6"/>
<rect x="1388.6" y="202.3" width="14.6" height="14.6" fill="none" stroke="#fff" stroke-width="1.6"/>
<rect x="1376.3" y="189.2" width="14.6" height="14.6" fill="none" stroke="#fff" stroke-width="1.6"/>
<rect x="1363.3" y="177.3" width="14.6" height="14.6" fill="none" stroke="#fff" stroke-width="1.6"/>
<rect x="1447.8" y="239.6" width="14.6" height="14.6" fill="none" stroke="#fff" stroke-width="1.6"/>
<rect x="1449.4" y="224.7" width="14.6" height="14.6" fill="none" stroke="#fff" stroke-width="1.6"/>
<rect x="1450.8" y="211.5" width="14.6" height="14.6" fill="none" stroke="#fff" stroke-width="1.6"/>
<rect x="1451.7" y="198.9" width="14.6" height="14.6" fill="none" stroke="#fff" stroke-width="1.6"/>
<rect x="1452.7" y="185.3" width="14.6" height="14.6" fill="none" stroke="#fff" stroke-width="1.6"/>
<rect x="1433.9" y="261.5" width="14.6" height="14.6" fill="none" stroke="#fff" stroke-width="1.6"/>
<rect x="1419.8" y="263.6" width="14.6" height="14.6" fill="none" stroke="#fff" stroke-width="1.6"/>
<rect x="1405.8" y="266.2" width="14.6" height="14.6" fill="none" stroke="#fff" stroke-width="1.6"/>
<rect x="1391.6" y="268.1" width="14.6" height="14.6" fill="none" stroke="#fff" stroke-width="1.6"/>
<rect x="1379" y="270.6" width="14.6" height="14.6" fill="none" stroke="#fff" stroke-width="1.6"/>
<rect x="1497.7" y="250.4" width="14.6" height="14.6" fill="none" stroke="#fff" stroke-width="1.6"/>
<rect x="1553.7" y="240.3" width="14.6" height="14.6" fill="none" stroke="#fff" stroke-width="1.6"/>
<rect x="1605.6" y="233.2" width="14.6" height="14.6" fill="none" stroke="#fff" stroke-width="1.6"/>
<rect x="1663.5" y="222.7" width="14.6" height="14.6" fill="none" stroke="#fff" stroke-width="1.6"/>
<rect x="1731.2" y="211.5" width="14.6" height="14.6" fill="none" stroke="#fff" stroke-width="1.6"/>
<rect x="1463.7" y="276.1" width="14.6" height="14.6" fill="none" stroke="#fff" stroke-width="1.6"/>
<rect x="1484.1" y="296.8" width="14.6" height="14.6" fill="none" stroke="#fff" stroke-width="1.6"/>
<rect x="1504.4" y="317.8" width="14.6" height="14.6" fill="none" stroke="#fff" stroke-width="1.6"/>
<rect x="1532.1" y="345.5" width="14.6" height="14.6" fill="none" stroke="#fff" stroke-width="1.6"/>
<rect x="1566.8" y="378.6" width="14.6" height="14.6" fill="none" stroke="#fff" stroke-width="1.6"/>
<rect x="1442.2" y="291.2" width="14.6" height="14.6" fill="none" stroke="#fff" stroke-width="1.6"/>
<rect x="1439.7" y="330" width="14.6" height="14.6" fill="none" stroke="#fff" stroke-width="1.6"/>
<rect x="1435.5" y="377.4" width="14.6" height="14.6" fill="none" stroke="#fff" stroke-width="1.6"/>
<rect x="1429.5" y="437.9" width="14.6" height="14.6" fill="none" stroke="#fff" stroke-width="1.6"/>
<rect x="1421" y="529.1" width="14.6" height="14.6" fill="none" stroke="#fff" stroke-width="1.6"/>
<rect x="1445.5" y="259.4" width="13.8" height="13.8" fill="none" stroke="#000" stroke-width="1.6"/>
<circle cx="1434" cy="242.8" r="4.15" fill="#9cba9c" stroke="#0a0a0a" stroke-width="1.25"/>
<circle cx="1422.4" cy="228.7" r="4.15" fill="#84b484" stroke="#0a0a0a" stroke-width="1.25"/>
<circle cx="1412.3" cy="214.1" r="4.15" fill="#6fb06f" stroke="#0a0a0a" stroke-width="1.25"/>
<circle cx="1400.7" cy="202.9" r="4.15" fill="#5fae5f" stroke="#0a0a0a" stroke-width="1.25"/>
<circle cx="1392" cy="189.5" r="4.15" fill="#0aa80a" stroke="#0a0a0a" stroke-width="1.25"/>
<circle cx="1452.7" cy="245.9" r="4.15" fill="#bcbca0" stroke="#0a0a0a" stroke-width="1.25"/>
<circle cx="1456.8" cy="231.7" r="4.15" fill="#bebc84" stroke="#0a0a0a" stroke-width="1.25"/>
<circle cx="1460" cy="220.1" r="4.15" fill="#bcb870" stroke="#0a0a0a" stroke-width="1.25"/>
<circle cx="1462.9" cy="208.4" r="4.15" fill="#b8b45c" stroke="#0a0a0a" stroke-width="1.25"/>
<circle cx="1465.7" cy="196.9" r="4.15" fill="#c4c000" stroke="#0a0a0a" stroke-width="1.25"/>
<circle cx="1438" cy="263.1" r="4.15" fill="#9cbaba" stroke="#0a0a0a" stroke-width="1.25"/>
<circle cx="1426.6" cy="266.3" r="4.15" fill="#84b6b6" stroke="#0a0a0a" stroke-width="1.25"/>
<circle cx="1416.4" cy="267.9" r="4.15" fill="#6fb2b2" stroke="#0a0a0a" stroke-width="1.25"/>
<circle cx="1405.2" cy="270.4" r="4.15" fill="#5fb0b0" stroke="#0a0a0a" stroke-width="1.25"/>
<circle cx="1393.4" cy="273.6" r="4.15" fill="#0ab0b4" stroke="#0a0a0a" stroke-width="1.25"/>
<circle cx="1488.7" cy="251.7" r="4.15" fill="#b48484" stroke="#0a0a0a" stroke-width="1.25"/>
<circle cx="1529.8" cy="243" r="4.15" fill="#b8686c" stroke="#0a0a0a" stroke-width="1.25"/>
<circle cx="1569.5" cy="235.9" r="4.15" fill="#c05454" stroke="#0a0a0a" stroke-width="1.25"/>
<circle cx="1612.9" cy="225.9" r="4.15" fill="#c84040" stroke="#0a0a0a" stroke-width="1.25"/>
<circle cx="1659.1" cy="217.3" r="4.15" fill="#c00808" stroke="#0a0a0a" stroke-width="1.25"/>
<circle cx="1460" cy="274.9" r="4.15" fill="#b89cb8" stroke="#0a0a0a" stroke-width="1.25"/>
<circle cx="1471.9" cy="289.5" r="4.15" fill="#b684b6" stroke="#0a0a0a" stroke-width="1.25"/>
<circle cx="1483.3" cy="302.3" r="4.15" fill="#b46fb4" stroke="#0a0a0a" stroke-width="1.25"/>
<circle cx="1498.9" cy="322.7" r="4.15" fill="#b45ab4" stroke="#0a0a0a" stroke-width="1.25"/>
<circle cx="1516.2" cy="344.4" r="4.15" fill="#b80ab8" stroke="#0a0a0a" stroke-width="1.25"/>
<circle cx="1442.5" cy="286.6" r="4.15" fill="#9c9cba" stroke="#0a0a0a" stroke-width="1.25"/>
<circle cx="1434" cy="315.4" r="4.15" fill="#8484bc" stroke="#0a0a0a" stroke-width="1.25"/>
<circle cx="1425.6" cy="348.5" r="4.15" fill="#7070c0" stroke="#0a0a0a" stroke-width="1.25"/>
<circle cx="1413.8" cy="393.4" r="4.15" fill="#5c5cc4" stroke="#0a0a0a" stroke-width="1.25"/>
<circle cx="1397.7" cy="451.3" r="4.15" fill="#0a0ac8" stroke="#0a0a0a" stroke-width="1.25"/>
<circle cx="1448.7" cy="263.2" r="4.3" fill="#fff" stroke="#000" stroke-width="1.4"/>
</g>
<path d="M1229.75 152.3H1908.9V674.4H1229.75Z" fill="none" stroke="#b8b8b8" stroke-width="1.7"/>
<path d="M1678 515H1901V649.7L1678 530.6Z" fill="#000" fill-opacity="0.4"/>
<rect x="1674.5" y="511.3" width="230.2" height="157" fill="none" stroke="#363636" stroke-width="2.4"/>
<rect x="1677.6" y="513.9" width="224.2" height="151.6" fill="none" stroke="#9a9a9a" stroke-width="1.6"/>
<rect x="1781.5" y="581.8" width="14.2" height="14.2" fill="none" stroke="#fff" stroke-width="1.5"/>
<circle cx="1782.8" cy="646.9" r="4.4" fill="#c3c300" stroke="#000" stroke-width="1.4"/>
</svg>
</body></html>
